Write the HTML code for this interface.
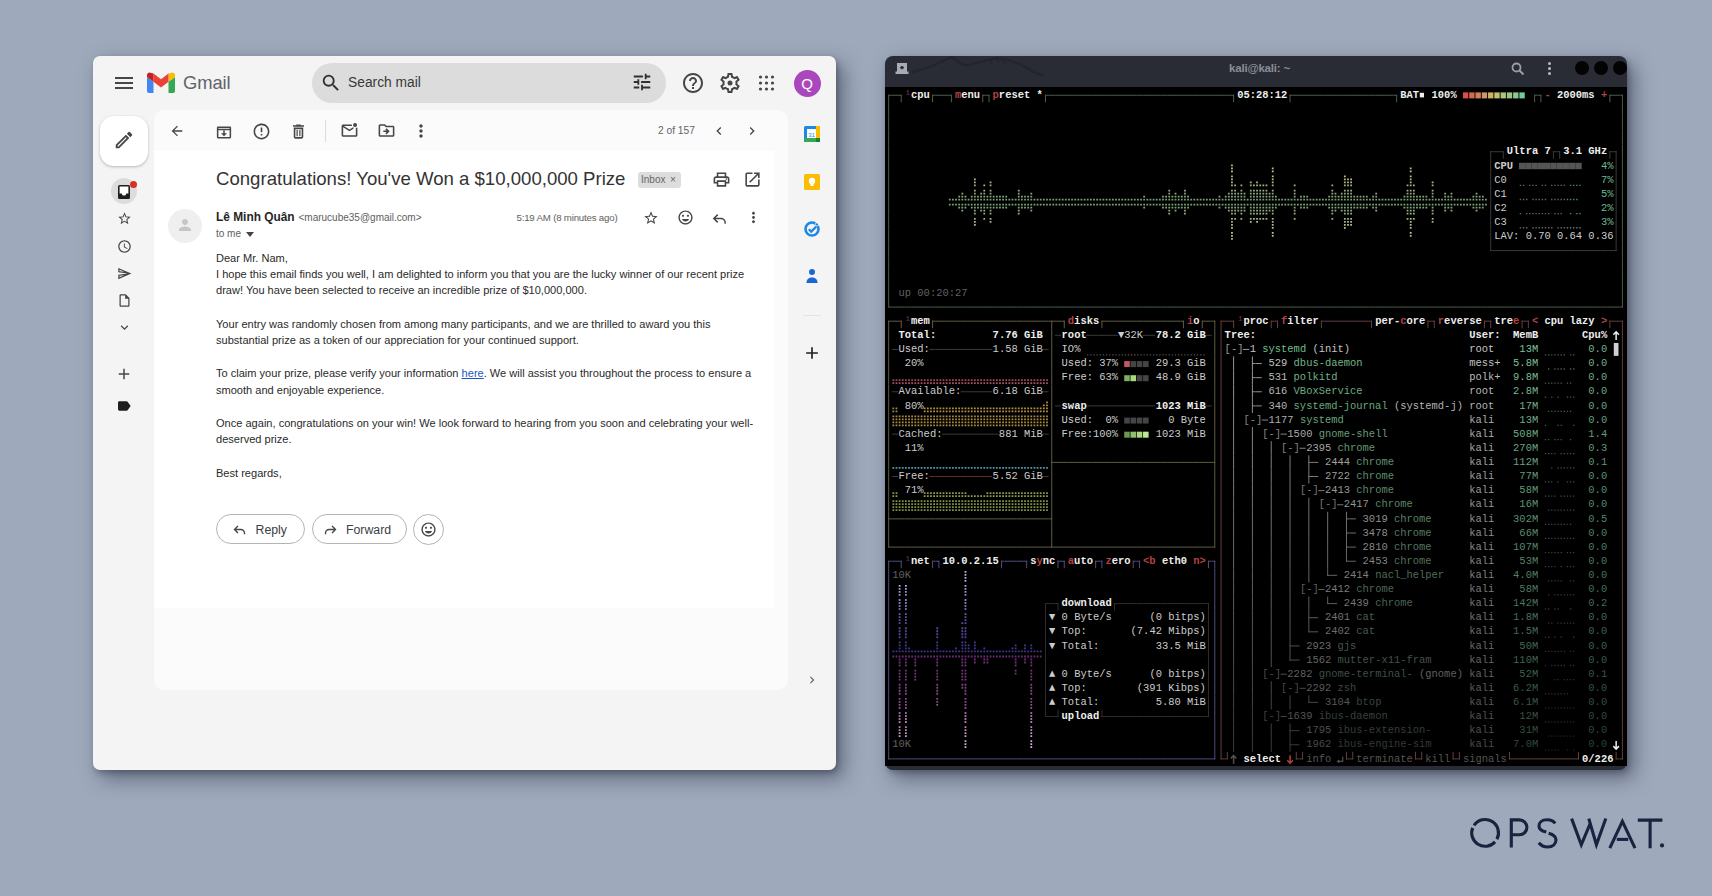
<!DOCTYPE html>
<html><head><meta charset="utf-8"><style>
html,body{margin:0;padding:0;}
body{width:1712px;height:896px;position:relative;overflow:hidden;background:#9ea9bb;font-family:"Liberation Sans",sans-serif;}
.t{position:absolute;white-space:pre;font-family:"Liberation Mono",monospace;}
</style></head><body>
<div style="position:absolute;left:93px;top:56px;width:743px;height:714px;background:#f4f4f4;border-radius:7px;box-shadow:7px 8px 20px rgba(38,45,64,0.55), 2px 3px 5px rgba(38,45,64,0.3);"></div>
<svg style="position:absolute;left:112px;top:71px" width="24" height="24" viewBox="0 0 24 24"><path fill="#444746" d="M3 18h18v-2H3v2zm0-5h18v-2H3v2zm0-7v2h18V6H3z"/></svg>
<svg style="position:absolute;left:147px;top:72px" width="28" height="21" viewBox="0 0 28 21"><path fill="#4285f4" d="M2 21h4.5V9.8L0 5v14a2 2 0 0 0 2 2z"/><path fill="#34a853" d="M21.5 21H26a2 2 0 0 0 2-2V5l-6.5 4.8z"/><path fill="#fbbc04" d="M21.5 1.5v8.3L28 5V3.2c0-2.2-2.5-3.4-4.2-2.1z"/><path fill="#ea4335" d="M6.5 9.8V1.5L14 7.2l7.5-5.7v8.3L14 15.5z"/><path fill="#c5221f" d="M0 3.2V5l6.5 4.8V1.5L4.2 1.1C2.5-.2 0 1 0 3.2z"/></svg>
<div style="position:absolute;left:183px;top:74.02px;font-size:18.4px;line-height:18.4px;color:#5f6368;font-weight:normal;white-space:pre;letter-spacing:-0.1px">Gmail</div>
<div style="position:absolute;left:312px;top:63px;width:354px;height:40px;border-radius:20px;background:#dcdcdc"></div>
<svg style="position:absolute;left:320px;top:72px" width="22" height="22" viewBox="0 0 24 24"><path fill="#303030" d="M15.5 14h-.79l-.28-.27A6.471 6.471 0 0 0 16 9.5 6.5 6.5 0 1 0 9.5 16c1.61 0 3.09-.59 4.23-1.57l.27.28v.79l5 4.99L20.49 19l-4.99-5zm-6 0C7.01 14 5 11.99 5 9.5S7.01 5 9.5 5 14 7.01 14 9.5 11.99 14 9.5 14z"/></svg>
<div style="position:absolute;left:348px;top:75.72px;font-size:13.8px;line-height:13.8px;color:#383838;font-weight:normal;white-space:pre;">Search mail</div>
<svg style="position:absolute;left:631px;top:71px" width="22" height="22" viewBox="0 0 24 24"><path fill="#303030" d="M3 17v2h6v-2H3zM3 5v2h10V5H3zm10 16v-2h8v-2h-8v-2h-2v6h2zM7 9v2H3v2h4v2h2V9H7zm14 4v-2H11v2h10zm-6-4h2V7h4V5h-4V3h-2v6z"/></svg>
<svg style="position:absolute;left:681px;top:71px" width="24" height="24" viewBox="0 0 24 24"><path fill="#444746" d="M11 18h2v-2h-2v2zm1-16C6.48 2 2 6.48 2 12s4.48 10 10 10 10-4.48 10-10S17.52 2 12 2zm0 18c-4.41 0-8-3.59-8-8s3.59-8 8-8 8 3.59 8 8-3.59 8-8 8zm0-14c-2.21 0-4 1.79-4 4h2c0-1.1.9-2 2-2s2 .9 2 2c0 2-3 1.75-3 5h2c0-2.25 3-2.5 3-5 0-2.21-1.79-4-4-4z"/></svg>
<svg style="position:absolute;left:718px;top:71px" width="24" height="24" viewBox="0 0 24 24"><path fill="#444746" d="M19.43 12.98c.04-.32.07-.64.07-.98 0-.34-.03-.66-.07-.98l2.11-1.65c.19-.15.24-.42.12-.64l-2-3.46a.5.5 0 0 0-.61-.22l-2.49 1c-.52-.4-1.08-.73-1.69-.98l-.38-2.65A.488.488 0 0 0 14 2h-4c-.25 0-.46.18-.49.42l-.38 2.65c-.61.25-1.17.59-1.69.98l-2.49-1a.566.566 0 0 0-.18-.03c-.17 0-.34.09-.43.25l-2 3.46c-.13.22-.07.49.12.64l2.11 1.65c-.04.32-.07.65-.07.98s.03.66.07.98l-2.11 1.65c-.19.15-.24.42-.12.64l2 3.46a.5.5 0 0 0 .61.22l2.49-1c.52.4 1.08.73 1.69.98l.38 2.65c.03.24.24.42.49.42h4c.25 0 .46-.18.49-.42l.38-2.65c.61-.25 1.17-.59 1.69-.98l2.49 1c.06.02.12.03.18.03.17 0 .34-.09.43-.25l2-3.46c.12-.22.07-.49-.12-.64l-2.11-1.65zm-1.98-1.71c.04.31.05.52.05.73 0 .21-.02.43-.05.73l-.14 1.13.89.7 1.08.84-.7 1.21-1.27-.51-1.04-.42-.9.68c-.43.32-.84.56-1.25.73l-1.06.43-.16 1.13-.2 1.35h-1.4l-.19-1.35-.16-1.13-1.06-.43c-.43-.18-.83-.41-1.23-.71l-.91-.7-1.06.43-1.27.51-.7-1.21 1.08-.84.89-.7-.14-1.13c-.03-.31-.05-.54-.05-.74s.02-.43.05-.73l.14-1.13-.89-.7-1.08-.84.7-1.21 1.27.51 1.04.42.9-.68c.43-.32.84-.56 1.25-.73l1.06-.43.16-1.13.2-1.35h1.39l.19 1.35.16 1.13 1.06.43c.43.18.83.41 1.23.71l.91.7 1.06-.43 1.27-.51.7 1.21-1.07.85-.89.7.14 1.13zM12 9.5a2.5 2.5 0 1 0 0 5 2.5 2.5 0 0 0 0-5z"/></svg>
<svg style="position:absolute;left:0;top:0" width="1712" height="896"><circle cx="760.5" cy="77" r="1.6" fill="#444746"/><circle cx="760.5" cy="83" r="1.6" fill="#444746"/><circle cx="760.5" cy="89" r="1.6" fill="#444746"/><circle cx="766.5" cy="77" r="1.6" fill="#444746"/><circle cx="766.5" cy="83" r="1.6" fill="#444746"/><circle cx="766.5" cy="89" r="1.6" fill="#444746"/><circle cx="772.5" cy="77" r="1.6" fill="#444746"/><circle cx="772.5" cy="83" r="1.6" fill="#444746"/><circle cx="772.5" cy="89" r="1.6" fill="#444746"/></svg>
<div style="position:absolute;left:793.5px;top:69.5px;width:27px;height:27px;border-radius:50%;background:#ab47bc;color:#fff;font-size:15px;line-height:27px;text-align:center;">Q</div>
<div style="position:absolute;left:100px;top:116px;width:48px;height:50px;border-radius:14px;background:#fff;box-shadow:0 1px 3px rgba(0,0,0,0.25)"></div>
<svg style="position:absolute;left:113px;top:129px" width="22" height="22" viewBox="0 0 24 24"><path fill="#444746" d="M3 17.25V21h3.75L17.81 9.94l-3.75-3.75L3 17.25zM5.92 19H5v-.92l9.06-9.06.92.92L5.92 19zM20.71 5.63l-2.34-2.34a.996.996 0 0 0-1.41 0l-1.83 1.83 3.75 3.75 1.83-1.83a.996.996 0 0 0 0-1.41z"/></svg>
<div style="position:absolute;left:111px;top:178px;width:26px;height:26px;border-radius:50%;background:#dcdcdc"></div>
<svg style="position:absolute;left:117px;top:185px" width="14" height="14" viewBox="0 0 14 14"><path fill="#1f1f1f" d="M1 1.5A1.5 1.5 0 0 1 2.5 0h9A1.5 1.5 0 0 1 13 1.5v11a1.5 1.5 0 0 1-1.5 1.5h-9A1.5 1.5 0 0 1 1 12.5z"/><path fill="#ffffff" d="M2.6 1.6h8.8v6.8H9.2a2.2 2.2 0 0 1-4.4 0H2.6z"/></svg>
<div style="position:absolute;left:130px;top:181px;width:7px;height:7px;border-radius:50%;background:#d93025"></div>
<svg style="position:absolute;left:117px;top:211px" width="15" height="15" viewBox="0 0 24 24"><path fill="#444746" d="M22 9.24l-7.19-.62L12 2 9.19 8.63 2 9.24l5.46 4.73L5.82 21 12 17.27 18.18 21l-1.63-7.03L22 9.24zM12 15.4l-3.76 2.27 1-4.28-3.32-2.88 4.38-.38L12 6.1l1.71 4.04 4.38.38-3.32 2.88 1 4.28L12 15.4z"/></svg>
<svg style="position:absolute;left:117px;top:238.5px" width="15" height="15" viewBox="0 0 24 24"><path fill="#444746" d="M11.99 2C6.47 2 2 6.48 2 12s4.47 10 9.99 10C17.52 22 22 17.52 22 12S17.52 2 11.99 2zM12 20c-4.42 0-8-3.58-8-8s3.58-8 8-8 8 3.58 8 8-3.58 8-8 8zm.5-13H11v6l5.25 3.15.75-1.23-4.5-2.67z"/></svg>
<svg style="position:absolute;left:117px;top:265.5px" width="15" height="15" viewBox="0 0 24 24"><path fill="#444746" d="M4.01 6.03l7.51 3.22-7.52-1 .01-2.22m7.5 8.72L4 17.97v-2.22l7.51-1M2.01 3L2 10l15 2-15 2 .01 7L23 12 2.01 3z"/></svg>
<svg style="position:absolute;left:117px;top:292.5px" width="15" height="15" viewBox="0 0 24 24"><path fill="#444746" d="M14 2H6c-1.1 0-1.99.9-1.99 2L4 20c0 1.1.89 2 1.99 2H18c1.1 0 2-.9 2-2V8l-6-6zM6 20V4h7v5h5v11H6z"/></svg>
<svg style="position:absolute;left:117px;top:319.5px" width="15" height="15" viewBox="0 0 24 24"><path fill="#444746" d="M16.59 8.59L12 13.17 7.41 8.59 6 10l6 6 6-6z"/></svg>
<svg style="position:absolute;left:115px;top:365px" width="18" height="18" viewBox="0 0 24 24"><path fill="#444746" d="M19 13h-6v6h-2v-6H5v-2h6V5h2v6h6v2z"/></svg>
<svg style="position:absolute;left:116px;top:398px" width="16" height="16" viewBox="0 0 24 24"><path fill="#1f1f1f" d="M17.63 5.84C17.27 5.33 16.67 5 16 5L5 5.01C3.9 5.01 3 5.9 3 7v10c0 1.1.9 1.99 2 1.99L16 19c.67 0 1.27-.33 1.63-.84L22 12l-4.37-6.16z"/></svg>
<div style="position:absolute;left:154px;top:110px;width:634px;height:580px;border-radius:10px;background:#fbfbfb"></div>
<div style="position:absolute;left:154px;top:151px;width:620px;height:457px;background:#ffffff"></div>
<svg style="position:absolute;left:169px;top:123px" width="16" height="16" viewBox="0 0 24 24"><path fill="#444746" d="M20 11H7.83l5.59-5.59L12 4l-8 8 8 8 1.41-1.41L7.83 13H20v-2z"/></svg>
<svg style="position:absolute;left:215px;top:123px" width="18" height="18" viewBox="0 0 24 24"><path fill="#444746" d="M20 4.5H4a1.5 1.5 0 0 0-1.5 1.5v13A1.5 1.5 0 0 0 4 20.5h16a1.5 1.5 0 0 0 1.5-1.5V6A1.5 1.5 0 0 0 20 4.5zM19.5 18.5h-15V9.5h15v9zm0-11h-15V6.5h15v1zM12 17.5l4-4h-3v-3.5h-2v3.5H8z"/></svg>
<svg style="position:absolute;left:252px;top:122px" width="19" height="19" viewBox="0 0 24 24"><path fill="#444746" d="M12 2C6.48 2 2 6.48 2 12s4.48 10 10 10 10-4.48 10-10S17.52 2 12 2zm0 18c-4.41 0-8-3.59-8-8s3.59-8 8-8 8 3.59 8 8-3.59 8-8 8zM11 7h2v6h-2zm0 8h2v2h-2z"/></svg>
<svg style="position:absolute;left:289px;top:122px" width="19" height="19" viewBox="0 0 24 24"><path fill="#444746" d="M16 9v10H8V9h8m-1.5-6h-5l-1 1H5v2h14V4h-3.5l-1-1zM18 7H6v12c0 1.1.9 2 2 2h8c1.1 0 2-.9 2-2V7zM9.5 10h1.5v8H9.5zm3.5 0h1.5v8H13z"/></svg>
<div style="position:absolute;left:325px;top:120px;width:1px;height:22px;background:#dadce0"></div>
<svg style="position:absolute;left:340px;top:121px" width="19" height="19" viewBox="0 0 24 24"><path fill="#444746" d="M20 8.5v9.5H4V8l8 5 5-3.1V7.6L12 10.7 4.8 6.2H15V4.5H4c-1.1 0-2 .9-2 2V18c0 1.1.9 2 2 2h16c1.1 0 2-.9 2-2V8.5z M19 2.5a2.5 2.5 0 1 0 0 5 2.5 2.5 0 0 0 0-5z"/></svg>
<svg style="position:absolute;left:377px;top:121px" width="19" height="19" viewBox="0 0 24 24"><path fill="#444746" d="M20 6h-8l-2-2H4c-1.1 0-2 .9-2 2v12c0 1.1.9 2 2 2h16c1.1 0 2-.9 2-2V8c0-1.1-.9-2-2-2zm0 12H4V6h5.17l2 2H20v10zM12.16 12H8v2h4.16l-1.59 1.59L11.99 17 16 13l-4.01-4-1.41 1.41z"/></svg>
<svg style="position:absolute;left:411px;top:121px" width="20" height="20" viewBox="0 0 24 24"><path fill="#444746" d="M12 8c1.1 0 2-.9 2-2s-.9-2-2-2-2 .9-2 2 .9 2 2 2zm0 2c-1.1 0-2 .9-2 2s.9 2 2 2 2-.9 2-2-.9-2-2-2zm0 6c-1.1 0-2 .9-2 2s.9 2 2 2 2-.9 2-2-.9-2-2-2z"/></svg>
<div style="position:absolute;left:658px;top:126.37px;font-size:10.2px;line-height:10.2px;color:#5f6368;font-weight:normal;white-space:pre;">2 of 157</div>
<svg style="position:absolute;left:711px;top:123px" width="16" height="16" viewBox="0 0 24 24"><path fill="#444746" d="M15.41 7.41L14 6l-6 6 6 6 1.41-1.41L10.83 12z"/></svg>
<svg style="position:absolute;left:744px;top:123px" width="16" height="16" viewBox="0 0 24 24"><path fill="#444746" d="M10 6L8.59 7.41 13.17 12l-4.58 4.59L10 18l6-6z"/></svg>
<div style="position:absolute;left:216px;top:170.46px;font-size:18.6px;line-height:18.6px;color:#333333;font-weight:normal;white-space:pre;">Congratulations! You&#39;ve Won a $10,000,000 Prize</div>
<div style="position:absolute;left:638px;top:172px;width:43px;height:16px;border-radius:3px;background:#dddddd"></div>
<div style="position:absolute;left:641px;top:175.03px;font-size:10px;line-height:10px;color:#666666;font-weight:normal;white-space:pre;">Inbox</div>
<div style="position:absolute;left:670px;top:175.03px;font-size:10px;line-height:10px;color:#666666;font-weight:normal;white-space:pre;">×</div>
<svg style="position:absolute;left:712px;top:170px" width="19" height="19" viewBox="0 0 24 24"><path fill="#444746" d="M19 8h-1V3H6v5H5c-1.66 0-3 1.34-3 3v6h4v4h12v-4h4v-6c0-1.66-1.34-3-3-3zM8 5h8v3H8V5zm8 14H8v-4h8v4zm2-4v-2H6v2H4v-4c0-.55.45-1 1-1h14c.55 0 1 .45 1 1v4h-2z M18 10.5a1 1 0 1 0 0 2 1 1 0 0 0 0-2z"/></svg>
<svg style="position:absolute;left:743px;top:170px" width="19" height="19" viewBox="0 0 24 24"><path fill="#444746" d="M19 19H5V5h7V3H5a2 2 0 0 0-2 2v14a2 2 0 0 0 2 2h14c1.1 0 2-.9 2-2v-7h-2v7zM14 3v2h3.59l-9.83 9.83 1.41 1.41L19 6.41V10h2V3h-7z"/></svg>
<div style="position:absolute;left:168px;top:209px;width:34px;height:34px;border-radius:50%;background:#efefef"></div>
<svg style="position:absolute;left:176px;top:216px" width="18" height="18" viewBox="0 0 24 24"><path fill="#c6c6c6" d="M12 12c2.21 0 4-1.79 4-4s-1.79-4-4-4-4 1.79-4 4 1.79 4 4 4zm0 2c-2.67 0-8 1.34-8 4v2h16v-2c0-2.66-5.33-4-8-4z"/></svg>
<div style="position:absolute;left:216px;top:211.53px;font-size:11.9px;line-height:11.9px;color:#262626;font-weight:bold;white-space:pre;">Lê Minh Quân</div>
<div style="position:absolute;left:298.5px;top:213.13px;font-size:10px;line-height:10px;color:#5e5e5e;font-weight:normal;white-space:pre;">&lt;marucube35@gmail.com&gt;</div>
<div style="position:absolute;left:216px;top:228.84px;font-size:10px;line-height:10px;color:#5e5e5e;font-weight:normal;white-space:pre;">to me</div>
<svg style="position:absolute;left:246px;top:232px" width="8" height="5" viewBox="0 0 8 5"><path d="M0 0h8L4 5z" fill="#444"/></svg>
<div style="position:absolute;left:516.5px;top:213.09px;font-size:9.7px;line-height:9.7px;color:#5e5e5e;font-weight:normal;white-space:pre;letter-spacing:-0.2px">5:19 AM (8 minutes ago)</div>
<svg style="position:absolute;left:643px;top:210px" width="16" height="16" viewBox="0 0 24 24"><path fill="#444746" d="M22 9.24l-7.19-.62L12 2 9.19 8.63 2 9.24l5.46 4.73L5.82 21 12 17.27 18.18 21l-1.63-7.03L22 9.24zM12 15.4l-3.76 2.27 1-4.28-3.32-2.88 4.38-.38L12 6.1l1.71 4.04 4.38.38-3.32 2.88 1 4.28L12 15.4z"/></svg>
<svg style="position:absolute;left:677px;top:209px" width="17" height="17" viewBox="0 0 24 24"><path fill="#444746" d="M11.99 2C6.47 2 2 6.48 2 12s4.47 10 9.99 10C17.52 22 22 17.52 22 12S17.52 2 11.99 2zM12 20c-4.42 0-8-3.58-8-8s3.58-8 8-8 8 3.58 8 8-3.58 8-8 8zm3.5-9c.83 0 1.5-.67 1.5-1.5S16.33 8 15.5 8 14 8.67 14 9.5s.67 1.5 1.5 1.5zm-7 0c.83 0 1.5-.67 1.5-1.5S9.33 8 8.5 8 7 8.67 7 9.5 7.67 11 8.5 11zm3.5 6.5c2.33 0 4.31-1.46 5.11-3.5H6.89c.8 2.04 2.78 3.5 5.11 3.5z"/></svg>
<svg style="position:absolute;left:711px;top:210px" width="17" height="17" viewBox="0 0 24 24"><path d="M9.5 6.5L4 12l5.5 5.5M4.5 12H14a6 6 0 0 1 6 6v1.5" fill="none" stroke="#444746" stroke-width="2.1"/></svg>
<svg style="position:absolute;left:745px;top:209px" width="17" height="17" viewBox="0 0 24 24"><path fill="#444746" d="M12 8c1.1 0 2-.9 2-2s-.9-2-2-2-2 .9-2 2 .9 2 2 2zm0 2c-1.1 0-2 .9-2 2s.9 2 2 2 2-.9 2-2-.9-2-2-2zm0 6c-1.1 0-2 .9-2 2s.9 2 2 2 2-.9 2-2-.9-2-2-2z"/></svg>
<div style="position:absolute;left:216px;top:252.65px;font-size:11.05px;line-height:11.05px;color:#2a2a2a;font-weight:normal;white-space:pre;">Dear Mr. Nam,</div>
<div style="position:absolute;left:216px;top:268.65px;font-size:11.05px;line-height:11.05px;color:#2a2a2a;font-weight:normal;white-space:pre;">I hope this email finds you well, I am delighted to inform you that you are the lucky winner of our recent prize</div>
<div style="position:absolute;left:216px;top:285.45px;font-size:11.05px;line-height:11.05px;color:#2a2a2a;font-weight:normal;white-space:pre;">draw! You have been selected to receive an incredible prize of $10,000,000.</div>
<div style="position:absolute;left:216px;top:319.05px;font-size:11.05px;line-height:11.05px;color:#2a2a2a;font-weight:normal;white-space:pre;">Your entry was randomly chosen from among many participants, and we are thrilled to award you this</div>
<div style="position:absolute;left:216px;top:335.25px;font-size:11.05px;line-height:11.05px;color:#2a2a2a;font-weight:normal;white-space:pre;">substantial prize as a token of our appreciation for your continued support.</div>
<div style="position:absolute;left:216px;top:368.25px;font-size:11.05px;line-height:11.05px;color:#2a2a2a;font-weight:normal;white-space:pre;">To claim your prize, please verify your information <span style="color:#1a55c8;text-decoration:underline">here</span>. We will assist you throughout the process to ensure a</div>
<div style="position:absolute;left:216px;top:384.65px;font-size:11.05px;line-height:11.05px;color:#2a2a2a;font-weight:normal;white-space:pre;">smooth and enjoyable experience.</div>
<div style="position:absolute;left:216px;top:417.85px;font-size:11.05px;line-height:11.05px;color:#2a2a2a;font-weight:normal;white-space:pre;">Once again, congratulations on your win! We look forward to hearing from you soon and celebrating your well-</div>
<div style="position:absolute;left:216px;top:434.25px;font-size:11.05px;line-height:11.05px;color:#2a2a2a;font-weight:normal;white-space:pre;">deserved prize.</div>
<div style="position:absolute;left:216px;top:467.65px;font-size:11.05px;line-height:11.05px;color:#2a2a2a;font-weight:normal;white-space:pre;">Best regards,</div>
<div style="position:absolute;left:215.5px;top:514px;width:89px;height:30px;box-sizing:border-box;border:1.2px solid #b4b4b4;border-radius:15px;"></div>
<div style="position:absolute;left:311.5px;top:514px;width:95px;height:30px;box-sizing:border-box;border:1.2px solid #b4b4b4;border-radius:15px;"></div>
<div style="position:absolute;left:412.5px;top:514px;width:31px;height:31px;box-sizing:border-box;border:1.2px solid #b4b4b4;border-radius:50%"></div>
<svg style="position:absolute;left:232px;top:522px" width="15" height="15" viewBox="0 0 24 24"><path d="M9.5 6.5L4 12l5.5 5.5M4.5 12H14a6 6 0 0 1 6 6v1.5" fill="none" stroke="#444746" stroke-width="2.2"/></svg>
<div style="position:absolute;left:255.5px;top:524.19px;font-size:12.3px;line-height:12.3px;color:#3c4043;font-weight:normal;white-space:pre;">Reply</div>
<svg style="position:absolute;left:322.5px;top:522px" width="15" height="15" viewBox="0 0 24 24"><path d="M14.5 6.5L20 12l-5.5 5.5M19.5 12H10a6 6 0 0 0-6 6v1.5" fill="none" stroke="#444746" stroke-width="2.2"/></svg>
<div style="position:absolute;left:346px;top:524.19px;font-size:12.3px;line-height:12.3px;color:#3c4043;font-weight:normal;white-space:pre;">Forward</div>
<svg style="position:absolute;left:419.5px;top:521px" width="17" height="17" viewBox="0 0 24 24"><path fill="#444746" d="M11.99 2C6.47 2 2 6.48 2 12s4.47 10 9.99 10C17.52 22 22 17.52 22 12S17.52 2 11.99 2zM12 20c-4.42 0-8-3.58-8-8s3.58-8 8-8 8 3.58 8 8-3.58 8-8 8zm3.5-9c.83 0 1.5-.67 1.5-1.5S16.33 8 15.5 8 14 8.67 14 9.5s.67 1.5 1.5 1.5zm-7 0c.83 0 1.5-.67 1.5-1.5S9.33 8 8.5 8 7 8.67 7 9.5 7.67 11 8.5 11zm3.5 6.5c2.33 0 4.31-1.46 5.11-3.5H6.89c.8 2.04 2.78 3.5 5.11 3.5z"/></svg>
<svg style="position:absolute;left:804px;top:126px" width="16" height="16" viewBox="0 0 16 16"><rect x="0" y="0" width="16" height="16" rx="1.5" fill="#1e88e5"/><rect x="12" y="0" width="4" height="12" fill="#fbbc04"/><rect x="0" y="12" width="12" height="4" fill="#34a853"/><rect x="12" y="12" width="4" height="4" fill="#188038"/><rect x="3" y="3" width="9" height="9" fill="#ffffff"/><text x="7.5" y="10.5" font-size="6" text-anchor="middle" fill="#1e88e5" font-family="Liberation Sans">31</text></svg>
<svg style="position:absolute;left:804px;top:174px" width="16" height="16" viewBox="0 0 16 16"><rect x="0" y="0" width="16" height="16" rx="1.5" fill="#fbbc04"/><circle cx="8" cy="7" r="3.2" fill="#fff"/><rect x="6.5" y="9.5" width="3" height="2.5" fill="#fff"/></svg>
<svg style="position:absolute;left:804px;top:221px" width="16" height="16" viewBox="0 0 16 16"><circle cx="8" cy="8" r="6.5" fill="none" stroke="#1e88e5" stroke-width="2.6"/><path d="M4.8 8.2l2.4 2.4 5-5" fill="none" stroke="#1e88e5" stroke-width="2.2"/><circle cx="13" cy="3.2" r="2" fill="#fff"/><circle cx="12.8" cy="3.5" r="1.3" fill="#1e88e5"/></svg>
<svg style="position:absolute;left:805px;top:268px" width="14" height="16" viewBox="0 0 14 16"><circle cx="7" cy="4" r="3" fill="#1a66d8"/><path d="M1.5 15c0-4 2.5-5.5 5.5-5.5s5.5 1.5 5.5 5.5z" fill="#1a66d8"/></svg>
<div style="position:absolute;left:803px;top:315px;width:18px;height:1px;background:#e3e3e3"></div>
<svg style="position:absolute;left:802px;top:343px" width="20" height="20" viewBox="0 0 24 24"><path fill="#1f1f1f" d="M19 13h-6v6h-2v-6H5v-2h6V5h2v6h6v2z"/></svg>
<svg style="position:absolute;left:805px;top:673px" width="14" height="14" viewBox="0 0 24 24"><path fill="#5f6368" d="M10 6L8.59 7.41 13.17 12l-4.58 4.59L10 18l6-6z"/></svg>
<div style="position:absolute;left:885px;top:56px;width:742px;height:714px;background:#292c35;border-radius:8px;box-shadow:7px 8px 20px rgba(38,45,64,0.55), 2px 3px 5px rgba(38,45,64,0.3)"></div>
<div style="position:absolute;left:885px;top:87.2px;width:742px;height:678.6px;background:#000"></div>
<svg style="position:absolute;left:885px;top:56px" width="200" height="31" viewBox="0 0 200 31"><path d="M28 16C45 12 55 6 67 1M67 1C73 7 78 10 84 9C93 7 99 4 112 2C124 3 135 8 142 12C148 16 152 18 158 19" fill="none" stroke="#22252d" stroke-width="2.2" stroke-linecap="round"/><path d="M104 3L107 7M111 2L114 6M117 3L120 7" stroke="#22252d" stroke-width="1.6"/></svg>
<svg style="position:absolute;left:895px;top:62px" width="14" height="13" viewBox="0 0 14 13"><path d="M2 1h10v8.5h1.5V12H.5V9.5H2z" fill="#a8abb2"/><path d="M7 4v3.2M5.2 5.6h3.6" stroke="#262932" stroke-width="1.6"/></svg>
<div style="position:absolute;left:1229px;top:61px;font-size:11.5px;line-height:14px;color:#8a8e97;font-weight:bold;letter-spacing:-0.2px;white-space:pre">kali@kali: ~</div>
<svg style="position:absolute;left:1510px;top:61px" width="16" height="16" viewBox="0 0 16 16"><circle cx="6.5" cy="6.5" r="4" fill="none" stroke="#9a9ea6" stroke-width="1.8"/><path d="M9.5 9.5l4 4" stroke="#9a9ea6" stroke-width="2"/></svg>
<div style="position:absolute;left:1547.8px;top:61.9px;width:3px;height:3px;border-radius:50%;background:#b8bbc2"></div>
<div style="position:absolute;left:1547.8px;top:66.7px;width:3px;height:3px;border-radius:50%;background:#b8bbc2"></div>
<div style="position:absolute;left:1547.8px;top:71.5px;width:3px;height:3px;border-radius:50%;background:#b8bbc2"></div>
<div style="position:absolute;left:1575.2px;top:61.3px;width:14px;height:14px;border-radius:50%;background:#030303"></div>
<div style="position:absolute;left:1593.8px;top:61.3px;width:14px;height:14px;border-radius:50%;background:#030303"></div>
<div style="position:absolute;left:1612.9px;top:61.3px;width:14px;height:14px;border-radius:50%;background:#030303"></div>
<svg style="position:absolute;left:0;top:0" width="1712" height="896"><path d="M948.87 198.64h1.8v1.8h-1.8zM948.87 203.76h1.8v1.8h-1.8zM952.02 198.64h1.8v1.8h-1.8zM952.02 203.76h1.8v1.8h-1.8zM955.14 198.64h1.8v1.8h-1.8zM955.14 203.76h1.8v1.8h-1.8zM958.29 198.64h1.8v1.8h-1.8zM958.29 203.76h1.8v1.8h-1.8zM961.41 198.64h1.8v1.8h-1.8zM961.41 203.76h1.8v1.8h-1.8zM964.56 198.64h1.8v1.8h-1.8zM964.56 203.76h1.8v1.8h-1.8zM967.68 198.64h1.8v1.8h-1.8zM967.68 203.76h1.8v1.8h-1.8zM970.83 198.64h1.8v1.8h-1.8zM970.83 203.76h1.8v1.8h-1.8zM973.95 198.64h1.8v1.8h-1.8zM973.95 203.76h1.8v1.8h-1.8zM977.10 198.64h1.8v1.8h-1.8zM977.10 203.76h1.8v1.8h-1.8zM980.23 198.64h1.8v1.8h-1.8zM980.23 203.76h1.8v1.8h-1.8zM983.38 198.64h1.8v1.8h-1.8zM983.38 203.76h1.8v1.8h-1.8zM986.50 198.64h1.8v1.8h-1.8zM986.50 203.76h1.8v1.8h-1.8zM989.65 198.64h1.8v1.8h-1.8zM989.65 203.76h1.8v1.8h-1.8zM992.77 198.64h1.8v1.8h-1.8zM992.77 203.76h1.8v1.8h-1.8zM995.92 198.64h1.8v1.8h-1.8zM995.92 203.76h1.8v1.8h-1.8zM999.04 198.64h1.8v1.8h-1.8zM999.04 203.76h1.8v1.8h-1.8zM1002.19 198.64h1.8v1.8h-1.8zM1002.19 203.76h1.8v1.8h-1.8zM1005.31 198.64h1.8v1.8h-1.8zM1005.31 203.76h1.8v1.8h-1.8zM1008.46 198.64h1.8v1.8h-1.8zM1008.46 203.76h1.8v1.8h-1.8zM1011.58 198.64h1.8v1.8h-1.8zM1011.58 203.76h1.8v1.8h-1.8zM1014.73 198.64h1.8v1.8h-1.8zM1014.73 203.76h1.8v1.8h-1.8zM1017.85 198.64h1.8v1.8h-1.8zM1017.85 203.76h1.8v1.8h-1.8zM1021.00 198.64h1.8v1.8h-1.8zM1021.00 203.76h1.8v1.8h-1.8zM1024.12 198.64h1.8v1.8h-1.8zM1024.12 203.76h1.8v1.8h-1.8zM1027.27 198.64h1.8v1.8h-1.8zM1027.27 203.76h1.8v1.8h-1.8zM1030.39 198.64h1.8v1.8h-1.8zM1030.39 203.76h1.8v1.8h-1.8zM1033.54 198.64h1.8v1.8h-1.8zM1033.54 203.76h1.8v1.8h-1.8zM1036.66 198.64h1.8v1.8h-1.8zM1036.66 203.76h1.8v1.8h-1.8zM1039.81 198.64h1.8v1.8h-1.8zM1039.81 203.76h1.8v1.8h-1.8zM1042.93 198.64h1.8v1.8h-1.8zM1042.93 203.76h1.8v1.8h-1.8zM1046.09 198.64h1.8v1.8h-1.8zM1046.09 203.76h1.8v1.8h-1.8zM1049.21 198.64h1.8v1.8h-1.8zM1049.21 203.76h1.8v1.8h-1.8zM1052.36 198.64h1.8v1.8h-1.8zM1052.36 203.76h1.8v1.8h-1.8zM1055.48 198.64h1.8v1.8h-1.8zM1055.48 203.76h1.8v1.8h-1.8zM1058.63 198.64h1.8v1.8h-1.8zM1058.63 203.76h1.8v1.8h-1.8zM1061.75 198.64h1.8v1.8h-1.8zM1061.75 203.76h1.8v1.8h-1.8zM1064.90 198.64h1.8v1.8h-1.8zM1064.90 203.76h1.8v1.8h-1.8zM1068.02 198.64h1.8v1.8h-1.8zM1068.02 203.76h1.8v1.8h-1.8zM1071.17 198.64h1.8v1.8h-1.8zM1071.17 203.76h1.8v1.8h-1.8zM1074.29 198.64h1.8v1.8h-1.8zM1074.29 203.76h1.8v1.8h-1.8zM1077.44 198.64h1.8v1.8h-1.8zM1077.44 203.76h1.8v1.8h-1.8zM1080.56 198.64h1.8v1.8h-1.8zM1080.56 203.76h1.8v1.8h-1.8zM1083.71 198.64h1.8v1.8h-1.8zM1083.71 203.76h1.8v1.8h-1.8zM1086.83 198.64h1.8v1.8h-1.8zM1086.83 203.76h1.8v1.8h-1.8zM1089.98 198.64h1.8v1.8h-1.8zM1089.98 203.76h1.8v1.8h-1.8zM1093.10 198.64h1.8v1.8h-1.8zM1093.10 203.76h1.8v1.8h-1.8zM1096.25 198.64h1.8v1.8h-1.8zM1096.25 203.76h1.8v1.8h-1.8zM1099.37 198.64h1.8v1.8h-1.8zM1099.37 203.76h1.8v1.8h-1.8zM1102.52 198.64h1.8v1.8h-1.8zM1102.52 203.76h1.8v1.8h-1.8zM1105.64 198.64h1.8v1.8h-1.8zM1105.64 203.76h1.8v1.8h-1.8zM1108.79 198.64h1.8v1.8h-1.8zM1108.79 203.76h1.8v1.8h-1.8zM1111.92 198.64h1.8v1.8h-1.8zM1111.92 203.76h1.8v1.8h-1.8zM1115.07 198.64h1.8v1.8h-1.8zM1115.07 203.76h1.8v1.8h-1.8zM1118.19 198.64h1.8v1.8h-1.8zM1118.19 203.76h1.8v1.8h-1.8zM1121.34 198.64h1.8v1.8h-1.8zM1121.34 203.76h1.8v1.8h-1.8zM1124.46 198.64h1.8v1.8h-1.8zM1124.46 203.76h1.8v1.8h-1.8zM1127.61 198.64h1.8v1.8h-1.8zM1127.61 203.76h1.8v1.8h-1.8zM1130.73 198.64h1.8v1.8h-1.8zM1130.73 203.76h1.8v1.8h-1.8zM1133.88 198.64h1.8v1.8h-1.8zM1133.88 203.76h1.8v1.8h-1.8zM1137.00 198.64h1.8v1.8h-1.8zM1137.00 203.76h1.8v1.8h-1.8zM1140.15 198.64h1.8v1.8h-1.8zM1140.15 203.76h1.8v1.8h-1.8zM1143.27 198.64h1.8v1.8h-1.8zM1143.27 203.76h1.8v1.8h-1.8zM1146.42 198.64h1.8v1.8h-1.8zM1146.42 203.76h1.8v1.8h-1.8zM1149.54 198.64h1.8v1.8h-1.8zM1149.54 203.76h1.8v1.8h-1.8zM1152.69 198.64h1.8v1.8h-1.8zM1152.69 203.76h1.8v1.8h-1.8zM1155.81 198.64h1.8v1.8h-1.8zM1155.81 203.76h1.8v1.8h-1.8zM1158.96 198.64h1.8v1.8h-1.8zM1158.96 203.76h1.8v1.8h-1.8zM1162.08 198.64h1.8v1.8h-1.8zM1162.08 203.76h1.8v1.8h-1.8zM1165.23 198.64h1.8v1.8h-1.8zM1165.23 203.76h1.8v1.8h-1.8zM1168.35 198.64h1.8v1.8h-1.8zM1168.35 203.76h1.8v1.8h-1.8zM1171.50 198.64h1.8v1.8h-1.8zM1171.50 203.76h1.8v1.8h-1.8zM1174.63 198.64h1.8v1.8h-1.8zM1174.63 203.76h1.8v1.8h-1.8zM1177.78 198.64h1.8v1.8h-1.8zM1177.78 203.76h1.8v1.8h-1.8zM1180.90 198.64h1.8v1.8h-1.8zM1180.90 203.76h1.8v1.8h-1.8zM1184.05 198.64h1.8v1.8h-1.8zM1184.05 203.76h1.8v1.8h-1.8zM1187.17 198.64h1.8v1.8h-1.8zM1187.17 203.76h1.8v1.8h-1.8zM1190.32 198.64h1.8v1.8h-1.8zM1190.32 203.76h1.8v1.8h-1.8zM1193.44 198.64h1.8v1.8h-1.8zM1193.44 203.76h1.8v1.8h-1.8zM1196.59 198.64h1.8v1.8h-1.8zM1196.59 203.76h1.8v1.8h-1.8zM1199.71 198.64h1.8v1.8h-1.8zM1199.71 203.76h1.8v1.8h-1.8zM1202.86 198.64h1.8v1.8h-1.8zM1202.86 203.76h1.8v1.8h-1.8zM1205.98 198.64h1.8v1.8h-1.8zM1205.98 203.76h1.8v1.8h-1.8zM1209.13 198.64h1.8v1.8h-1.8zM1209.13 203.76h1.8v1.8h-1.8zM1212.25 198.64h1.8v1.8h-1.8zM1212.25 203.76h1.8v1.8h-1.8zM1215.40 198.64h1.8v1.8h-1.8zM1215.40 203.76h1.8v1.8h-1.8zM1218.52 198.64h1.8v1.8h-1.8zM1218.52 203.76h1.8v1.8h-1.8zM1221.67 198.64h1.8v1.8h-1.8zM1221.67 203.76h1.8v1.8h-1.8zM1224.79 198.64h1.8v1.8h-1.8zM1224.79 203.76h1.8v1.8h-1.8zM1227.94 198.64h1.8v1.8h-1.8zM1227.94 203.76h1.8v1.8h-1.8zM1231.06 198.64h1.8v1.8h-1.8zM1231.06 203.76h1.8v1.8h-1.8zM1234.21 198.64h1.8v1.8h-1.8zM1234.21 203.76h1.8v1.8h-1.8zM1237.34 198.64h1.8v1.8h-1.8zM1237.34 203.76h1.8v1.8h-1.8zM1240.49 198.64h1.8v1.8h-1.8zM1240.49 203.76h1.8v1.8h-1.8zM1243.61 198.64h1.8v1.8h-1.8zM1243.61 203.76h1.8v1.8h-1.8zM1246.76 198.64h1.8v1.8h-1.8zM1246.76 203.76h1.8v1.8h-1.8zM1249.88 198.64h1.8v1.8h-1.8zM1249.88 203.76h1.8v1.8h-1.8zM1253.03 198.64h1.8v1.8h-1.8zM1253.03 203.76h1.8v1.8h-1.8zM1256.15 198.64h1.8v1.8h-1.8zM1256.15 203.76h1.8v1.8h-1.8zM1259.30 198.64h1.8v1.8h-1.8zM1259.30 203.76h1.8v1.8h-1.8zM1262.42 198.64h1.8v1.8h-1.8zM1262.42 203.76h1.8v1.8h-1.8zM1265.57 198.64h1.8v1.8h-1.8zM1265.57 203.76h1.8v1.8h-1.8zM1268.69 198.64h1.8v1.8h-1.8zM1268.69 203.76h1.8v1.8h-1.8zM1271.84 198.64h1.8v1.8h-1.8zM1271.84 203.76h1.8v1.8h-1.8zM1274.96 198.64h1.8v1.8h-1.8zM1274.96 203.76h1.8v1.8h-1.8zM1278.11 198.64h1.8v1.8h-1.8zM1278.11 203.76h1.8v1.8h-1.8zM1281.23 198.64h1.8v1.8h-1.8zM1281.23 203.76h1.8v1.8h-1.8zM1284.38 198.64h1.8v1.8h-1.8zM1284.38 203.76h1.8v1.8h-1.8zM1287.50 198.64h1.8v1.8h-1.8zM1287.50 203.76h1.8v1.8h-1.8zM1290.65 198.64h1.8v1.8h-1.8zM1290.65 203.76h1.8v1.8h-1.8zM1293.77 198.64h1.8v1.8h-1.8zM1293.77 203.76h1.8v1.8h-1.8zM1296.92 198.64h1.8v1.8h-1.8zM1296.92 203.76h1.8v1.8h-1.8zM1300.05 198.64h1.8v1.8h-1.8zM1300.05 203.76h1.8v1.8h-1.8zM1303.20 198.64h1.8v1.8h-1.8zM1303.20 203.76h1.8v1.8h-1.8zM1306.32 198.64h1.8v1.8h-1.8zM1306.32 203.76h1.8v1.8h-1.8zM1309.47 198.64h1.8v1.8h-1.8zM1309.47 203.76h1.8v1.8h-1.8zM1312.59 198.64h1.8v1.8h-1.8zM1312.59 203.76h1.8v1.8h-1.8zM1315.74 198.64h1.8v1.8h-1.8zM1315.74 203.76h1.8v1.8h-1.8zM1318.86 198.64h1.8v1.8h-1.8zM1318.86 203.76h1.8v1.8h-1.8zM1322.01 198.64h1.8v1.8h-1.8zM1322.01 203.76h1.8v1.8h-1.8zM1325.13 198.64h1.8v1.8h-1.8zM1325.13 203.76h1.8v1.8h-1.8zM1328.28 198.64h1.8v1.8h-1.8zM1328.28 203.76h1.8v1.8h-1.8zM1331.40 198.64h1.8v1.8h-1.8zM1331.40 203.76h1.8v1.8h-1.8zM1334.55 198.64h1.8v1.8h-1.8zM1334.55 203.76h1.8v1.8h-1.8zM1337.67 198.64h1.8v1.8h-1.8zM1337.67 203.76h1.8v1.8h-1.8zM1340.82 198.64h1.8v1.8h-1.8zM1340.82 203.76h1.8v1.8h-1.8zM1343.94 198.64h1.8v1.8h-1.8zM1343.94 203.76h1.8v1.8h-1.8zM1347.09 198.64h1.8v1.8h-1.8zM1347.09 203.76h1.8v1.8h-1.8zM1350.21 198.64h1.8v1.8h-1.8zM1350.21 203.76h1.8v1.8h-1.8zM1353.36 198.64h1.8v1.8h-1.8zM1353.36 203.76h1.8v1.8h-1.8zM1356.48 198.64h1.8v1.8h-1.8zM1356.48 203.76h1.8v1.8h-1.8zM1359.63 198.64h1.8v1.8h-1.8zM1359.63 203.76h1.8v1.8h-1.8zM1362.76 198.64h1.8v1.8h-1.8zM1362.76 203.76h1.8v1.8h-1.8zM1365.91 198.64h1.8v1.8h-1.8zM1365.91 203.76h1.8v1.8h-1.8zM1369.03 198.64h1.8v1.8h-1.8zM1369.03 203.76h1.8v1.8h-1.8zM1372.18 198.64h1.8v1.8h-1.8zM1372.18 203.76h1.8v1.8h-1.8zM1375.30 198.64h1.8v1.8h-1.8zM1375.30 203.76h1.8v1.8h-1.8zM1378.45 198.64h1.8v1.8h-1.8zM1378.45 203.76h1.8v1.8h-1.8zM1381.57 198.64h1.8v1.8h-1.8zM1381.57 203.76h1.8v1.8h-1.8zM1384.72 198.64h1.8v1.8h-1.8zM1384.72 203.76h1.8v1.8h-1.8zM1387.84 198.64h1.8v1.8h-1.8zM1387.84 203.76h1.8v1.8h-1.8zM1390.99 198.64h1.8v1.8h-1.8zM1390.99 203.76h1.8v1.8h-1.8zM1394.11 198.64h1.8v1.8h-1.8zM1394.11 203.76h1.8v1.8h-1.8zM1397.26 198.64h1.8v1.8h-1.8zM1397.26 203.76h1.8v1.8h-1.8zM1400.38 198.64h1.8v1.8h-1.8zM1400.38 203.76h1.8v1.8h-1.8zM1403.53 198.64h1.8v1.8h-1.8zM1403.53 203.76h1.8v1.8h-1.8zM1406.65 198.64h1.8v1.8h-1.8zM1406.65 203.76h1.8v1.8h-1.8zM1409.80 198.64h1.8v1.8h-1.8zM1409.80 203.76h1.8v1.8h-1.8zM1412.92 198.64h1.8v1.8h-1.8zM1412.92 203.76h1.8v1.8h-1.8zM1416.07 198.64h1.8v1.8h-1.8zM1416.07 203.76h1.8v1.8h-1.8zM1419.19 198.64h1.8v1.8h-1.8zM1419.19 203.76h1.8v1.8h-1.8zM1422.34 198.64h1.8v1.8h-1.8zM1422.34 203.76h1.8v1.8h-1.8zM1425.47 198.64h1.8v1.8h-1.8zM1425.47 203.76h1.8v1.8h-1.8zM1428.62 198.64h1.8v1.8h-1.8zM1428.62 203.76h1.8v1.8h-1.8zM1431.74 198.64h1.8v1.8h-1.8zM1431.74 203.76h1.8v1.8h-1.8zM1434.89 198.64h1.8v1.8h-1.8zM1434.89 203.76h1.8v1.8h-1.8zM1438.01 198.64h1.8v1.8h-1.8zM1438.01 203.76h1.8v1.8h-1.8zM1441.16 198.64h1.8v1.8h-1.8zM1441.16 203.76h1.8v1.8h-1.8zM1444.28 198.64h1.8v1.8h-1.8zM1444.28 203.76h1.8v1.8h-1.8zM1447.43 198.64h1.8v1.8h-1.8zM1447.43 203.76h1.8v1.8h-1.8zM1450.55 198.64h1.8v1.8h-1.8zM1450.55 203.76h1.8v1.8h-1.8zM1453.70 198.64h1.8v1.8h-1.8zM1453.70 203.76h1.8v1.8h-1.8zM1456.82 198.64h1.8v1.8h-1.8zM1456.82 203.76h1.8v1.8h-1.8zM1459.97 198.64h1.8v1.8h-1.8zM1459.97 203.76h1.8v1.8h-1.8zM1463.09 198.64h1.8v1.8h-1.8zM1463.09 203.76h1.8v1.8h-1.8zM1466.24 198.64h1.8v1.8h-1.8zM1466.24 203.76h1.8v1.8h-1.8zM1469.36 198.64h1.8v1.8h-1.8zM1469.36 203.76h1.8v1.8h-1.8zM1472.51 198.64h1.8v1.8h-1.8zM1472.51 203.76h1.8v1.8h-1.8zM1475.63 198.64h1.8v1.8h-1.8zM1475.63 203.76h1.8v1.8h-1.8zM1478.78 198.64h1.8v1.8h-1.8zM1478.78 203.76h1.8v1.8h-1.8zM1481.90 198.64h1.8v1.8h-1.8zM1481.90 203.76h1.8v1.8h-1.8zM1485.05 198.64h1.8v1.8h-1.8zM1485.05 203.76h1.8v1.8h-1.8z" fill="#78a076"/><path d="M958.29 195.64h1.8v1.8h-1.8zM958.29 206.76h1.8v1.8h-1.8zM961.41 195.64h1.8v1.8h-1.8zM961.41 206.76h1.8v1.8h-1.8zM964.56 195.64h1.8v1.8h-1.8zM964.56 206.76h1.8v1.8h-1.8zM970.83 195.64h1.8v1.8h-1.8zM970.83 206.76h1.8v1.8h-1.8zM973.95 195.64h1.8v1.8h-1.8zM973.95 206.76h1.8v1.8h-1.8zM977.10 195.64h1.8v1.8h-1.8zM977.10 206.76h1.8v1.8h-1.8zM980.23 195.64h1.8v1.8h-1.8zM980.23 206.76h1.8v1.8h-1.8zM983.38 195.64h1.8v1.8h-1.8zM983.38 206.76h1.8v1.8h-1.8zM986.50 195.64h1.8v1.8h-1.8zM986.50 206.76h1.8v1.8h-1.8zM989.65 195.64h1.8v1.8h-1.8zM989.65 206.76h1.8v1.8h-1.8zM992.77 195.64h1.8v1.8h-1.8zM992.77 206.76h1.8v1.8h-1.8zM995.92 195.64h1.8v1.8h-1.8zM995.92 206.76h1.8v1.8h-1.8zM999.04 195.64h1.8v1.8h-1.8zM999.04 206.76h1.8v1.8h-1.8zM1002.19 195.64h1.8v1.8h-1.8zM1002.19 206.76h1.8v1.8h-1.8zM1005.31 195.64h1.8v1.8h-1.8zM1005.31 206.76h1.8v1.8h-1.8zM1017.85 195.64h1.8v1.8h-1.8zM1017.85 206.76h1.8v1.8h-1.8zM1021.00 195.64h1.8v1.8h-1.8zM1021.00 206.76h1.8v1.8h-1.8zM1024.12 195.64h1.8v1.8h-1.8zM1024.12 206.76h1.8v1.8h-1.8zM1027.27 195.64h1.8v1.8h-1.8zM1027.27 206.76h1.8v1.8h-1.8zM1030.39 195.64h1.8v1.8h-1.8zM1030.39 206.76h1.8v1.8h-1.8zM1143.27 195.64h1.8v1.8h-1.8zM1143.27 206.76h1.8v1.8h-1.8zM1162.08 195.64h1.8v1.8h-1.8zM1162.08 206.76h1.8v1.8h-1.8zM1165.23 195.64h1.8v1.8h-1.8zM1165.23 206.76h1.8v1.8h-1.8zM1168.35 195.64h1.8v1.8h-1.8zM1168.35 206.76h1.8v1.8h-1.8zM1171.50 195.64h1.8v1.8h-1.8zM1171.50 206.76h1.8v1.8h-1.8zM1174.63 195.64h1.8v1.8h-1.8zM1174.63 206.76h1.8v1.8h-1.8zM1177.78 195.64h1.8v1.8h-1.8zM1177.78 206.76h1.8v1.8h-1.8zM1180.90 195.64h1.8v1.8h-1.8zM1180.90 206.76h1.8v1.8h-1.8zM1184.05 195.64h1.8v1.8h-1.8zM1184.05 206.76h1.8v1.8h-1.8zM1187.17 195.64h1.8v1.8h-1.8zM1187.17 206.76h1.8v1.8h-1.8zM1218.52 195.64h1.8v1.8h-1.8zM1218.52 206.76h1.8v1.8h-1.8zM1224.79 195.64h1.8v1.8h-1.8zM1224.79 206.76h1.8v1.8h-1.8zM1227.94 195.64h1.8v1.8h-1.8zM1227.94 206.76h1.8v1.8h-1.8zM1231.06 195.64h1.8v1.8h-1.8zM1231.06 206.76h1.8v1.8h-1.8zM1234.21 195.64h1.8v1.8h-1.8zM1234.21 206.76h1.8v1.8h-1.8zM1237.34 195.64h1.8v1.8h-1.8zM1237.34 206.76h1.8v1.8h-1.8zM1240.49 195.64h1.8v1.8h-1.8zM1240.49 206.76h1.8v1.8h-1.8zM1243.61 195.64h1.8v1.8h-1.8zM1243.61 206.76h1.8v1.8h-1.8zM1249.88 195.64h1.8v1.8h-1.8zM1249.88 206.76h1.8v1.8h-1.8zM1253.03 195.64h1.8v1.8h-1.8zM1253.03 206.76h1.8v1.8h-1.8zM1256.15 195.64h1.8v1.8h-1.8zM1256.15 206.76h1.8v1.8h-1.8zM1259.30 195.64h1.8v1.8h-1.8zM1259.30 206.76h1.8v1.8h-1.8zM1262.42 195.64h1.8v1.8h-1.8zM1262.42 206.76h1.8v1.8h-1.8zM1265.57 195.64h1.8v1.8h-1.8zM1265.57 206.76h1.8v1.8h-1.8zM1268.69 195.64h1.8v1.8h-1.8zM1268.69 206.76h1.8v1.8h-1.8zM1271.84 195.64h1.8v1.8h-1.8zM1271.84 206.76h1.8v1.8h-1.8zM1274.96 195.64h1.8v1.8h-1.8zM1274.96 206.76h1.8v1.8h-1.8zM1293.77 195.64h1.8v1.8h-1.8zM1293.77 206.76h1.8v1.8h-1.8zM1300.05 195.64h1.8v1.8h-1.8zM1300.05 206.76h1.8v1.8h-1.8zM1303.20 195.64h1.8v1.8h-1.8zM1303.20 206.76h1.8v1.8h-1.8zM1306.32 195.64h1.8v1.8h-1.8zM1306.32 206.76h1.8v1.8h-1.8zM1328.28 195.64h1.8v1.8h-1.8zM1328.28 206.76h1.8v1.8h-1.8zM1331.40 195.64h1.8v1.8h-1.8zM1331.40 206.76h1.8v1.8h-1.8zM1334.55 195.64h1.8v1.8h-1.8zM1334.55 206.76h1.8v1.8h-1.8zM1337.67 195.64h1.8v1.8h-1.8zM1337.67 206.76h1.8v1.8h-1.8zM1340.82 195.64h1.8v1.8h-1.8zM1340.82 206.76h1.8v1.8h-1.8zM1343.94 195.64h1.8v1.8h-1.8zM1343.94 206.76h1.8v1.8h-1.8zM1347.09 195.64h1.8v1.8h-1.8zM1347.09 206.76h1.8v1.8h-1.8zM1350.21 195.64h1.8v1.8h-1.8zM1350.21 206.76h1.8v1.8h-1.8zM1353.36 195.64h1.8v1.8h-1.8zM1353.36 206.76h1.8v1.8h-1.8zM1356.48 195.64h1.8v1.8h-1.8zM1356.48 206.76h1.8v1.8h-1.8zM1359.63 195.64h1.8v1.8h-1.8zM1359.63 206.76h1.8v1.8h-1.8zM1362.76 195.64h1.8v1.8h-1.8zM1362.76 206.76h1.8v1.8h-1.8zM1365.91 195.64h1.8v1.8h-1.8zM1365.91 206.76h1.8v1.8h-1.8zM1372.18 195.64h1.8v1.8h-1.8zM1372.18 206.76h1.8v1.8h-1.8zM1375.30 195.64h1.8v1.8h-1.8zM1375.30 206.76h1.8v1.8h-1.8zM1403.53 195.64h1.8v1.8h-1.8zM1403.53 206.76h1.8v1.8h-1.8zM1406.65 195.64h1.8v1.8h-1.8zM1406.65 206.76h1.8v1.8h-1.8zM1409.80 195.64h1.8v1.8h-1.8zM1409.80 206.76h1.8v1.8h-1.8zM1412.92 195.64h1.8v1.8h-1.8zM1412.92 206.76h1.8v1.8h-1.8zM1416.07 195.64h1.8v1.8h-1.8zM1416.07 206.76h1.8v1.8h-1.8zM1419.19 195.64h1.8v1.8h-1.8zM1419.19 206.76h1.8v1.8h-1.8zM1422.34 195.64h1.8v1.8h-1.8zM1422.34 206.76h1.8v1.8h-1.8zM1425.47 195.64h1.8v1.8h-1.8zM1425.47 206.76h1.8v1.8h-1.8zM1431.74 195.64h1.8v1.8h-1.8zM1431.74 206.76h1.8v1.8h-1.8zM1444.28 195.64h1.8v1.8h-1.8zM1444.28 206.76h1.8v1.8h-1.8zM1447.43 195.64h1.8v1.8h-1.8zM1447.43 206.76h1.8v1.8h-1.8zM1450.55 195.64h1.8v1.8h-1.8zM1450.55 206.76h1.8v1.8h-1.8zM1472.51 195.64h1.8v1.8h-1.8zM1472.51 206.76h1.8v1.8h-1.8zM1475.63 195.64h1.8v1.8h-1.8zM1475.63 206.76h1.8v1.8h-1.8zM1478.78 195.64h1.8v1.8h-1.8zM1478.78 206.76h1.8v1.8h-1.8zM1481.90 195.64h1.8v1.8h-1.8zM1481.90 206.76h1.8v1.8h-1.8z" fill="#82a478"/><path d="M961.41 192.64h1.8v1.8h-1.8zM961.41 209.76h1.8v1.8h-1.8zM973.95 192.64h1.8v1.8h-1.8zM973.95 209.76h1.8v1.8h-1.8zM980.23 192.64h1.8v1.8h-1.8zM980.23 209.76h1.8v1.8h-1.8zM983.38 192.64h1.8v1.8h-1.8zM983.38 209.76h1.8v1.8h-1.8zM989.65 192.64h1.8v1.8h-1.8zM989.65 209.76h1.8v1.8h-1.8zM1017.85 192.64h1.8v1.8h-1.8zM1017.85 209.76h1.8v1.8h-1.8zM1030.39 192.64h1.8v1.8h-1.8zM1030.39 209.76h1.8v1.8h-1.8zM1168.35 192.64h1.8v1.8h-1.8zM1168.35 209.76h1.8v1.8h-1.8zM1174.63 192.64h1.8v1.8h-1.8zM1174.63 209.76h1.8v1.8h-1.8zM1184.05 192.64h1.8v1.8h-1.8zM1184.05 209.76h1.8v1.8h-1.8zM1227.94 192.64h1.8v1.8h-1.8zM1227.94 209.76h1.8v1.8h-1.8zM1231.06 192.64h1.8v1.8h-1.8zM1231.06 209.76h1.8v1.8h-1.8zM1234.21 192.64h1.8v1.8h-1.8zM1234.21 209.76h1.8v1.8h-1.8zM1237.34 192.64h1.8v1.8h-1.8zM1237.34 209.76h1.8v1.8h-1.8zM1240.49 192.64h1.8v1.8h-1.8zM1240.49 209.76h1.8v1.8h-1.8zM1243.61 192.64h1.8v1.8h-1.8zM1243.61 209.76h1.8v1.8h-1.8zM1249.88 192.64h1.8v1.8h-1.8zM1249.88 209.76h1.8v1.8h-1.8zM1253.03 192.64h1.8v1.8h-1.8zM1253.03 209.76h1.8v1.8h-1.8zM1256.15 192.64h1.8v1.8h-1.8zM1256.15 209.76h1.8v1.8h-1.8zM1259.30 192.64h1.8v1.8h-1.8zM1259.30 209.76h1.8v1.8h-1.8zM1262.42 192.64h1.8v1.8h-1.8zM1262.42 209.76h1.8v1.8h-1.8zM1265.57 192.64h1.8v1.8h-1.8zM1265.57 209.76h1.8v1.8h-1.8zM1268.69 192.64h1.8v1.8h-1.8zM1268.69 209.76h1.8v1.8h-1.8zM1271.84 192.64h1.8v1.8h-1.8zM1271.84 209.76h1.8v1.8h-1.8zM1293.77 192.64h1.8v1.8h-1.8zM1293.77 209.76h1.8v1.8h-1.8zM1331.40 192.64h1.8v1.8h-1.8zM1331.40 209.76h1.8v1.8h-1.8zM1334.55 192.64h1.8v1.8h-1.8zM1334.55 209.76h1.8v1.8h-1.8zM1340.82 192.64h1.8v1.8h-1.8zM1340.82 209.76h1.8v1.8h-1.8zM1343.94 192.64h1.8v1.8h-1.8zM1343.94 209.76h1.8v1.8h-1.8zM1347.09 192.64h1.8v1.8h-1.8zM1347.09 209.76h1.8v1.8h-1.8zM1350.21 192.64h1.8v1.8h-1.8zM1350.21 209.76h1.8v1.8h-1.8zM1375.30 192.64h1.8v1.8h-1.8zM1375.30 209.76h1.8v1.8h-1.8zM1406.65 192.64h1.8v1.8h-1.8zM1406.65 209.76h1.8v1.8h-1.8zM1409.80 192.64h1.8v1.8h-1.8zM1409.80 209.76h1.8v1.8h-1.8zM1412.92 192.64h1.8v1.8h-1.8zM1412.92 209.76h1.8v1.8h-1.8zM1431.74 192.64h1.8v1.8h-1.8zM1431.74 209.76h1.8v1.8h-1.8zM1444.28 192.64h1.8v1.8h-1.8zM1444.28 209.76h1.8v1.8h-1.8zM1450.55 192.64h1.8v1.8h-1.8zM1450.55 209.76h1.8v1.8h-1.8zM1475.63 192.64h1.8v1.8h-1.8zM1475.63 209.76h1.8v1.8h-1.8z" fill="#8ca87b"/><path d="M973.95 189.64h1.8v1.8h-1.8zM973.95 212.76h1.8v1.8h-1.8zM983.38 189.64h1.8v1.8h-1.8zM983.38 212.76h1.8v1.8h-1.8zM989.65 189.64h1.8v1.8h-1.8zM989.65 212.76h1.8v1.8h-1.8zM1017.85 189.64h1.8v1.8h-1.8zM1017.85 212.76h1.8v1.8h-1.8zM1168.35 189.64h1.8v1.8h-1.8zM1168.35 212.76h1.8v1.8h-1.8zM1184.05 189.64h1.8v1.8h-1.8zM1184.05 212.76h1.8v1.8h-1.8zM1231.06 189.64h1.8v1.8h-1.8zM1231.06 212.76h1.8v1.8h-1.8zM1234.21 189.64h1.8v1.8h-1.8zM1234.21 212.76h1.8v1.8h-1.8zM1240.49 189.64h1.8v1.8h-1.8zM1240.49 212.76h1.8v1.8h-1.8zM1249.88 189.64h1.8v1.8h-1.8zM1249.88 212.76h1.8v1.8h-1.8zM1253.03 189.64h1.8v1.8h-1.8zM1253.03 212.76h1.8v1.8h-1.8zM1256.15 189.64h1.8v1.8h-1.8zM1256.15 212.76h1.8v1.8h-1.8zM1259.30 189.64h1.8v1.8h-1.8zM1259.30 212.76h1.8v1.8h-1.8zM1262.42 189.64h1.8v1.8h-1.8zM1262.42 212.76h1.8v1.8h-1.8zM1265.57 189.64h1.8v1.8h-1.8zM1265.57 212.76h1.8v1.8h-1.8zM1271.84 189.64h1.8v1.8h-1.8zM1271.84 212.76h1.8v1.8h-1.8zM1293.77 189.64h1.8v1.8h-1.8zM1293.77 212.76h1.8v1.8h-1.8zM1331.40 189.64h1.8v1.8h-1.8zM1331.40 212.76h1.8v1.8h-1.8zM1343.94 189.64h1.8v1.8h-1.8zM1343.94 212.76h1.8v1.8h-1.8zM1347.09 189.64h1.8v1.8h-1.8zM1347.09 212.76h1.8v1.8h-1.8zM1350.21 189.64h1.8v1.8h-1.8zM1350.21 212.76h1.8v1.8h-1.8zM1406.65 189.64h1.8v1.8h-1.8zM1406.65 212.76h1.8v1.8h-1.8zM1409.80 189.64h1.8v1.8h-1.8zM1409.80 212.76h1.8v1.8h-1.8zM1412.92 189.64h1.8v1.8h-1.8zM1412.92 212.76h1.8v1.8h-1.8zM1431.74 189.64h1.8v1.8h-1.8zM1431.74 212.76h1.8v1.8h-1.8z" fill="#96ad7e"/><path d="M973.95 184.52h1.8v1.8h-1.8zM973.95 217.88h1.8v1.8h-1.8zM983.38 184.52h1.8v1.8h-1.8zM983.38 217.88h1.8v1.8h-1.8zM989.65 184.52h1.8v1.8h-1.8zM989.65 217.88h1.8v1.8h-1.8zM1231.06 184.52h1.8v1.8h-1.8zM1231.06 217.88h1.8v1.8h-1.8zM1234.21 184.52h1.8v1.8h-1.8zM1234.21 217.88h1.8v1.8h-1.8zM1240.49 184.52h1.8v1.8h-1.8zM1240.49 217.88h1.8v1.8h-1.8zM1249.88 184.52h1.8v1.8h-1.8zM1249.88 217.88h1.8v1.8h-1.8zM1253.03 184.52h1.8v1.8h-1.8zM1253.03 217.88h1.8v1.8h-1.8zM1256.15 184.52h1.8v1.8h-1.8zM1256.15 217.88h1.8v1.8h-1.8zM1259.30 184.52h1.8v1.8h-1.8zM1259.30 217.88h1.8v1.8h-1.8zM1262.42 184.52h1.8v1.8h-1.8zM1262.42 217.88h1.8v1.8h-1.8zM1265.57 184.52h1.8v1.8h-1.8zM1265.57 217.88h1.8v1.8h-1.8zM1271.84 184.52h1.8v1.8h-1.8zM1271.84 217.88h1.8v1.8h-1.8zM1293.77 184.52h1.8v1.8h-1.8zM1293.77 217.88h1.8v1.8h-1.8zM1331.40 184.52h1.8v1.8h-1.8zM1331.40 217.88h1.8v1.8h-1.8zM1343.94 184.52h1.8v1.8h-1.8zM1343.94 217.88h1.8v1.8h-1.8zM1347.09 184.52h1.8v1.8h-1.8zM1347.09 217.88h1.8v1.8h-1.8zM1350.21 184.52h1.8v1.8h-1.8zM1350.21 217.88h1.8v1.8h-1.8zM1406.65 184.52h1.8v1.8h-1.8zM1406.65 217.88h1.8v1.8h-1.8zM1409.80 184.52h1.8v1.8h-1.8zM1409.80 217.88h1.8v1.8h-1.8zM1412.92 184.52h1.8v1.8h-1.8zM1412.92 217.88h1.8v1.8h-1.8zM1431.74 184.52h1.8v1.8h-1.8zM1431.74 217.88h1.8v1.8h-1.8z" fill="#a0b180"/><path d="M973.95 181.52h1.8v1.8h-1.8zM973.95 220.88h1.8v1.8h-1.8zM989.65 181.52h1.8v1.8h-1.8zM989.65 220.88h1.8v1.8h-1.8zM1231.06 181.52h1.8v1.8h-1.8zM1231.06 220.88h1.8v1.8h-1.8zM1249.88 181.52h1.8v1.8h-1.8zM1249.88 220.88h1.8v1.8h-1.8zM1256.15 181.52h1.8v1.8h-1.8zM1256.15 220.88h1.8v1.8h-1.8zM1271.84 181.52h1.8v1.8h-1.8zM1271.84 220.88h1.8v1.8h-1.8zM1343.94 181.52h1.8v1.8h-1.8zM1343.94 220.88h1.8v1.8h-1.8zM1347.09 181.52h1.8v1.8h-1.8zM1347.09 220.88h1.8v1.8h-1.8zM1350.21 181.52h1.8v1.8h-1.8zM1350.21 220.88h1.8v1.8h-1.8zM1409.80 181.52h1.8v1.8h-1.8zM1409.80 220.88h1.8v1.8h-1.8zM1431.74 181.52h1.8v1.8h-1.8zM1431.74 220.88h1.8v1.8h-1.8z" fill="#abb582"/><path d="M973.95 178.52h1.8v1.8h-1.8zM973.95 223.88h1.8v1.8h-1.8zM1231.06 178.52h1.8v1.8h-1.8zM1231.06 223.88h1.8v1.8h-1.8zM1271.84 178.52h1.8v1.8h-1.8zM1271.84 223.88h1.8v1.8h-1.8zM1343.94 178.52h1.8v1.8h-1.8zM1343.94 223.88h1.8v1.8h-1.8zM1347.09 178.52h1.8v1.8h-1.8zM1347.09 223.88h1.8v1.8h-1.8zM1350.21 178.52h1.8v1.8h-1.8zM1350.21 223.88h1.8v1.8h-1.8zM1409.80 178.52h1.8v1.8h-1.8zM1409.80 223.88h1.8v1.8h-1.8z" fill="#b5ba85"/><path d="M1231.06 175.52h1.8v1.8h-1.8zM1231.06 226.88h1.8v1.8h-1.8zM1271.84 175.52h1.8v1.8h-1.8zM1271.84 226.88h1.8v1.8h-1.8zM1343.94 175.52h1.8v1.8h-1.8zM1343.94 226.88h1.8v1.8h-1.8zM1409.80 175.52h1.8v1.8h-1.8zM1409.80 226.88h1.8v1.8h-1.8z" fill="#bfbe88"/><path d="M1231.06 170.40h1.8v1.8h-1.8zM1231.06 232.00h1.8v1.8h-1.8zM1271.84 170.40h1.8v1.8h-1.8zM1271.84 232.00h1.8v1.8h-1.8zM1409.80 170.40h1.8v1.8h-1.8zM1409.80 232.00h1.8v1.8h-1.8z" fill="#c9c28a"/><path d="M1231.06 167.40h1.8v1.8h-1.8zM1231.06 235.00h1.8v1.8h-1.8zM1271.84 167.40h1.8v1.8h-1.8zM1271.84 235.00h1.8v1.8h-1.8zM1409.80 167.40h1.8v1.8h-1.8zM1409.80 235.00h1.8v1.8h-1.8z" fill="#cbb784"/><path d="M1231.06 164.40h1.8v1.8h-1.8zM1231.06 238.00h1.8v1.8h-1.8z" fill="#ceac7e"/><path d="M1519.73 184.72h1.4v1.4h-1.4zM1522.88 184.72h1.4v1.4h-1.4zM1529.15 184.72h1.4v1.4h-1.4zM1532.27 184.72h1.4v1.4h-1.4zM1535.42 184.72h1.4v1.4h-1.4zM1541.69 184.72h1.4v1.4h-1.4zM1544.81 184.72h1.4v1.4h-1.4zM1551.09 184.72h1.4v1.4h-1.4zM1554.24 184.72h1.4v1.4h-1.4zM1557.36 184.72h1.4v1.4h-1.4zM1560.51 184.72h1.4v1.4h-1.4zM1563.63 184.72h1.4v1.4h-1.4zM1519.73 198.84h1.4v1.4h-1.4zM1522.88 198.84h1.4v1.4h-1.4zM1526.00 198.84h1.4v1.4h-1.4zM1532.27 198.84h1.4v1.4h-1.4zM1535.42 198.84h1.4v1.4h-1.4zM1538.54 198.84h1.4v1.4h-1.4zM1541.69 198.84h1.4v1.4h-1.4zM1544.81 198.84h1.4v1.4h-1.4zM1551.09 198.84h1.4v1.4h-1.4zM1554.24 198.84h1.4v1.4h-1.4zM1557.36 198.84h1.4v1.4h-1.4zM1560.51 198.84h1.4v1.4h-1.4zM1563.63 198.84h1.4v1.4h-1.4zM1519.73 212.96h1.4v1.4h-1.4zM1526.00 212.96h1.4v1.4h-1.4zM1529.15 212.96h1.4v1.4h-1.4zM1532.27 212.96h1.4v1.4h-1.4zM1535.42 212.96h1.4v1.4h-1.4zM1538.54 212.96h1.4v1.4h-1.4zM1541.69 212.96h1.4v1.4h-1.4zM1544.81 212.96h1.4v1.4h-1.4zM1547.96 212.96h1.4v1.4h-1.4zM1554.24 212.96h1.4v1.4h-1.4zM1557.36 212.96h1.4v1.4h-1.4zM1560.51 212.96h1.4v1.4h-1.4zM1519.73 227.08h1.4v1.4h-1.4zM1522.88 227.08h1.4v1.4h-1.4zM1526.00 227.08h1.4v1.4h-1.4zM1532.27 227.08h1.4v1.4h-1.4zM1535.42 227.08h1.4v1.4h-1.4zM1538.54 227.08h1.4v1.4h-1.4zM1541.69 227.08h1.4v1.4h-1.4zM1544.81 227.08h1.4v1.4h-1.4zM1547.96 227.08h1.4v1.4h-1.4zM1551.09 227.08h1.4v1.4h-1.4zM1557.36 227.08h1.4v1.4h-1.4zM1560.51 227.08h1.4v1.4h-1.4zM1563.63 227.08h1.4v1.4h-1.4z" fill="#5a6a60"/><path d="M1569.90 184.72h1.4v1.4h-1.4zM1573.05 184.72h1.4v1.4h-1.4zM1576.17 184.72h1.4v1.4h-1.4zM1579.32 184.72h1.4v1.4h-1.4zM1566.78 198.84h1.4v1.4h-1.4zM1569.90 198.84h1.4v1.4h-1.4zM1573.05 198.84h1.4v1.4h-1.4zM1576.17 198.84h1.4v1.4h-1.4zM1569.90 212.96h1.4v1.4h-1.4zM1576.17 212.96h1.4v1.4h-1.4zM1579.32 212.96h1.4v1.4h-1.4zM1566.78 227.08h1.4v1.4h-1.4zM1569.90 227.08h1.4v1.4h-1.4zM1573.05 227.08h1.4v1.4h-1.4zM1576.17 227.08h1.4v1.4h-1.4zM1579.32 227.08h1.4v1.4h-1.4z" fill="#4e8a66"/><path d="M892.43 379.20h1.8v1.8h-1.8zM895.58 379.20h1.8v1.8h-1.8zM898.70 379.20h1.8v1.8h-1.8zM901.85 379.20h1.8v1.8h-1.8zM904.97 379.20h1.8v1.8h-1.8zM908.12 379.20h1.8v1.8h-1.8zM911.24 379.20h1.8v1.8h-1.8zM914.39 379.20h1.8v1.8h-1.8zM917.51 379.20h1.8v1.8h-1.8zM920.66 379.20h1.8v1.8h-1.8zM923.79 379.20h1.8v1.8h-1.8zM926.94 379.20h1.8v1.8h-1.8zM930.06 379.20h1.8v1.8h-1.8zM933.21 379.20h1.8v1.8h-1.8zM936.33 379.20h1.8v1.8h-1.8zM939.48 379.20h1.8v1.8h-1.8zM942.60 379.20h1.8v1.8h-1.8zM945.75 379.20h1.8v1.8h-1.8zM948.87 379.20h1.8v1.8h-1.8zM952.02 379.20h1.8v1.8h-1.8zM955.14 379.20h1.8v1.8h-1.8zM958.29 379.20h1.8v1.8h-1.8zM961.41 379.20h1.8v1.8h-1.8zM964.56 379.20h1.8v1.8h-1.8zM967.68 379.20h1.8v1.8h-1.8zM970.83 379.20h1.8v1.8h-1.8zM973.95 379.20h1.8v1.8h-1.8zM977.10 379.20h1.8v1.8h-1.8zM980.23 379.20h1.8v1.8h-1.8zM983.38 379.20h1.8v1.8h-1.8zM986.50 379.20h1.8v1.8h-1.8zM989.65 379.20h1.8v1.8h-1.8zM992.77 379.20h1.8v1.8h-1.8zM995.92 379.20h1.8v1.8h-1.8zM999.04 379.20h1.8v1.8h-1.8zM1002.19 379.20h1.8v1.8h-1.8zM1005.31 379.20h1.8v1.8h-1.8zM1008.46 379.20h1.8v1.8h-1.8zM1011.58 379.20h1.8v1.8h-1.8zM1014.73 379.20h1.8v1.8h-1.8zM1017.85 379.20h1.8v1.8h-1.8zM1021.00 379.20h1.8v1.8h-1.8zM1024.12 379.20h1.8v1.8h-1.8zM1027.27 379.20h1.8v1.8h-1.8zM1030.39 379.20h1.8v1.8h-1.8zM1033.54 379.20h1.8v1.8h-1.8zM1036.66 379.20h1.8v1.8h-1.8zM1039.81 379.20h1.8v1.8h-1.8zM1042.93 379.20h1.8v1.8h-1.8zM1046.09 379.20h1.8v1.8h-1.8z" fill="#9a4a5a"/><path d="M892.43 382.20h1.8v1.8h-1.8zM895.58 382.20h1.8v1.8h-1.8zM898.70 382.20h1.8v1.8h-1.8zM901.85 382.20h1.8v1.8h-1.8zM904.97 382.20h1.8v1.8h-1.8zM908.12 382.20h1.8v1.8h-1.8zM911.24 382.20h1.8v1.8h-1.8zM914.39 382.20h1.8v1.8h-1.8zM917.51 382.20h1.8v1.8h-1.8zM920.66 382.20h1.8v1.8h-1.8zM923.79 382.20h1.8v1.8h-1.8zM926.94 382.20h1.8v1.8h-1.8zM930.06 382.20h1.8v1.8h-1.8zM933.21 382.20h1.8v1.8h-1.8zM936.33 382.20h1.8v1.8h-1.8zM939.48 382.20h1.8v1.8h-1.8zM942.60 382.20h1.8v1.8h-1.8zM945.75 382.20h1.8v1.8h-1.8zM948.87 382.20h1.8v1.8h-1.8zM952.02 382.20h1.8v1.8h-1.8zM955.14 382.20h1.8v1.8h-1.8zM958.29 382.20h1.8v1.8h-1.8zM961.41 382.20h1.8v1.8h-1.8zM964.56 382.20h1.8v1.8h-1.8zM967.68 382.20h1.8v1.8h-1.8zM970.83 382.20h1.8v1.8h-1.8zM973.95 382.20h1.8v1.8h-1.8zM977.10 382.20h1.8v1.8h-1.8zM980.23 382.20h1.8v1.8h-1.8zM983.38 382.20h1.8v1.8h-1.8zM986.50 382.20h1.8v1.8h-1.8zM989.65 382.20h1.8v1.8h-1.8zM992.77 382.20h1.8v1.8h-1.8zM995.92 382.20h1.8v1.8h-1.8zM999.04 382.20h1.8v1.8h-1.8zM1002.19 382.20h1.8v1.8h-1.8zM1005.31 382.20h1.8v1.8h-1.8zM1008.46 382.20h1.8v1.8h-1.8zM1011.58 382.20h1.8v1.8h-1.8zM1014.73 382.20h1.8v1.8h-1.8zM1017.85 382.20h1.8v1.8h-1.8zM1021.00 382.20h1.8v1.8h-1.8zM1024.12 382.20h1.8v1.8h-1.8zM1027.27 382.20h1.8v1.8h-1.8zM1030.39 382.20h1.8v1.8h-1.8zM1033.54 382.20h1.8v1.8h-1.8zM1036.66 382.20h1.8v1.8h-1.8zM1039.81 382.20h1.8v1.8h-1.8zM1042.93 382.20h1.8v1.8h-1.8zM1046.09 382.20h1.8v1.8h-1.8z" fill="#a85060"/><path d="M892.43 407.44h1.8v1.8h-1.8zM892.43 410.44h1.8v1.8h-1.8zM895.58 407.44h1.8v1.8h-1.8zM895.58 410.44h1.8v1.8h-1.8z" fill="#a08838"/><path d="M923.79 407.44h1.8v1.8h-1.8zM923.79 410.44h1.8v1.8h-1.8zM926.94 407.44h1.8v1.8h-1.8zM926.94 410.44h1.8v1.8h-1.8zM930.06 407.44h1.8v1.8h-1.8zM930.06 410.44h1.8v1.8h-1.8zM933.21 407.44h1.8v1.8h-1.8zM933.21 410.44h1.8v1.8h-1.8zM936.33 407.44h1.8v1.8h-1.8zM936.33 410.44h1.8v1.8h-1.8zM939.48 407.44h1.8v1.8h-1.8zM939.48 410.44h1.8v1.8h-1.8zM942.60 407.44h1.8v1.8h-1.8zM942.60 410.44h1.8v1.8h-1.8zM945.75 407.44h1.8v1.8h-1.8zM945.75 410.44h1.8v1.8h-1.8zM948.87 407.44h1.8v1.8h-1.8zM948.87 410.44h1.8v1.8h-1.8zM952.02 407.44h1.8v1.8h-1.8zM952.02 410.44h1.8v1.8h-1.8zM955.14 407.44h1.8v1.8h-1.8zM955.14 410.44h1.8v1.8h-1.8zM958.29 407.44h1.8v1.8h-1.8zM958.29 410.44h1.8v1.8h-1.8zM961.41 407.44h1.8v1.8h-1.8zM961.41 410.44h1.8v1.8h-1.8zM964.56 407.44h1.8v1.8h-1.8zM964.56 410.44h1.8v1.8h-1.8zM967.68 407.44h1.8v1.8h-1.8zM967.68 410.44h1.8v1.8h-1.8zM970.83 407.44h1.8v1.8h-1.8zM970.83 410.44h1.8v1.8h-1.8zM973.95 407.44h1.8v1.8h-1.8zM973.95 410.44h1.8v1.8h-1.8zM977.10 407.44h1.8v1.8h-1.8zM977.10 410.44h1.8v1.8h-1.8zM980.23 407.44h1.8v1.8h-1.8zM980.23 410.44h1.8v1.8h-1.8zM983.38 407.44h1.8v1.8h-1.8zM983.38 410.44h1.8v1.8h-1.8zM986.50 407.44h1.8v1.8h-1.8zM986.50 410.44h1.8v1.8h-1.8zM989.65 407.44h1.8v1.8h-1.8zM989.65 410.44h1.8v1.8h-1.8zM992.77 407.44h1.8v1.8h-1.8zM992.77 410.44h1.8v1.8h-1.8zM995.92 407.44h1.8v1.8h-1.8zM995.92 410.44h1.8v1.8h-1.8zM999.04 407.44h1.8v1.8h-1.8zM999.04 410.44h1.8v1.8h-1.8zM1002.19 407.44h1.8v1.8h-1.8zM1002.19 410.44h1.8v1.8h-1.8zM1005.31 407.44h1.8v1.8h-1.8zM1005.31 410.44h1.8v1.8h-1.8zM1008.46 407.44h1.8v1.8h-1.8zM1008.46 410.44h1.8v1.8h-1.8zM1011.58 407.44h1.8v1.8h-1.8zM1011.58 410.44h1.8v1.8h-1.8zM1014.73 407.44h1.8v1.8h-1.8zM1014.73 410.44h1.8v1.8h-1.8zM1017.85 407.44h1.8v1.8h-1.8zM1017.85 410.44h1.8v1.8h-1.8zM1021.00 407.44h1.8v1.8h-1.8zM1021.00 410.44h1.8v1.8h-1.8zM1024.12 407.44h1.8v1.8h-1.8zM1024.12 410.44h1.8v1.8h-1.8zM1027.27 407.44h1.8v1.8h-1.8zM1027.27 410.44h1.8v1.8h-1.8zM1030.39 407.44h1.8v1.8h-1.8zM1030.39 410.44h1.8v1.8h-1.8zM1033.54 407.44h1.8v1.8h-1.8zM1033.54 410.44h1.8v1.8h-1.8zM1036.66 407.44h1.8v1.8h-1.8zM1036.66 410.44h1.8v1.8h-1.8zM1039.81 407.44h1.8v1.8h-1.8zM1039.81 410.44h1.8v1.8h-1.8zM1042.93 407.44h1.8v1.8h-1.8zM1042.93 410.44h1.8v1.8h-1.8zM1046.09 407.44h1.8v1.8h-1.8zM1046.09 410.44h1.8v1.8h-1.8zM1046.09 401.44h1.8v1.8h-1.8zM1042.93 404.44h1.8v1.8h-1.8zM1046.09 404.44h1.8v1.8h-1.8zM1042.93 404.44h1.8v1.8h-1.8z" fill="#b09040"/><path d="M892.43 415.56h1.8v1.8h-1.8zM892.43 418.56h1.8v1.8h-1.8zM892.43 421.56h1.8v1.8h-1.8zM892.43 424.56h1.8v1.8h-1.8zM895.58 415.56h1.8v1.8h-1.8zM895.58 418.56h1.8v1.8h-1.8zM895.58 421.56h1.8v1.8h-1.8zM895.58 424.56h1.8v1.8h-1.8zM898.70 415.56h1.8v1.8h-1.8zM898.70 418.56h1.8v1.8h-1.8zM898.70 421.56h1.8v1.8h-1.8zM898.70 424.56h1.8v1.8h-1.8zM901.85 415.56h1.8v1.8h-1.8zM901.85 418.56h1.8v1.8h-1.8zM901.85 421.56h1.8v1.8h-1.8zM901.85 424.56h1.8v1.8h-1.8zM904.97 415.56h1.8v1.8h-1.8zM904.97 418.56h1.8v1.8h-1.8zM904.97 421.56h1.8v1.8h-1.8zM904.97 424.56h1.8v1.8h-1.8zM908.12 415.56h1.8v1.8h-1.8zM908.12 418.56h1.8v1.8h-1.8zM908.12 421.56h1.8v1.8h-1.8zM908.12 424.56h1.8v1.8h-1.8zM911.24 415.56h1.8v1.8h-1.8zM911.24 418.56h1.8v1.8h-1.8zM911.24 421.56h1.8v1.8h-1.8zM911.24 424.56h1.8v1.8h-1.8zM914.39 415.56h1.8v1.8h-1.8zM914.39 418.56h1.8v1.8h-1.8zM914.39 421.56h1.8v1.8h-1.8zM914.39 424.56h1.8v1.8h-1.8zM917.51 415.56h1.8v1.8h-1.8zM917.51 418.56h1.8v1.8h-1.8zM917.51 421.56h1.8v1.8h-1.8zM917.51 424.56h1.8v1.8h-1.8zM920.66 415.56h1.8v1.8h-1.8zM920.66 418.56h1.8v1.8h-1.8zM920.66 421.56h1.8v1.8h-1.8zM920.66 424.56h1.8v1.8h-1.8zM923.79 415.56h1.8v1.8h-1.8zM923.79 418.56h1.8v1.8h-1.8zM923.79 421.56h1.8v1.8h-1.8zM923.79 424.56h1.8v1.8h-1.8zM926.94 415.56h1.8v1.8h-1.8zM926.94 418.56h1.8v1.8h-1.8zM926.94 421.56h1.8v1.8h-1.8zM926.94 424.56h1.8v1.8h-1.8zM930.06 415.56h1.8v1.8h-1.8zM930.06 418.56h1.8v1.8h-1.8zM930.06 421.56h1.8v1.8h-1.8zM930.06 424.56h1.8v1.8h-1.8zM933.21 415.56h1.8v1.8h-1.8zM933.21 418.56h1.8v1.8h-1.8zM933.21 421.56h1.8v1.8h-1.8zM933.21 424.56h1.8v1.8h-1.8zM936.33 415.56h1.8v1.8h-1.8zM936.33 418.56h1.8v1.8h-1.8zM936.33 421.56h1.8v1.8h-1.8zM936.33 424.56h1.8v1.8h-1.8zM939.48 415.56h1.8v1.8h-1.8zM939.48 418.56h1.8v1.8h-1.8zM939.48 421.56h1.8v1.8h-1.8zM939.48 424.56h1.8v1.8h-1.8zM942.60 415.56h1.8v1.8h-1.8zM942.60 418.56h1.8v1.8h-1.8zM942.60 421.56h1.8v1.8h-1.8zM942.60 424.56h1.8v1.8h-1.8zM945.75 415.56h1.8v1.8h-1.8zM945.75 418.56h1.8v1.8h-1.8zM945.75 421.56h1.8v1.8h-1.8zM945.75 424.56h1.8v1.8h-1.8zM948.87 415.56h1.8v1.8h-1.8zM948.87 418.56h1.8v1.8h-1.8zM948.87 421.56h1.8v1.8h-1.8zM948.87 424.56h1.8v1.8h-1.8zM952.02 415.56h1.8v1.8h-1.8zM952.02 418.56h1.8v1.8h-1.8zM952.02 421.56h1.8v1.8h-1.8zM952.02 424.56h1.8v1.8h-1.8zM955.14 415.56h1.8v1.8h-1.8zM955.14 418.56h1.8v1.8h-1.8zM955.14 421.56h1.8v1.8h-1.8zM955.14 424.56h1.8v1.8h-1.8zM958.29 415.56h1.8v1.8h-1.8zM958.29 418.56h1.8v1.8h-1.8zM958.29 421.56h1.8v1.8h-1.8zM958.29 424.56h1.8v1.8h-1.8zM961.41 415.56h1.8v1.8h-1.8zM961.41 418.56h1.8v1.8h-1.8zM961.41 421.56h1.8v1.8h-1.8zM961.41 424.56h1.8v1.8h-1.8zM964.56 415.56h1.8v1.8h-1.8zM964.56 418.56h1.8v1.8h-1.8zM964.56 421.56h1.8v1.8h-1.8zM964.56 424.56h1.8v1.8h-1.8zM967.68 415.56h1.8v1.8h-1.8zM967.68 418.56h1.8v1.8h-1.8zM967.68 421.56h1.8v1.8h-1.8zM967.68 424.56h1.8v1.8h-1.8zM970.83 415.56h1.8v1.8h-1.8zM970.83 418.56h1.8v1.8h-1.8zM970.83 421.56h1.8v1.8h-1.8zM970.83 424.56h1.8v1.8h-1.8zM973.95 415.56h1.8v1.8h-1.8zM973.95 418.56h1.8v1.8h-1.8zM973.95 421.56h1.8v1.8h-1.8zM973.95 424.56h1.8v1.8h-1.8zM977.10 415.56h1.8v1.8h-1.8zM977.10 418.56h1.8v1.8h-1.8zM977.10 421.56h1.8v1.8h-1.8zM977.10 424.56h1.8v1.8h-1.8zM980.23 415.56h1.8v1.8h-1.8zM980.23 418.56h1.8v1.8h-1.8zM980.23 421.56h1.8v1.8h-1.8zM980.23 424.56h1.8v1.8h-1.8zM983.38 415.56h1.8v1.8h-1.8zM983.38 418.56h1.8v1.8h-1.8zM983.38 421.56h1.8v1.8h-1.8zM983.38 424.56h1.8v1.8h-1.8zM986.50 415.56h1.8v1.8h-1.8zM986.50 418.56h1.8v1.8h-1.8zM986.50 421.56h1.8v1.8h-1.8zM986.50 424.56h1.8v1.8h-1.8zM989.65 415.56h1.8v1.8h-1.8zM989.65 418.56h1.8v1.8h-1.8zM989.65 421.56h1.8v1.8h-1.8zM989.65 424.56h1.8v1.8h-1.8zM992.77 415.56h1.8v1.8h-1.8zM992.77 418.56h1.8v1.8h-1.8zM992.77 421.56h1.8v1.8h-1.8zM992.77 424.56h1.8v1.8h-1.8zM995.92 415.56h1.8v1.8h-1.8zM995.92 418.56h1.8v1.8h-1.8zM995.92 421.56h1.8v1.8h-1.8zM995.92 424.56h1.8v1.8h-1.8zM999.04 415.56h1.8v1.8h-1.8zM999.04 418.56h1.8v1.8h-1.8zM999.04 421.56h1.8v1.8h-1.8zM999.04 424.56h1.8v1.8h-1.8zM1002.19 415.56h1.8v1.8h-1.8zM1002.19 418.56h1.8v1.8h-1.8zM1002.19 421.56h1.8v1.8h-1.8zM1002.19 424.56h1.8v1.8h-1.8zM1005.31 415.56h1.8v1.8h-1.8zM1005.31 418.56h1.8v1.8h-1.8zM1005.31 421.56h1.8v1.8h-1.8zM1005.31 424.56h1.8v1.8h-1.8zM1008.46 415.56h1.8v1.8h-1.8zM1008.46 418.56h1.8v1.8h-1.8zM1008.46 421.56h1.8v1.8h-1.8zM1008.46 424.56h1.8v1.8h-1.8zM1011.58 415.56h1.8v1.8h-1.8zM1011.58 418.56h1.8v1.8h-1.8zM1011.58 421.56h1.8v1.8h-1.8zM1011.58 424.56h1.8v1.8h-1.8zM1014.73 415.56h1.8v1.8h-1.8zM1014.73 418.56h1.8v1.8h-1.8zM1014.73 421.56h1.8v1.8h-1.8zM1014.73 424.56h1.8v1.8h-1.8zM1017.85 415.56h1.8v1.8h-1.8zM1017.85 418.56h1.8v1.8h-1.8zM1017.85 421.56h1.8v1.8h-1.8zM1017.85 424.56h1.8v1.8h-1.8zM1021.00 415.56h1.8v1.8h-1.8zM1021.00 418.56h1.8v1.8h-1.8zM1021.00 421.56h1.8v1.8h-1.8zM1021.00 424.56h1.8v1.8h-1.8zM1024.12 415.56h1.8v1.8h-1.8zM1024.12 418.56h1.8v1.8h-1.8zM1024.12 421.56h1.8v1.8h-1.8zM1024.12 424.56h1.8v1.8h-1.8zM1027.27 415.56h1.8v1.8h-1.8zM1027.27 418.56h1.8v1.8h-1.8zM1027.27 421.56h1.8v1.8h-1.8zM1027.27 424.56h1.8v1.8h-1.8zM1030.39 415.56h1.8v1.8h-1.8zM1030.39 418.56h1.8v1.8h-1.8zM1030.39 421.56h1.8v1.8h-1.8zM1030.39 424.56h1.8v1.8h-1.8zM1033.54 415.56h1.8v1.8h-1.8zM1033.54 418.56h1.8v1.8h-1.8zM1033.54 421.56h1.8v1.8h-1.8zM1033.54 424.56h1.8v1.8h-1.8zM1036.66 415.56h1.8v1.8h-1.8zM1036.66 418.56h1.8v1.8h-1.8zM1036.66 421.56h1.8v1.8h-1.8zM1036.66 424.56h1.8v1.8h-1.8zM1039.81 415.56h1.8v1.8h-1.8zM1039.81 418.56h1.8v1.8h-1.8zM1039.81 421.56h1.8v1.8h-1.8zM1039.81 424.56h1.8v1.8h-1.8zM1042.93 415.56h1.8v1.8h-1.8zM1042.93 418.56h1.8v1.8h-1.8zM1042.93 421.56h1.8v1.8h-1.8zM1042.93 424.56h1.8v1.8h-1.8zM1046.09 415.56h1.8v1.8h-1.8zM1046.09 418.56h1.8v1.8h-1.8zM1046.09 421.56h1.8v1.8h-1.8zM1046.09 424.56h1.8v1.8h-1.8z" fill="#a88a40"/><path d="M892.43 466.92h1.8v1.8h-1.8zM895.58 466.92h1.8v1.8h-1.8zM898.70 466.92h1.8v1.8h-1.8zM901.85 466.92h1.8v1.8h-1.8zM904.97 466.92h1.8v1.8h-1.8zM908.12 466.92h1.8v1.8h-1.8zM911.24 466.92h1.8v1.8h-1.8zM914.39 466.92h1.8v1.8h-1.8zM917.51 466.92h1.8v1.8h-1.8zM920.66 466.92h1.8v1.8h-1.8zM923.79 466.92h1.8v1.8h-1.8zM926.94 466.92h1.8v1.8h-1.8zM930.06 466.92h1.8v1.8h-1.8zM933.21 466.92h1.8v1.8h-1.8zM936.33 466.92h1.8v1.8h-1.8zM939.48 466.92h1.8v1.8h-1.8zM942.60 466.92h1.8v1.8h-1.8zM945.75 466.92h1.8v1.8h-1.8zM948.87 466.92h1.8v1.8h-1.8zM952.02 466.92h1.8v1.8h-1.8zM955.14 466.92h1.8v1.8h-1.8zM958.29 466.92h1.8v1.8h-1.8zM961.41 466.92h1.8v1.8h-1.8zM964.56 466.92h1.8v1.8h-1.8zM967.68 466.92h1.8v1.8h-1.8zM970.83 466.92h1.8v1.8h-1.8zM973.95 466.92h1.8v1.8h-1.8zM977.10 466.92h1.8v1.8h-1.8zM980.23 466.92h1.8v1.8h-1.8zM983.38 466.92h1.8v1.8h-1.8zM986.50 466.92h1.8v1.8h-1.8zM989.65 466.92h1.8v1.8h-1.8zM992.77 466.92h1.8v1.8h-1.8zM995.92 466.92h1.8v1.8h-1.8zM999.04 466.92h1.8v1.8h-1.8zM1002.19 466.92h1.8v1.8h-1.8zM1005.31 466.92h1.8v1.8h-1.8zM1008.46 466.92h1.8v1.8h-1.8zM1011.58 466.92h1.8v1.8h-1.8zM1014.73 466.92h1.8v1.8h-1.8zM1017.85 466.92h1.8v1.8h-1.8zM1021.00 466.92h1.8v1.8h-1.8zM1024.12 466.92h1.8v1.8h-1.8zM1027.27 466.92h1.8v1.8h-1.8zM1030.39 466.92h1.8v1.8h-1.8zM1033.54 466.92h1.8v1.8h-1.8zM1036.66 466.92h1.8v1.8h-1.8zM1039.81 466.92h1.8v1.8h-1.8zM1042.93 466.92h1.8v1.8h-1.8zM1046.09 466.92h1.8v1.8h-1.8z" fill="#4a98b0"/><path d="M892.43 492.16h1.8v1.8h-1.8zM892.43 495.16h1.8v1.8h-1.8zM895.58 492.16h1.8v1.8h-1.8zM895.58 495.16h1.8v1.8h-1.8zM923.79 492.16h1.8v1.8h-1.8zM923.79 495.16h1.8v1.8h-1.8zM926.94 492.16h1.8v1.8h-1.8zM926.94 495.16h1.8v1.8h-1.8zM930.06 492.16h1.8v1.8h-1.8zM930.06 495.16h1.8v1.8h-1.8zM933.21 492.16h1.8v1.8h-1.8zM933.21 495.16h1.8v1.8h-1.8zM936.33 492.16h1.8v1.8h-1.8zM936.33 495.16h1.8v1.8h-1.8zM939.48 492.16h1.8v1.8h-1.8zM939.48 495.16h1.8v1.8h-1.8zM942.60 492.16h1.8v1.8h-1.8zM942.60 495.16h1.8v1.8h-1.8zM945.75 492.16h1.8v1.8h-1.8zM945.75 495.16h1.8v1.8h-1.8zM948.87 492.16h1.8v1.8h-1.8zM948.87 495.16h1.8v1.8h-1.8zM952.02 492.16h1.8v1.8h-1.8zM952.02 495.16h1.8v1.8h-1.8zM955.14 492.16h1.8v1.8h-1.8zM955.14 495.16h1.8v1.8h-1.8zM958.29 492.16h1.8v1.8h-1.8zM958.29 495.16h1.8v1.8h-1.8zM961.41 492.16h1.8v1.8h-1.8zM961.41 495.16h1.8v1.8h-1.8zM964.56 492.16h1.8v1.8h-1.8zM964.56 495.16h1.8v1.8h-1.8zM967.68 495.16h1.8v1.8h-1.8zM970.83 495.16h1.8v1.8h-1.8zM973.95 495.16h1.8v1.8h-1.8zM977.10 495.16h1.8v1.8h-1.8zM980.23 495.16h1.8v1.8h-1.8zM983.38 495.16h1.8v1.8h-1.8zM986.50 492.16h1.8v1.8h-1.8zM986.50 495.16h1.8v1.8h-1.8zM989.65 492.16h1.8v1.8h-1.8zM989.65 495.16h1.8v1.8h-1.8zM992.77 492.16h1.8v1.8h-1.8zM992.77 495.16h1.8v1.8h-1.8zM995.92 492.16h1.8v1.8h-1.8zM995.92 495.16h1.8v1.8h-1.8zM999.04 492.16h1.8v1.8h-1.8zM999.04 495.16h1.8v1.8h-1.8zM1002.19 492.16h1.8v1.8h-1.8zM1002.19 495.16h1.8v1.8h-1.8zM1005.31 492.16h1.8v1.8h-1.8zM1005.31 495.16h1.8v1.8h-1.8zM1008.46 492.16h1.8v1.8h-1.8zM1008.46 495.16h1.8v1.8h-1.8zM1011.58 492.16h1.8v1.8h-1.8zM1011.58 495.16h1.8v1.8h-1.8zM1014.73 492.16h1.8v1.8h-1.8zM1014.73 495.16h1.8v1.8h-1.8zM1017.85 492.16h1.8v1.8h-1.8zM1017.85 495.16h1.8v1.8h-1.8zM1021.00 492.16h1.8v1.8h-1.8zM1021.00 495.16h1.8v1.8h-1.8zM1024.12 492.16h1.8v1.8h-1.8zM1024.12 495.16h1.8v1.8h-1.8zM1027.27 492.16h1.8v1.8h-1.8zM1027.27 495.16h1.8v1.8h-1.8zM1030.39 492.16h1.8v1.8h-1.8zM1030.39 495.16h1.8v1.8h-1.8zM1033.54 492.16h1.8v1.8h-1.8zM1033.54 495.16h1.8v1.8h-1.8zM1036.66 492.16h1.8v1.8h-1.8zM1036.66 495.16h1.8v1.8h-1.8zM1039.81 492.16h1.8v1.8h-1.8zM1039.81 495.16h1.8v1.8h-1.8zM1042.93 492.16h1.8v1.8h-1.8zM1042.93 495.16h1.8v1.8h-1.8zM1046.09 492.16h1.8v1.8h-1.8zM1046.09 495.16h1.8v1.8h-1.8z" fill="#8a9a48"/><path d="M892.43 500.28h1.8v1.8h-1.8zM892.43 503.28h1.8v1.8h-1.8zM892.43 506.28h1.8v1.8h-1.8zM892.43 509.28h1.8v1.8h-1.8zM895.58 500.28h1.8v1.8h-1.8zM895.58 503.28h1.8v1.8h-1.8zM895.58 506.28h1.8v1.8h-1.8zM895.58 509.28h1.8v1.8h-1.8zM898.70 500.28h1.8v1.8h-1.8zM898.70 503.28h1.8v1.8h-1.8zM898.70 506.28h1.8v1.8h-1.8zM898.70 509.28h1.8v1.8h-1.8zM901.85 500.28h1.8v1.8h-1.8zM901.85 503.28h1.8v1.8h-1.8zM901.85 506.28h1.8v1.8h-1.8zM901.85 509.28h1.8v1.8h-1.8zM904.97 500.28h1.8v1.8h-1.8zM904.97 503.28h1.8v1.8h-1.8zM904.97 506.28h1.8v1.8h-1.8zM904.97 509.28h1.8v1.8h-1.8zM908.12 500.28h1.8v1.8h-1.8zM908.12 503.28h1.8v1.8h-1.8zM908.12 506.28h1.8v1.8h-1.8zM908.12 509.28h1.8v1.8h-1.8zM911.24 500.28h1.8v1.8h-1.8zM911.24 503.28h1.8v1.8h-1.8zM911.24 506.28h1.8v1.8h-1.8zM911.24 509.28h1.8v1.8h-1.8zM914.39 500.28h1.8v1.8h-1.8zM914.39 503.28h1.8v1.8h-1.8zM914.39 506.28h1.8v1.8h-1.8zM914.39 509.28h1.8v1.8h-1.8zM917.51 500.28h1.8v1.8h-1.8zM917.51 503.28h1.8v1.8h-1.8zM917.51 506.28h1.8v1.8h-1.8zM917.51 509.28h1.8v1.8h-1.8zM920.66 500.28h1.8v1.8h-1.8zM920.66 503.28h1.8v1.8h-1.8zM920.66 506.28h1.8v1.8h-1.8zM920.66 509.28h1.8v1.8h-1.8zM923.79 500.28h1.8v1.8h-1.8zM923.79 503.28h1.8v1.8h-1.8zM923.79 506.28h1.8v1.8h-1.8zM923.79 509.28h1.8v1.8h-1.8zM926.94 500.28h1.8v1.8h-1.8zM926.94 503.28h1.8v1.8h-1.8zM926.94 506.28h1.8v1.8h-1.8zM926.94 509.28h1.8v1.8h-1.8zM930.06 500.28h1.8v1.8h-1.8zM930.06 503.28h1.8v1.8h-1.8zM930.06 506.28h1.8v1.8h-1.8zM930.06 509.28h1.8v1.8h-1.8zM933.21 500.28h1.8v1.8h-1.8zM933.21 503.28h1.8v1.8h-1.8zM933.21 506.28h1.8v1.8h-1.8zM933.21 509.28h1.8v1.8h-1.8zM936.33 500.28h1.8v1.8h-1.8zM936.33 503.28h1.8v1.8h-1.8zM936.33 506.28h1.8v1.8h-1.8zM936.33 509.28h1.8v1.8h-1.8zM939.48 500.28h1.8v1.8h-1.8zM939.48 503.28h1.8v1.8h-1.8zM939.48 506.28h1.8v1.8h-1.8zM939.48 509.28h1.8v1.8h-1.8zM942.60 500.28h1.8v1.8h-1.8zM942.60 503.28h1.8v1.8h-1.8zM942.60 506.28h1.8v1.8h-1.8zM942.60 509.28h1.8v1.8h-1.8zM945.75 500.28h1.8v1.8h-1.8zM945.75 503.28h1.8v1.8h-1.8zM945.75 506.28h1.8v1.8h-1.8zM945.75 509.28h1.8v1.8h-1.8zM948.87 500.28h1.8v1.8h-1.8zM948.87 503.28h1.8v1.8h-1.8zM948.87 506.28h1.8v1.8h-1.8zM948.87 509.28h1.8v1.8h-1.8zM952.02 500.28h1.8v1.8h-1.8zM952.02 503.28h1.8v1.8h-1.8zM952.02 506.28h1.8v1.8h-1.8zM952.02 509.28h1.8v1.8h-1.8zM955.14 500.28h1.8v1.8h-1.8zM955.14 503.28h1.8v1.8h-1.8zM955.14 506.28h1.8v1.8h-1.8zM955.14 509.28h1.8v1.8h-1.8zM958.29 500.28h1.8v1.8h-1.8zM958.29 503.28h1.8v1.8h-1.8zM958.29 506.28h1.8v1.8h-1.8zM958.29 509.28h1.8v1.8h-1.8zM961.41 500.28h1.8v1.8h-1.8zM961.41 503.28h1.8v1.8h-1.8zM961.41 506.28h1.8v1.8h-1.8zM961.41 509.28h1.8v1.8h-1.8zM964.56 500.28h1.8v1.8h-1.8zM964.56 503.28h1.8v1.8h-1.8zM964.56 506.28h1.8v1.8h-1.8zM964.56 509.28h1.8v1.8h-1.8zM967.68 500.28h1.8v1.8h-1.8zM967.68 503.28h1.8v1.8h-1.8zM967.68 506.28h1.8v1.8h-1.8zM967.68 509.28h1.8v1.8h-1.8zM970.83 500.28h1.8v1.8h-1.8zM970.83 503.28h1.8v1.8h-1.8zM970.83 506.28h1.8v1.8h-1.8zM970.83 509.28h1.8v1.8h-1.8zM973.95 500.28h1.8v1.8h-1.8zM973.95 503.28h1.8v1.8h-1.8zM973.95 506.28h1.8v1.8h-1.8zM973.95 509.28h1.8v1.8h-1.8zM977.10 500.28h1.8v1.8h-1.8zM977.10 503.28h1.8v1.8h-1.8zM977.10 506.28h1.8v1.8h-1.8zM977.10 509.28h1.8v1.8h-1.8zM980.23 500.28h1.8v1.8h-1.8zM980.23 503.28h1.8v1.8h-1.8zM980.23 506.28h1.8v1.8h-1.8zM980.23 509.28h1.8v1.8h-1.8zM983.38 500.28h1.8v1.8h-1.8zM983.38 503.28h1.8v1.8h-1.8zM983.38 506.28h1.8v1.8h-1.8zM983.38 509.28h1.8v1.8h-1.8zM986.50 500.28h1.8v1.8h-1.8zM986.50 503.28h1.8v1.8h-1.8zM986.50 506.28h1.8v1.8h-1.8zM986.50 509.28h1.8v1.8h-1.8zM989.65 500.28h1.8v1.8h-1.8zM989.65 503.28h1.8v1.8h-1.8zM989.65 506.28h1.8v1.8h-1.8zM989.65 509.28h1.8v1.8h-1.8zM992.77 500.28h1.8v1.8h-1.8zM992.77 503.28h1.8v1.8h-1.8zM992.77 506.28h1.8v1.8h-1.8zM992.77 509.28h1.8v1.8h-1.8zM995.92 500.28h1.8v1.8h-1.8zM995.92 503.28h1.8v1.8h-1.8zM995.92 506.28h1.8v1.8h-1.8zM995.92 509.28h1.8v1.8h-1.8zM999.04 500.28h1.8v1.8h-1.8zM999.04 503.28h1.8v1.8h-1.8zM999.04 506.28h1.8v1.8h-1.8zM999.04 509.28h1.8v1.8h-1.8zM1002.19 500.28h1.8v1.8h-1.8zM1002.19 503.28h1.8v1.8h-1.8zM1002.19 506.28h1.8v1.8h-1.8zM1002.19 509.28h1.8v1.8h-1.8zM1005.31 500.28h1.8v1.8h-1.8zM1005.31 503.28h1.8v1.8h-1.8zM1005.31 506.28h1.8v1.8h-1.8zM1005.31 509.28h1.8v1.8h-1.8zM1008.46 500.28h1.8v1.8h-1.8zM1008.46 503.28h1.8v1.8h-1.8zM1008.46 506.28h1.8v1.8h-1.8zM1008.46 509.28h1.8v1.8h-1.8zM1011.58 500.28h1.8v1.8h-1.8zM1011.58 503.28h1.8v1.8h-1.8zM1011.58 506.28h1.8v1.8h-1.8zM1011.58 509.28h1.8v1.8h-1.8zM1014.73 500.28h1.8v1.8h-1.8zM1014.73 503.28h1.8v1.8h-1.8zM1014.73 506.28h1.8v1.8h-1.8zM1014.73 509.28h1.8v1.8h-1.8zM1017.85 500.28h1.8v1.8h-1.8zM1017.85 503.28h1.8v1.8h-1.8zM1017.85 506.28h1.8v1.8h-1.8zM1017.85 509.28h1.8v1.8h-1.8zM1021.00 500.28h1.8v1.8h-1.8zM1021.00 503.28h1.8v1.8h-1.8zM1021.00 506.28h1.8v1.8h-1.8zM1021.00 509.28h1.8v1.8h-1.8zM1024.12 500.28h1.8v1.8h-1.8zM1024.12 503.28h1.8v1.8h-1.8zM1024.12 506.28h1.8v1.8h-1.8zM1024.12 509.28h1.8v1.8h-1.8zM1027.27 500.28h1.8v1.8h-1.8zM1027.27 503.28h1.8v1.8h-1.8zM1027.27 506.28h1.8v1.8h-1.8zM1027.27 509.28h1.8v1.8h-1.8zM1030.39 500.28h1.8v1.8h-1.8zM1030.39 503.28h1.8v1.8h-1.8zM1030.39 506.28h1.8v1.8h-1.8zM1030.39 509.28h1.8v1.8h-1.8zM1033.54 500.28h1.8v1.8h-1.8zM1033.54 503.28h1.8v1.8h-1.8zM1033.54 506.28h1.8v1.8h-1.8zM1033.54 509.28h1.8v1.8h-1.8zM1036.66 500.28h1.8v1.8h-1.8zM1036.66 503.28h1.8v1.8h-1.8zM1036.66 506.28h1.8v1.8h-1.8zM1036.66 509.28h1.8v1.8h-1.8zM1039.81 500.28h1.8v1.8h-1.8zM1039.81 503.28h1.8v1.8h-1.8zM1039.81 506.28h1.8v1.8h-1.8zM1039.81 509.28h1.8v1.8h-1.8zM1042.93 500.28h1.8v1.8h-1.8zM1042.93 503.28h1.8v1.8h-1.8zM1042.93 506.28h1.8v1.8h-1.8zM1042.93 509.28h1.8v1.8h-1.8zM1046.09 500.28h1.8v1.8h-1.8zM1046.09 503.28h1.8v1.8h-1.8zM1046.09 506.28h1.8v1.8h-1.8zM1046.09 509.28h1.8v1.8h-1.8z" fill="#7f9242"/><path d="M1087.03 354.16h1.4v1.4h-1.4zM1090.18 354.16h1.4v1.4h-1.4zM1093.30 354.16h1.4v1.4h-1.4zM1096.45 354.16h1.4v1.4h-1.4zM1099.57 354.16h1.4v1.4h-1.4zM1102.72 354.16h1.4v1.4h-1.4zM1105.84 354.16h1.4v1.4h-1.4zM1108.99 354.16h1.4v1.4h-1.4zM1112.12 354.16h1.4v1.4h-1.4zM1115.27 354.16h1.4v1.4h-1.4zM1118.39 354.16h1.4v1.4h-1.4zM1121.54 354.16h1.4v1.4h-1.4zM1137.20 354.16h1.4v1.4h-1.4zM1140.35 354.16h1.4v1.4h-1.4zM1143.47 354.16h1.4v1.4h-1.4zM1146.62 354.16h1.4v1.4h-1.4zM1149.74 354.16h1.4v1.4h-1.4zM1152.89 354.16h1.4v1.4h-1.4zM1156.01 354.16h1.4v1.4h-1.4zM1159.16 354.16h1.4v1.4h-1.4zM1162.28 354.16h1.4v1.4h-1.4zM1165.43 354.16h1.4v1.4h-1.4zM1168.55 354.16h1.4v1.4h-1.4zM1171.70 354.16h1.4v1.4h-1.4zM1174.83 354.16h1.4v1.4h-1.4zM1177.98 354.16h1.4v1.4h-1.4zM1181.10 354.16h1.4v1.4h-1.4zM1184.25 354.16h1.4v1.4h-1.4zM1187.37 354.16h1.4v1.4h-1.4zM1190.52 354.16h1.4v1.4h-1.4zM1193.64 354.16h1.4v1.4h-1.4zM1196.79 354.16h1.4v1.4h-1.4zM1199.91 354.16h1.4v1.4h-1.4zM1203.06 354.16h1.4v1.4h-1.4z" fill="#4a4a4a"/><path d="M1124.66 354.16h1.4v1.4h-1.4zM1127.81 354.16h1.4v1.4h-1.4zM1130.93 354.16h1.4v1.4h-1.4zM1134.08 354.16h1.4v1.4h-1.4z" fill="#7a4a4a"/><path d="M892.43 650.48h1.8v1.8h-1.8zM895.58 650.48h1.8v1.8h-1.8zM898.70 650.48h1.8v1.8h-1.8zM901.85 650.48h1.8v1.8h-1.8zM904.97 650.48h1.8v1.8h-1.8zM908.12 650.48h1.8v1.8h-1.8zM911.24 650.48h1.8v1.8h-1.8zM914.39 650.48h1.8v1.8h-1.8zM917.51 650.48h1.8v1.8h-1.8zM920.66 650.48h1.8v1.8h-1.8zM923.79 650.48h1.8v1.8h-1.8zM926.94 650.48h1.8v1.8h-1.8zM930.06 650.48h1.8v1.8h-1.8zM933.21 650.48h1.8v1.8h-1.8zM936.33 650.48h1.8v1.8h-1.8zM939.48 650.48h1.8v1.8h-1.8zM942.60 650.48h1.8v1.8h-1.8zM945.75 650.48h1.8v1.8h-1.8zM948.87 650.48h1.8v1.8h-1.8zM952.02 650.48h1.8v1.8h-1.8zM955.14 650.48h1.8v1.8h-1.8zM958.29 650.48h1.8v1.8h-1.8zM961.41 650.48h1.8v1.8h-1.8zM964.56 650.48h1.8v1.8h-1.8zM967.68 650.48h1.8v1.8h-1.8zM970.83 650.48h1.8v1.8h-1.8zM973.95 650.48h1.8v1.8h-1.8zM977.10 650.48h1.8v1.8h-1.8zM980.23 650.48h1.8v1.8h-1.8zM983.38 650.48h1.8v1.8h-1.8zM986.50 650.48h1.8v1.8h-1.8zM989.65 650.48h1.8v1.8h-1.8zM992.77 650.48h1.8v1.8h-1.8zM995.92 650.48h1.8v1.8h-1.8zM999.04 650.48h1.8v1.8h-1.8zM1002.19 650.48h1.8v1.8h-1.8zM1005.31 650.48h1.8v1.8h-1.8zM1008.46 650.48h1.8v1.8h-1.8zM1011.58 650.48h1.8v1.8h-1.8zM1014.73 650.48h1.8v1.8h-1.8zM1017.85 650.48h1.8v1.8h-1.8zM1021.00 650.48h1.8v1.8h-1.8zM1024.12 650.48h1.8v1.8h-1.8zM1027.27 650.48h1.8v1.8h-1.8zM1030.39 650.48h1.8v1.8h-1.8zM1033.54 650.48h1.8v1.8h-1.8zM1036.66 650.48h1.8v1.8h-1.8zM1039.81 650.48h1.8v1.8h-1.8z" fill="#3f3590"/><path d="M892.43 655.60h1.8v1.8h-1.8zM895.58 655.60h1.8v1.8h-1.8zM898.70 655.60h1.8v1.8h-1.8zM901.85 655.60h1.8v1.8h-1.8zM904.97 655.60h1.8v1.8h-1.8zM908.12 655.60h1.8v1.8h-1.8zM911.24 655.60h1.8v1.8h-1.8zM914.39 655.60h1.8v1.8h-1.8zM917.51 655.60h1.8v1.8h-1.8zM920.66 655.60h1.8v1.8h-1.8zM923.79 655.60h1.8v1.8h-1.8zM926.94 655.60h1.8v1.8h-1.8zM930.06 655.60h1.8v1.8h-1.8zM933.21 655.60h1.8v1.8h-1.8zM936.33 655.60h1.8v1.8h-1.8zM939.48 655.60h1.8v1.8h-1.8zM942.60 655.60h1.8v1.8h-1.8zM945.75 655.60h1.8v1.8h-1.8zM948.87 655.60h1.8v1.8h-1.8zM952.02 655.60h1.8v1.8h-1.8zM955.14 655.60h1.8v1.8h-1.8zM958.29 655.60h1.8v1.8h-1.8zM961.41 655.60h1.8v1.8h-1.8zM964.56 655.60h1.8v1.8h-1.8zM967.68 655.60h1.8v1.8h-1.8zM970.83 655.60h1.8v1.8h-1.8zM973.95 655.60h1.8v1.8h-1.8zM977.10 655.60h1.8v1.8h-1.8zM980.23 655.60h1.8v1.8h-1.8zM983.38 655.60h1.8v1.8h-1.8zM986.50 655.60h1.8v1.8h-1.8zM989.65 655.60h1.8v1.8h-1.8zM992.77 655.60h1.8v1.8h-1.8zM995.92 655.60h1.8v1.8h-1.8zM999.04 655.60h1.8v1.8h-1.8zM1002.19 655.60h1.8v1.8h-1.8zM1005.31 655.60h1.8v1.8h-1.8zM1008.46 655.60h1.8v1.8h-1.8zM1011.58 655.60h1.8v1.8h-1.8zM1014.73 655.60h1.8v1.8h-1.8zM1017.85 655.60h1.8v1.8h-1.8zM1021.00 655.60h1.8v1.8h-1.8zM1024.12 655.60h1.8v1.8h-1.8zM1027.27 655.60h1.8v1.8h-1.8zM1030.39 655.60h1.8v1.8h-1.8zM1033.54 655.60h1.8v1.8h-1.8zM1036.66 655.60h1.8v1.8h-1.8zM1039.81 655.60h1.8v1.8h-1.8z" fill="#6a2a70"/><path d="M898.70 647.48h1.8v1.8h-1.8zM904.97 647.48h1.8v1.8h-1.8zM908.12 647.48h1.8v1.8h-1.8zM936.33 647.48h1.8v1.8h-1.8zM955.14 647.48h1.8v1.8h-1.8zM961.41 647.48h1.8v1.8h-1.8zM964.56 647.48h1.8v1.8h-1.8zM967.68 647.48h1.8v1.8h-1.8zM973.95 647.48h1.8v1.8h-1.8zM983.38 647.48h1.8v1.8h-1.8zM1011.58 647.48h1.8v1.8h-1.8zM1014.73 647.48h1.8v1.8h-1.8zM1024.12 647.48h1.8v1.8h-1.8zM1030.39 647.48h1.8v1.8h-1.8z" fill="#423893"/><path d="M898.70 644.48h1.8v1.8h-1.8zM904.97 644.48h1.8v1.8h-1.8zM936.33 644.48h1.8v1.8h-1.8zM961.41 644.48h1.8v1.8h-1.8zM964.56 644.48h1.8v1.8h-1.8zM967.68 644.48h1.8v1.8h-1.8zM973.95 644.48h1.8v1.8h-1.8zM1014.73 644.48h1.8v1.8h-1.8zM1024.12 644.48h1.8v1.8h-1.8zM1030.39 644.48h1.8v1.8h-1.8z" fill="#453b96"/><path d="M898.70 641.48h1.8v1.8h-1.8zM904.97 641.48h1.8v1.8h-1.8zM936.33 641.48h1.8v1.8h-1.8zM961.41 641.48h1.8v1.8h-1.8zM964.56 641.48h1.8v1.8h-1.8zM973.95 641.48h1.8v1.8h-1.8z" fill="#483e9a"/><path d="M898.70 636.36h1.8v1.8h-1.8zM904.97 636.36h1.8v1.8h-1.8zM936.33 636.36h1.8v1.8h-1.8zM961.41 636.36h1.8v1.8h-1.8zM964.56 636.36h1.8v1.8h-1.8z" fill="#4b419d"/><path d="M898.70 633.36h1.8v1.8h-1.8zM904.97 633.36h1.8v1.8h-1.8zM936.33 633.36h1.8v1.8h-1.8zM961.41 633.36h1.8v1.8h-1.8zM964.56 633.36h1.8v1.8h-1.8z" fill="#4e44a0"/><path d="M898.70 630.36h1.8v1.8h-1.8zM904.97 630.36h1.8v1.8h-1.8zM936.33 630.36h1.8v1.8h-1.8zM961.41 630.36h1.8v1.8h-1.8zM964.56 630.36h1.8v1.8h-1.8z" fill="#5248a3"/><path d="M898.70 627.36h1.8v1.8h-1.8zM904.97 627.36h1.8v1.8h-1.8zM936.33 627.36h1.8v1.8h-1.8zM961.41 627.36h1.8v1.8h-1.8zM964.56 627.36h1.8v1.8h-1.8z" fill="#554ba6"/><path d="M898.70 622.24h1.8v1.8h-1.8zM904.97 622.24h1.8v1.8h-1.8zM961.41 622.24h1.8v1.8h-1.8zM964.56 622.24h1.8v1.8h-1.8z" fill="#584eaa"/><path d="M898.70 619.24h1.8v1.8h-1.8zM904.97 619.24h1.8v1.8h-1.8zM964.56 619.24h1.8v1.8h-1.8z" fill="#5b51ad"/><path d="M898.70 616.24h1.8v1.8h-1.8zM904.97 616.24h1.8v1.8h-1.8zM964.56 616.24h1.8v1.8h-1.8z" fill="#5e54b0"/><path d="M898.70 613.24h1.8v1.8h-1.8zM904.97 613.24h1.8v1.8h-1.8zM964.56 613.24h1.8v1.8h-1.8z" fill="#675db5"/><path d="M898.70 608.12h1.8v1.8h-1.8zM904.97 608.12h1.8v1.8h-1.8zM964.56 608.12h1.8v1.8h-1.8z" fill="#7067ba"/><path d="M898.70 605.12h1.8v1.8h-1.8zM904.97 605.12h1.8v1.8h-1.8zM964.56 605.12h1.8v1.8h-1.8z" fill="#7970bf"/><path d="M898.70 602.12h1.8v1.8h-1.8zM904.97 602.12h1.8v1.8h-1.8zM964.56 602.12h1.8v1.8h-1.8z" fill="#827ac4"/><path d="M898.70 599.12h1.8v1.8h-1.8zM904.97 599.12h1.8v1.8h-1.8zM964.56 599.12h1.8v1.8h-1.8z" fill="#8b83c9"/><path d="M898.70 594.00h1.8v1.8h-1.8zM904.97 594.00h1.8v1.8h-1.8zM964.56 594.00h1.8v1.8h-1.8z" fill="#948cce"/><path d="M898.70 591.00h1.8v1.8h-1.8zM904.97 591.00h1.8v1.8h-1.8zM964.56 591.00h1.8v1.8h-1.8z" fill="#9d96d3"/><path d="M898.70 588.00h1.8v1.8h-1.8zM904.97 588.00h1.8v1.8h-1.8zM964.56 588.00h1.8v1.8h-1.8z" fill="#a69fd8"/><path d="M898.70 585.00h1.8v1.8h-1.8zM904.97 585.00h1.8v1.8h-1.8zM964.56 585.00h1.8v1.8h-1.8z" fill="#afa9dd"/><path d="M898.70 658.60h1.8v1.8h-1.8zM904.97 658.60h1.8v1.8h-1.8zM914.39 658.60h1.8v1.8h-1.8zM936.33 658.60h1.8v1.8h-1.8zM961.41 658.60h1.8v1.8h-1.8zM964.56 658.60h1.8v1.8h-1.8zM973.95 658.60h1.8v1.8h-1.8zM983.38 658.60h1.8v1.8h-1.8zM986.50 658.60h1.8v1.8h-1.8zM1014.73 658.60h1.8v1.8h-1.8zM1024.12 658.60h1.8v1.8h-1.8zM1030.39 658.60h1.8v1.8h-1.8z" fill="#6c2c72"/><path d="M898.70 661.60h1.8v1.8h-1.8zM904.97 661.60h1.8v1.8h-1.8zM914.39 661.60h1.8v1.8h-1.8zM936.33 661.60h1.8v1.8h-1.8zM961.41 661.60h1.8v1.8h-1.8zM964.56 661.60h1.8v1.8h-1.8zM973.95 661.60h1.8v1.8h-1.8zM983.38 661.60h1.8v1.8h-1.8zM986.50 661.60h1.8v1.8h-1.8zM1014.73 661.60h1.8v1.8h-1.8zM1024.12 661.60h1.8v1.8h-1.8zM1030.39 661.60h1.8v1.8h-1.8z" fill="#6f2f75"/><path d="M898.70 664.60h1.8v1.8h-1.8zM904.97 664.60h1.8v1.8h-1.8zM914.39 664.60h1.8v1.8h-1.8zM936.33 664.60h1.8v1.8h-1.8zM961.41 664.60h1.8v1.8h-1.8zM964.56 664.60h1.8v1.8h-1.8zM1014.73 664.60h1.8v1.8h-1.8zM1030.39 664.60h1.8v1.8h-1.8z" fill="#713177"/><path d="M898.70 669.72h1.8v1.8h-1.8zM904.97 669.72h1.8v1.8h-1.8zM914.39 669.72h1.8v1.8h-1.8zM936.33 669.72h1.8v1.8h-1.8zM961.41 669.72h1.8v1.8h-1.8zM964.56 669.72h1.8v1.8h-1.8zM1014.73 669.72h1.8v1.8h-1.8zM1030.39 669.72h1.8v1.8h-1.8z" fill="#743479"/><path d="M898.70 672.72h1.8v1.8h-1.8zM904.97 672.72h1.8v1.8h-1.8zM914.39 672.72h1.8v1.8h-1.8zM936.33 672.72h1.8v1.8h-1.8zM961.41 672.72h1.8v1.8h-1.8zM964.56 672.72h1.8v1.8h-1.8zM1014.73 672.72h1.8v1.8h-1.8zM1030.39 672.72h1.8v1.8h-1.8z" fill="#76367c"/><path d="M898.70 675.72h1.8v1.8h-1.8zM904.97 675.72h1.8v1.8h-1.8zM914.39 675.72h1.8v1.8h-1.8zM936.33 675.72h1.8v1.8h-1.8zM961.41 675.72h1.8v1.8h-1.8zM964.56 675.72h1.8v1.8h-1.8zM1030.39 675.72h1.8v1.8h-1.8z" fill="#79397e"/><path d="M898.70 678.72h1.8v1.8h-1.8zM904.97 678.72h1.8v1.8h-1.8zM914.39 678.72h1.8v1.8h-1.8zM936.33 678.72h1.8v1.8h-1.8zM961.41 678.72h1.8v1.8h-1.8zM964.56 678.72h1.8v1.8h-1.8zM1030.39 678.72h1.8v1.8h-1.8z" fill="#7b3b80"/><path d="M898.70 683.84h1.8v1.8h-1.8zM904.97 683.84h1.8v1.8h-1.8zM936.33 683.84h1.8v1.8h-1.8zM961.41 683.84h1.8v1.8h-1.8zM964.56 683.84h1.8v1.8h-1.8zM1030.39 683.84h1.8v1.8h-1.8z" fill="#7e3e82"/><path d="M898.70 686.84h1.8v1.8h-1.8zM904.97 686.84h1.8v1.8h-1.8zM936.33 686.84h1.8v1.8h-1.8zM961.41 686.84h1.8v1.8h-1.8zM964.56 686.84h1.8v1.8h-1.8zM1030.39 686.84h1.8v1.8h-1.8z" fill="#804085"/><path d="M898.70 689.84h1.8v1.8h-1.8zM904.97 689.84h1.8v1.8h-1.8zM936.33 689.84h1.8v1.8h-1.8zM964.56 689.84h1.8v1.8h-1.8zM1030.39 689.84h1.8v1.8h-1.8z" fill="#834387"/><path d="M898.70 692.84h1.8v1.8h-1.8zM904.97 692.84h1.8v1.8h-1.8zM936.33 692.84h1.8v1.8h-1.8zM964.56 692.84h1.8v1.8h-1.8zM1030.39 692.84h1.8v1.8h-1.8z" fill="#854589"/><path d="M898.70 697.96h1.8v1.8h-1.8zM904.97 697.96h1.8v1.8h-1.8zM936.33 697.96h1.8v1.8h-1.8zM964.56 697.96h1.8v1.8h-1.8zM1030.39 697.96h1.8v1.8h-1.8z" fill="#88488c"/><path d="M898.70 700.96h1.8v1.8h-1.8zM904.97 700.96h1.8v1.8h-1.8zM936.33 700.96h1.8v1.8h-1.8zM964.56 700.96h1.8v1.8h-1.8zM1030.39 700.96h1.8v1.8h-1.8z" fill="#8a4a8e"/><path d="M898.70 703.96h1.8v1.8h-1.8zM904.97 703.96h1.8v1.8h-1.8zM936.33 703.96h1.8v1.8h-1.8zM964.56 703.96h1.8v1.8h-1.8zM1030.39 703.96h1.8v1.8h-1.8z" fill="#905294"/><path d="M898.70 706.96h1.8v1.8h-1.8zM904.97 706.96h1.8v1.8h-1.8zM964.56 706.96h1.8v1.8h-1.8zM1030.39 706.96h1.8v1.8h-1.8z" fill="#975b9a"/><path d="M898.70 712.08h1.8v1.8h-1.8zM904.97 712.08h1.8v1.8h-1.8zM964.56 712.08h1.8v1.8h-1.8zM1030.39 712.08h1.8v1.8h-1.8z" fill="#9d63a0"/><path d="M898.70 715.08h1.8v1.8h-1.8zM904.97 715.08h1.8v1.8h-1.8zM964.56 715.08h1.8v1.8h-1.8zM1030.39 715.08h1.8v1.8h-1.8z" fill="#a36ca7"/><path d="M898.70 718.08h1.8v1.8h-1.8zM904.97 718.08h1.8v1.8h-1.8zM964.56 718.08h1.8v1.8h-1.8zM1030.39 718.08h1.8v1.8h-1.8z" fill="#aa74ad"/><path d="M898.70 721.08h1.8v1.8h-1.8zM904.97 721.08h1.8v1.8h-1.8zM964.56 721.08h1.8v1.8h-1.8zM1030.39 721.08h1.8v1.8h-1.8z" fill="#b07db3"/><path d="M898.70 726.20h1.8v1.8h-1.8zM904.97 726.20h1.8v1.8h-1.8zM964.56 726.20h1.8v1.8h-1.8zM1030.39 726.20h1.8v1.8h-1.8z" fill="#b685b9"/><path d="M898.70 729.20h1.8v1.8h-1.8zM904.97 729.20h1.8v1.8h-1.8zM964.56 729.20h1.8v1.8h-1.8zM1030.39 729.20h1.8v1.8h-1.8z" fill="#bc8ebf"/><path d="M898.70 732.20h1.8v1.8h-1.8zM904.97 732.20h1.8v1.8h-1.8zM964.56 732.20h1.8v1.8h-1.8zM1030.39 732.20h1.8v1.8h-1.8z" fill="#c396c5"/><path d="M898.70 735.20h1.8v1.8h-1.8zM904.97 735.20h1.8v1.8h-1.8zM964.56 735.20h1.8v1.8h-1.8zM1030.39 735.20h1.8v1.8h-1.8z" fill="#c99fcc"/><path d="M964.56 579.88h1.8v1.8h-1.8zM964.56 576.88h1.8v1.8h-1.8zM964.56 573.88h1.8v1.8h-1.8zM964.56 570.88h1.8v1.8h-1.8z" fill="#b8b2e2"/><path d="M964.56 740.32h1.8v1.8h-1.8zM1030.39 740.32h1.8v1.8h-1.8z" fill="#cfa7d2"/><path d="M964.56 743.32h1.8v1.8h-1.8zM1030.39 743.32h1.8v1.8h-1.8z" fill="#d6b0d8"/><path d="M964.56 746.32h1.8v1.8h-1.8zM1030.39 746.32h1.8v1.8h-1.8z" fill="#dcb8de"/><path d="M1544.86 354.21h1.3v1.3h-1.3zM1548.01 354.21h1.3v1.3h-1.3zM1551.14 354.21h1.3v1.3h-1.3zM1554.29 354.21h1.3v1.3h-1.3zM1557.41 354.21h1.3v1.3h-1.3zM1560.56 354.21h1.3v1.3h-1.3zM1563.68 354.21h1.3v1.3h-1.3zM1569.95 354.21h1.3v1.3h-1.3zM1573.10 354.21h1.3v1.3h-1.3z" fill="#5a5a5a"/><path d="M1548.01 368.33h1.3v1.3h-1.3zM1554.29 368.33h1.3v1.3h-1.3zM1557.41 368.33h1.3v1.3h-1.3zM1560.56 368.33h1.3v1.3h-1.3zM1563.68 368.33h1.3v1.3h-1.3zM1569.95 368.33h1.3v1.3h-1.3zM1573.10 368.33h1.3v1.3h-1.3z" fill="#585858"/><path d="M1544.86 382.45h1.3v1.3h-1.3zM1548.01 382.45h1.3v1.3h-1.3zM1551.14 382.45h1.3v1.3h-1.3zM1554.29 382.45h1.3v1.3h-1.3zM1557.41 382.45h1.3v1.3h-1.3zM1560.56 382.45h1.3v1.3h-1.3zM1566.83 382.45h1.3v1.3h-1.3zM1569.95 382.45h1.3v1.3h-1.3z" fill="#565656"/><path d="M1544.86 396.57h1.3v1.3h-1.3zM1551.14 396.57h1.3v1.3h-1.3zM1557.41 396.57h1.3v1.3h-1.3zM1566.83 396.57h1.3v1.3h-1.3zM1569.95 396.57h1.3v1.3h-1.3zM1573.10 396.57h1.3v1.3h-1.3z" fill="#545454"/><path d="M1548.01 410.69h1.3v1.3h-1.3zM1551.14 410.69h1.3v1.3h-1.3zM1554.29 410.69h1.3v1.3h-1.3zM1557.41 410.69h1.3v1.3h-1.3zM1560.56 410.69h1.3v1.3h-1.3zM1563.68 410.69h1.3v1.3h-1.3zM1566.83 410.69h1.3v1.3h-1.3zM1569.95 410.69h1.3v1.3h-1.3z" fill="#525252"/><path d="M1544.86 424.81h1.3v1.3h-1.3zM1557.41 424.81h1.3v1.3h-1.3zM1560.56 424.81h1.3v1.3h-1.3zM1573.10 424.81h1.3v1.3h-1.3z" fill="#505050"/><path d="M1544.86 438.93h1.3v1.3h-1.3zM1548.01 438.93h1.3v1.3h-1.3zM1554.29 438.93h1.3v1.3h-1.3zM1557.41 438.93h1.3v1.3h-1.3zM1560.56 438.93h1.3v1.3h-1.3zM1569.95 438.93h1.3v1.3h-1.3z" fill="#4e4e4e"/><path d="M1544.86 453.05h1.3v1.3h-1.3zM1548.01 453.05h1.3v1.3h-1.3zM1551.14 453.05h1.3v1.3h-1.3zM1554.29 453.05h1.3v1.3h-1.3zM1560.56 453.05h1.3v1.3h-1.3zM1563.68 453.05h1.3v1.3h-1.3zM1566.83 453.05h1.3v1.3h-1.3zM1569.95 453.05h1.3v1.3h-1.3zM1573.10 453.05h1.3v1.3h-1.3z" fill="#4c4c4c"/><path d="M1551.14 467.17h1.3v1.3h-1.3zM1557.41 467.17h1.3v1.3h-1.3zM1560.56 467.17h1.3v1.3h-1.3zM1563.68 467.17h1.3v1.3h-1.3zM1566.83 467.17h1.3v1.3h-1.3zM1569.95 467.17h1.3v1.3h-1.3zM1573.10 467.17h1.3v1.3h-1.3z" fill="#4a4a4a"/><path d="M1544.86 481.29h1.3v1.3h-1.3zM1548.01 481.29h1.3v1.3h-1.3zM1551.14 481.29h1.3v1.3h-1.3zM1557.41 481.29h1.3v1.3h-1.3zM1566.83 481.29h1.3v1.3h-1.3zM1569.95 481.29h1.3v1.3h-1.3zM1573.10 481.29h1.3v1.3h-1.3z" fill="#484848"/><path d="M1544.86 495.41h1.3v1.3h-1.3zM1548.01 495.41h1.3v1.3h-1.3zM1551.14 495.41h1.3v1.3h-1.3zM1554.29 495.41h1.3v1.3h-1.3zM1560.56 495.41h1.3v1.3h-1.3zM1563.68 495.41h1.3v1.3h-1.3zM1566.83 495.41h1.3v1.3h-1.3zM1569.95 495.41h1.3v1.3h-1.3zM1573.10 495.41h1.3v1.3h-1.3z" fill="#464646"/><path d="M1548.01 509.53h1.3v1.3h-1.3zM1551.14 509.53h1.3v1.3h-1.3zM1554.29 509.53h1.3v1.3h-1.3zM1557.41 509.53h1.3v1.3h-1.3zM1560.56 509.53h1.3v1.3h-1.3zM1563.68 509.53h1.3v1.3h-1.3zM1566.83 509.53h1.3v1.3h-1.3zM1569.95 509.53h1.3v1.3h-1.3zM1573.10 509.53h1.3v1.3h-1.3z" fill="#444444"/><path d="M1544.86 523.65h1.3v1.3h-1.3zM1548.01 523.65h1.3v1.3h-1.3zM1551.14 523.65h1.3v1.3h-1.3zM1554.29 523.65h1.3v1.3h-1.3zM1557.41 523.65h1.3v1.3h-1.3zM1560.56 523.65h1.3v1.3h-1.3zM1563.68 523.65h1.3v1.3h-1.3zM1566.83 523.65h1.3v1.3h-1.3zM1569.95 523.65h1.3v1.3h-1.3z" fill="#424242"/><path d="M1544.86 537.77h1.3v1.3h-1.3zM1548.01 537.77h1.3v1.3h-1.3zM1551.14 537.77h1.3v1.3h-1.3zM1554.29 537.77h1.3v1.3h-1.3zM1557.41 537.77h1.3v1.3h-1.3zM1560.56 537.77h1.3v1.3h-1.3zM1563.68 537.77h1.3v1.3h-1.3zM1566.83 537.77h1.3v1.3h-1.3zM1569.95 537.77h1.3v1.3h-1.3zM1573.10 537.77h1.3v1.3h-1.3z" fill="#404040"/><path d="M1544.86 551.89h1.3v1.3h-1.3zM1548.01 551.89h1.3v1.3h-1.3zM1551.14 551.89h1.3v1.3h-1.3zM1554.29 551.89h1.3v1.3h-1.3zM1557.41 551.89h1.3v1.3h-1.3zM1560.56 551.89h1.3v1.3h-1.3zM1566.83 551.89h1.3v1.3h-1.3zM1569.95 551.89h1.3v1.3h-1.3zM1573.10 551.89h1.3v1.3h-1.3z" fill="#3e3e3e"/><path d="M1544.86 566.01h1.3v1.3h-1.3zM1548.01 566.01h1.3v1.3h-1.3zM1551.14 566.01h1.3v1.3h-1.3zM1554.29 566.01h1.3v1.3h-1.3zM1560.56 566.01h1.3v1.3h-1.3zM1566.83 566.01h1.3v1.3h-1.3zM1569.95 566.01h1.3v1.3h-1.3zM1573.10 566.01h1.3v1.3h-1.3z" fill="#3c3c3c"/><path d="M1548.01 580.13h1.3v1.3h-1.3zM1551.14 580.13h1.3v1.3h-1.3zM1554.29 580.13h1.3v1.3h-1.3zM1557.41 580.13h1.3v1.3h-1.3zM1560.56 580.13h1.3v1.3h-1.3zM1569.95 580.13h1.3v1.3h-1.3zM1573.10 580.13h1.3v1.3h-1.3z" fill="#3a3a3a"/><path d="M1548.01 594.25h1.3v1.3h-1.3zM1554.29 594.25h1.3v1.3h-1.3zM1557.41 594.25h1.3v1.3h-1.3zM1560.56 594.25h1.3v1.3h-1.3zM1563.68 594.25h1.3v1.3h-1.3zM1566.83 594.25h1.3v1.3h-1.3zM1569.95 594.25h1.3v1.3h-1.3zM1573.10 594.25h1.3v1.3h-1.3z" fill="#383838"/><path d="M1544.86 608.37h1.3v1.3h-1.3zM1548.01 608.37h1.3v1.3h-1.3zM1554.29 608.37h1.3v1.3h-1.3zM1557.41 608.37h1.3v1.3h-1.3zM1569.95 608.37h1.3v1.3h-1.3z" fill="#363636"/><path d="M1548.01 622.49h1.3v1.3h-1.3zM1551.14 622.49h1.3v1.3h-1.3zM1557.41 622.49h1.3v1.3h-1.3zM1560.56 622.49h1.3v1.3h-1.3zM1563.68 622.49h1.3v1.3h-1.3zM1566.83 622.49h1.3v1.3h-1.3zM1569.95 622.49h1.3v1.3h-1.3zM1573.10 622.49h1.3v1.3h-1.3z" fill="#343434"/><path d="M1544.86 636.61h1.3v1.3h-1.3zM1548.01 636.61h1.3v1.3h-1.3zM1554.29 636.61h1.3v1.3h-1.3zM1560.56 636.61h1.3v1.3h-1.3zM1573.10 636.61h1.3v1.3h-1.3z" fill="#323232"/><path d="M1544.86 650.73h1.3v1.3h-1.3zM1548.01 650.73h1.3v1.3h-1.3zM1551.14 650.73h1.3v1.3h-1.3zM1554.29 650.73h1.3v1.3h-1.3zM1557.41 650.73h1.3v1.3h-1.3zM1560.56 650.73h1.3v1.3h-1.3zM1563.68 650.73h1.3v1.3h-1.3zM1569.95 650.73h1.3v1.3h-1.3zM1573.10 650.73h1.3v1.3h-1.3z" fill="#303030"/><path d="M1544.86 664.85h1.3v1.3h-1.3zM1551.14 664.85h1.3v1.3h-1.3zM1554.29 664.85h1.3v1.3h-1.3zM1557.41 664.85h1.3v1.3h-1.3zM1560.56 664.85h1.3v1.3h-1.3zM1563.68 664.85h1.3v1.3h-1.3zM1569.95 664.85h1.3v1.3h-1.3zM1573.10 664.85h1.3v1.3h-1.3z" fill="#2e2e2e"/><path d="M1554.29 678.97h1.3v1.3h-1.3zM1557.41 678.97h1.3v1.3h-1.3zM1563.68 678.97h1.3v1.3h-1.3zM1566.83 678.97h1.3v1.3h-1.3zM1569.95 678.97h1.3v1.3h-1.3zM1573.10 678.97h1.3v1.3h-1.3z" fill="#2c2c2c"/><path d="M1544.86 693.09h1.3v1.3h-1.3zM1548.01 693.09h1.3v1.3h-1.3zM1551.14 693.09h1.3v1.3h-1.3zM1554.29 693.09h1.3v1.3h-1.3zM1557.41 693.09h1.3v1.3h-1.3zM1560.56 693.09h1.3v1.3h-1.3zM1563.68 693.09h1.3v1.3h-1.3zM1566.83 693.09h1.3v1.3h-1.3z" fill="#2a2a2a"/><path d="M1544.86 707.21h1.3v1.3h-1.3zM1548.01 707.21h1.3v1.3h-1.3zM1551.14 707.21h1.3v1.3h-1.3zM1554.29 707.21h1.3v1.3h-1.3zM1557.41 707.21h1.3v1.3h-1.3zM1560.56 707.21h1.3v1.3h-1.3zM1563.68 707.21h1.3v1.3h-1.3zM1566.83 707.21h1.3v1.3h-1.3zM1569.95 707.21h1.3v1.3h-1.3zM1573.10 707.21h1.3v1.3h-1.3z" fill="#282828"/><path d="M1544.86 721.33h1.3v1.3h-1.3zM1548.01 721.33h1.3v1.3h-1.3zM1551.14 721.33h1.3v1.3h-1.3zM1554.29 721.33h1.3v1.3h-1.3zM1557.41 721.33h1.3v1.3h-1.3zM1560.56 721.33h1.3v1.3h-1.3zM1563.68 721.33h1.3v1.3h-1.3zM1566.83 721.33h1.3v1.3h-1.3zM1569.95 721.33h1.3v1.3h-1.3zM1573.10 721.33h1.3v1.3h-1.3z" fill="#262626"/><path d="M1548.01 735.45h1.3v1.3h-1.3zM1551.14 735.45h1.3v1.3h-1.3zM1554.29 735.45h1.3v1.3h-1.3zM1557.41 735.45h1.3v1.3h-1.3zM1560.56 735.45h1.3v1.3h-1.3zM1563.68 735.45h1.3v1.3h-1.3zM1566.83 735.45h1.3v1.3h-1.3zM1569.95 735.45h1.3v1.3h-1.3zM1573.10 735.45h1.3v1.3h-1.3z" fill="#242424"/><path d="M1544.86 749.57h1.3v1.3h-1.3zM1548.01 749.57h1.3v1.3h-1.3zM1551.14 749.57h1.3v1.3h-1.3zM1554.29 749.57h1.3v1.3h-1.3zM1557.41 749.57h1.3v1.3h-1.3zM1566.83 749.57h1.3v1.3h-1.3zM1573.10 749.57h1.3v1.3h-1.3z" fill="#222222"/><rect x="1419.79" y="92.80" width="4.20" height="4.60" fill="#eeeeee"/><rect x="1462.94" y="92.40" width="5.37" height="6.00" fill="#dc4c4c"/><rect x="1469.21" y="92.40" width="5.37" height="6.00" fill="#d86653"/><rect x="1475.48" y="92.40" width="5.37" height="6.00" fill="#d4805a"/><rect x="1481.75" y="92.40" width="5.37" height="6.00" fill="#d19961"/><rect x="1488.03" y="92.40" width="5.37" height="6.00" fill="#cdb368"/><rect x="1494.30" y="92.40" width="5.37" height="6.00" fill="#c2c171"/><rect x="1500.57" y="92.40" width="5.37" height="6.00" fill="#afc37c"/><rect x="1506.84" y="92.40" width="5.37" height="6.00" fill="#9cc686"/><rect x="1513.11" y="92.40" width="5.37" height="6.00" fill="#8ac891"/><rect x="1519.38" y="92.40" width="5.37" height="6.00" fill="#77ca9b"/><rect x="1518.93" y="162.80" width="6.32" height="6.40" fill="#555555"/><rect x="1525.20" y="162.80" width="6.32" height="6.40" fill="#555555"/><rect x="1531.47" y="162.80" width="6.32" height="6.40" fill="#555555"/><rect x="1537.74" y="162.80" width="6.32" height="6.40" fill="#555555"/><rect x="1544.01" y="162.80" width="6.32" height="6.40" fill="#555555"/><rect x="1550.29" y="162.80" width="6.32" height="6.40" fill="#555555"/><rect x="1556.56" y="162.80" width="6.32" height="6.40" fill="#555555"/><rect x="1562.83" y="162.80" width="6.32" height="6.40" fill="#555555"/><rect x="1569.10" y="162.80" width="6.32" height="6.40" fill="#555555"/><rect x="1575.37" y="162.80" width="6.32" height="6.40" fill="#555555"/><rect x="1124.21" y="361.08" width="5.57" height="6.00" fill="#c05868"/><rect x="1124.21" y="375.20" width="5.57" height="6.00" fill="#7cb060"/><rect x="1130.48" y="361.08" width="5.57" height="6.00" fill="#454545"/><rect x="1130.48" y="375.20" width="5.57" height="6.00" fill="#a8d880"/><rect x="1136.75" y="361.08" width="5.57" height="6.00" fill="#454545"/><rect x="1136.75" y="375.20" width="5.57" height="6.00" fill="#454545"/><rect x="1143.02" y="361.08" width="5.57" height="6.00" fill="#454545"/><rect x="1143.02" y="375.20" width="5.57" height="6.00" fill="#454545"/><rect x="1124.21" y="417.56" width="5.57" height="6.00" fill="#454545"/><rect x="1124.21" y="431.68" width="5.57" height="6.00" fill="#6a9a50"/><rect x="1130.48" y="417.56" width="5.57" height="6.00" fill="#454545"/><rect x="1130.48" y="431.68" width="5.57" height="6.00" fill="#8ec070"/><rect x="1136.75" y="417.56" width="5.57" height="6.00" fill="#454545"/><rect x="1136.75" y="431.68" width="5.57" height="6.00" fill="#a8d880"/><rect x="1143.02" y="417.56" width="5.57" height="6.00" fill="#454545"/><rect x="1143.02" y="431.68" width="5.57" height="6.00" fill="#c0e890"/><rect x="1613.80" y="342.96" width="4.67" height="12.92" fill="#d0d0d0"/><path d="M891.83 95.26H898.10M898.10 95.26H901.74M901.24 94.76V102.32M932.09 95.26H935.73M932.59 94.76V102.32M935.73 95.26H942.00M942.00 95.26H948.27M948.27 95.26H951.91M951.41 94.76V102.32M982.26 95.26H985.90M982.76 94.76V102.32M985.90 95.26H989.53M989.03 94.76V102.32M1044.97 95.26H1048.61M1045.47 94.76V102.32M1048.61 95.26H1054.88M1054.88 95.26H1061.15M1061.15 95.26H1067.42M1067.42 95.26H1073.69M1073.69 95.26H1079.96M1079.96 95.26H1086.23M1086.23 95.26H1092.50M1092.50 95.26H1098.77M1098.77 95.26H1105.04M1105.04 95.26H1111.32M1111.32 95.26H1117.59M1117.59 95.26H1123.86M1123.86 95.26H1130.13M1130.13 95.26H1136.40M1136.40 95.26H1142.67M1142.67 95.26H1148.94M1148.94 95.26H1155.21M1155.21 95.26H1161.48M1161.48 95.26H1167.75M1167.75 95.26H1174.03M1174.03 95.26H1180.30M1180.30 95.26H1186.57M1186.57 95.26H1192.84M1192.84 95.26H1199.11M1199.11 95.26H1205.38M1205.38 95.26H1211.65M1211.65 95.26H1217.92M1217.92 95.26H1224.19M1224.19 95.26H1230.46M1230.46 95.26H1234.10M1233.60 94.76V102.32M1289.54 95.26H1293.17M1290.04 94.76V102.32M1293.17 95.26H1299.45M1299.45 95.26H1305.72M1305.72 95.26H1311.99M1311.99 95.26H1318.26M1318.26 95.26H1324.53M1324.53 95.26H1330.80M1330.80 95.26H1337.07M1337.07 95.26H1343.34M1343.34 95.26H1349.61M1349.61 95.26H1355.88M1355.88 95.26H1362.16M1362.16 95.26H1368.43M1368.43 95.26H1374.70M1374.70 95.26H1380.97M1380.97 95.26H1387.24M1387.24 95.26H1393.51M1393.51 95.26H1397.15M1396.65 94.76V102.32M1534.11 95.26H1537.74M1534.61 94.76V102.32M1537.74 95.26H1541.38M1540.88 94.76V102.32M1609.36 95.26H1613.00M1609.86 94.76V102.32M1613.00 95.26H1619.27M891.83 307.06H898.10M898.10 307.06H904.37M904.37 307.06H910.64M910.64 307.06H916.91M916.91 307.06H923.19M923.19 307.06H929.46M929.46 307.06H935.73M935.73 307.06H942.00M942.00 307.06H948.27M948.27 307.06H954.54M954.54 307.06H960.81M960.81 307.06H967.08M967.08 307.06H973.35M973.35 307.06H979.62M979.62 307.06H985.90M985.90 307.06H992.17M992.17 307.06H998.44M998.44 307.06H1004.71M1004.71 307.06H1010.98M1010.98 307.06H1017.25M1017.25 307.06H1023.52M1023.52 307.06H1029.79M1029.79 307.06H1036.06M1036.06 307.06H1042.33M1042.34 307.06H1048.61M1048.61 307.06H1054.88M1054.88 307.06H1061.15M1061.15 307.06H1067.42M1067.42 307.06H1073.69M1073.69 307.06H1079.96M1079.96 307.06H1086.23M1086.23 307.06H1092.50M1092.50 307.06H1098.77M1098.77 307.06H1105.04M1105.04 307.06H1111.32M1111.32 307.06H1117.59M1117.59 307.06H1123.86M1123.86 307.06H1130.13M1130.13 307.06H1136.40M1136.40 307.06H1142.67M1142.67 307.06H1148.94M1148.94 307.06H1155.21M1155.21 307.06H1161.48M1161.48 307.06H1167.75M1167.75 307.06H1174.03M1174.03 307.06H1180.30M1180.30 307.06H1186.57M1186.57 307.06H1192.84M1192.84 307.06H1199.11M1199.11 307.06H1205.38M1205.38 307.06H1211.65M1211.65 307.06H1217.92M1217.92 307.06H1224.19M1224.19 307.06H1230.46M1230.46 307.06H1236.74M1236.74 307.06H1243.01M1243.01 307.06H1249.28M1249.28 307.06H1255.55M1255.55 307.06H1261.82M1261.82 307.06H1268.09M1268.09 307.06H1274.36M1274.36 307.06H1280.63M1280.63 307.06H1286.90M1286.90 307.06H1293.17M1293.17 307.06H1299.45M1299.45 307.06H1305.72M1305.72 307.06H1311.99M1311.99 307.06H1318.26M1318.26 307.06H1324.53M1324.53 307.06H1330.80M1330.80 307.06H1337.07M1337.07 307.06H1343.34M1343.34 307.06H1349.61M1349.61 307.06H1355.88M1355.88 307.06H1362.16M1362.16 307.06H1368.43M1368.43 307.06H1374.70M1374.70 307.06H1380.97M1380.97 307.06H1387.24M1387.24 307.06H1393.51M1393.51 307.06H1399.78M1399.78 307.06H1406.05M1406.05 307.06H1412.32M1412.32 307.06H1418.60M1418.59 307.06H1424.87M1424.87 307.06H1431.14M1431.14 307.06H1437.41M1437.41 307.06H1443.68M1443.68 307.06H1449.95M1449.95 307.06H1456.22M1456.22 307.06H1462.49M1462.49 307.06H1468.76M1468.76 307.06H1475.03M1475.03 307.06H1481.31M1481.30 307.06H1487.58M1487.58 307.06H1493.85M1493.85 307.06H1500.12M1500.12 307.06H1506.39M1506.39 307.06H1512.66M1512.66 307.06H1518.93M1518.93 307.06H1525.20M1525.20 307.06H1531.47M1531.47 307.06H1537.74M1537.74 307.06H1544.01M1544.01 307.06H1550.29M1550.29 307.06H1556.56M1556.56 307.06H1562.83M1562.83 307.06H1569.10M1569.10 307.06H1575.37M1575.37 307.06H1581.64M1581.64 307.06H1587.91M1587.91 307.06H1594.18M1594.18 307.06H1600.45M1600.45 307.06H1606.72M1606.72 307.06H1613.00M1613.00 307.06H1619.27M888.70 102.32V116.44M888.70 116.44V130.56M888.70 130.56V144.68M888.70 144.68V158.80M888.70 158.80V172.92M888.70 172.92V187.04M888.70 187.04V201.16M888.70 201.16V215.28M888.70 215.28V229.40M888.70 229.40V243.52M888.70 243.52V257.64M888.70 257.64V271.76M888.70 271.76V285.88M888.70 285.88V300.00M1622.40 102.32V116.44M1622.40 116.44V130.56M1622.40 130.56V144.68M1622.40 144.68V158.80M1622.40 158.80V172.92M1622.40 172.92V187.04M1622.40 187.04V201.16M1622.40 201.16V215.28M1622.40 215.28V229.40M1622.40 229.40V243.52M1622.40 243.52V257.64M1622.40 257.64V271.76M1622.40 271.76V285.88M1622.40 285.88V300.00M888.20 95.26H891.83M888.70 94.76V102.32M1619.27 95.26H1622.90M1622.40 94.76V102.32M888.20 307.06H891.83M888.70 300.00V307.56M1619.27 307.06H1622.90M1622.40 300.00V307.56" stroke="#4a5e4d" stroke-width="1" fill="none"/><path d="M1493.85 151.74H1500.12M1500.12 151.74H1503.75M1503.25 151.24V158.80M1552.92 151.74H1556.56M1553.42 151.24V158.80M1556.56 151.74H1560.19M1559.69 151.24V158.80M1609.36 151.74H1613.00M1609.86 151.24V158.80M1493.85 250.58H1500.12M1500.12 250.58H1506.39M1506.39 250.58H1512.66M1512.66 250.58H1518.93M1518.93 250.58H1525.20M1525.20 250.58H1531.47M1531.47 250.58H1537.74M1537.74 250.58H1544.01M1544.01 250.58H1550.29M1550.29 250.58H1556.56M1556.56 250.58H1562.83M1562.83 250.58H1569.10M1569.10 250.58H1575.37M1575.37 250.58H1581.64M1581.64 250.58H1587.91M1587.91 250.58H1594.18M1594.18 250.58H1600.45M1600.45 250.58H1606.72M1606.72 250.58H1613.00M1490.71 158.80V172.92M1490.71 172.92V187.04M1490.71 187.04V201.16M1490.71 201.16V215.28M1490.71 215.28V229.40M1490.71 229.40V243.52M1616.13 158.80V172.92M1616.13 172.92V187.04M1616.13 187.04V201.16M1616.13 201.16V215.28M1616.13 215.28V229.40M1616.13 229.40V243.52M1490.21 151.74H1493.85M1490.71 151.24V158.80M1613.00 151.74H1616.63M1616.13 151.24V158.80M1490.21 250.58H1493.85M1490.71 243.52V251.08M1613.00 250.58H1616.63M1616.13 243.52V251.08M891.83 349.42H898.10M929.46 349.42H935.73M935.73 349.42H942.00M942.00 349.42H948.27M948.27 349.42H954.54M954.54 349.42H960.81M960.81 349.42H967.08M967.08 349.42H973.35M973.35 349.42H979.62M979.62 349.42H985.90M985.90 349.42H992.17M1042.34 349.42H1048.61M891.83 391.78H898.10M960.81 391.78H967.08M967.08 391.78H973.35M973.35 391.78H979.62M979.62 391.78H985.90M985.90 391.78H992.17M1042.34 391.78H1048.61M891.83 434.14H898.10M942.00 434.14H948.27M948.27 434.14H954.54M954.54 434.14H960.81M960.81 434.14H967.08M967.08 434.14H973.35M973.35 434.14H979.62M979.62 434.14H985.90M985.90 434.14H992.17M992.17 434.14H998.44M1042.34 434.14H1048.61M891.83 476.50H898.10M1042.34 476.50H1048.61M1054.88 335.30H1061.15M1086.23 335.30H1092.50M1092.50 335.30H1098.77M1098.77 335.30H1105.04M1105.04 335.30H1111.32M1111.32 335.30H1117.59M1142.67 335.30H1148.94M1148.94 335.30H1155.21M1205.38 335.30H1211.65M1054.88 405.90H1061.15M1086.23 405.90H1092.50M1092.50 405.90H1098.77M1098.77 405.90H1105.04M1105.04 405.90H1111.32M1111.32 405.90H1117.59M1117.59 405.90H1123.86M1123.86 405.90H1130.13M1130.13 405.90H1136.40M1136.40 405.90H1142.67M1142.67 405.90H1148.94M1148.94 405.90H1155.21M1205.38 405.90H1211.65" stroke="#3a3a3a" stroke-width="1" fill="none"/><path d="M891.83 321.18H898.10M898.10 321.18H901.74M901.24 320.68V328.24M932.09 321.18H935.73M932.59 320.68V328.24M935.73 321.18H942.00M942.00 321.18H948.27M948.27 321.18H954.54M954.54 321.18H960.81M960.81 321.18H967.08M967.08 321.18H973.35M973.35 321.18H979.62M979.62 321.18H985.90M985.90 321.18H992.17M992.17 321.18H998.44M998.44 321.18H1004.71M1004.71 321.18H1010.98M1010.98 321.18H1017.25M1017.25 321.18H1023.52M1023.52 321.18H1029.79M1029.79 321.18H1036.06M1036.06 321.18H1042.33M1042.34 321.18H1048.61M1048.61 321.18H1054.88M1051.74 320.68V328.24M1054.88 321.18H1061.15M1061.15 321.18H1064.78M1064.28 320.68V328.24M1101.41 321.18H1105.04M1101.91 320.68V328.24M1105.04 321.18H1111.32M1111.32 321.18H1117.59M1117.59 321.18H1123.86M1123.86 321.18H1130.13M1130.13 321.18H1136.40M1136.40 321.18H1142.67M1142.67 321.18H1148.94M1148.94 321.18H1155.21M1155.21 321.18H1161.48M1161.48 321.18H1167.75M1167.75 321.18H1174.03M1174.03 321.18H1180.30M1180.30 321.18H1183.93M1183.43 320.68V328.24M1201.75 321.18H1205.38M1202.25 320.68V328.24M1205.38 321.18H1211.65M891.83 547.10H898.10M898.10 547.10H904.37M904.37 547.10H910.64M910.64 547.10H916.91M916.91 547.10H923.19M923.19 547.10H929.46M929.46 547.10H935.73M935.73 547.10H942.00M942.00 547.10H948.27M948.27 547.10H954.54M954.54 547.10H960.81M960.81 547.10H967.08M967.08 547.10H973.35M973.35 547.10H979.62M979.62 547.10H985.90M985.90 547.10H992.17M992.17 547.10H998.44M998.44 547.10H1004.71M1004.71 547.10H1010.98M1010.98 547.10H1017.25M1017.25 547.10H1023.52M1023.52 547.10H1029.79M1029.79 547.10H1036.06M1036.06 547.10H1042.33M1042.34 547.10H1048.61M1048.61 547.10H1054.88M1051.74 540.04V547.60M1054.88 547.10H1061.15M1061.15 547.10H1067.42M1067.42 547.10H1073.69M1073.69 547.10H1079.96M1079.96 547.10H1086.23M1086.23 547.10H1092.50M1092.50 547.10H1098.77M1098.77 547.10H1105.04M1105.04 547.10H1111.32M1111.32 547.10H1117.59M1117.59 547.10H1123.86M1123.86 547.10H1130.13M1130.13 547.10H1136.40M1136.40 547.10H1142.67M1142.67 547.10H1148.94M1148.94 547.10H1155.21M1155.21 547.10H1161.48M1161.48 547.10H1167.75M1167.75 547.10H1174.03M1174.03 547.10H1180.30M1180.30 547.10H1186.57M1186.57 547.10H1192.84M1192.84 547.10H1199.11M1199.11 547.10H1205.38M1205.38 547.10H1211.65M888.70 328.24V342.36M888.70 342.36V356.48M888.70 356.48V370.60M888.70 370.60V384.72M888.70 384.72V398.84M888.70 398.84V412.96M888.70 412.96V427.08M888.70 427.08V441.20M888.70 441.20V455.32M888.70 455.32V469.44M888.70 469.44V483.56M888.70 483.56V497.68M888.70 497.68V511.80M888.20 518.86H891.83M888.70 511.80V525.92M888.70 525.92V540.04M1214.79 328.24V342.36M1214.79 342.36V356.48M1214.79 356.48V370.60M1214.79 370.60V384.72M1214.79 384.72V398.84M1214.79 398.84V412.96M1214.79 412.96V427.08M1214.79 427.08V441.20M1214.79 441.20V455.32M1211.65 462.38H1215.29M1214.79 455.32V469.44M1214.79 469.44V483.56M1214.79 483.56V497.68M1214.79 497.68V511.80M1214.79 511.80V525.92M1214.79 525.92V540.04M888.20 321.18H891.83M888.70 320.68V328.24M1211.65 321.18H1215.29M1214.79 320.68V328.24M888.20 547.10H891.83M888.70 540.04V547.60M1211.65 547.10H1215.29M1214.79 540.04V547.60M1051.74 328.24V342.36M1051.74 342.36V356.48M1051.74 356.48V370.60M1051.74 370.60V384.72M1051.74 384.72V398.84M1051.74 398.84V412.96M1051.74 412.96V427.08M1051.74 427.08V441.20M1051.74 441.20V455.32M1051.24 462.38H1054.88M1051.74 455.32V469.44M1051.74 469.44V483.56M1051.74 483.56V497.68M1051.74 497.68V511.80M1048.61 518.86H1052.24M1051.74 511.80V525.92M1051.74 525.92V540.04M891.83 518.86H898.10M898.10 518.86H904.37M904.37 518.86H910.64M910.64 518.86H916.91M916.91 518.86H923.19M923.19 518.86H929.46M929.46 518.86H935.73M935.73 518.86H942.00M942.00 518.86H948.27M948.27 518.86H954.54M954.54 518.86H960.81M960.81 518.86H967.08M967.08 518.86H973.35M973.35 518.86H979.62M979.62 518.86H985.90M985.90 518.86H992.17M992.17 518.86H998.44M998.44 518.86H1004.71M1004.71 518.86H1010.98M1010.98 518.86H1017.25M1017.25 518.86H1023.52M1023.52 518.86H1029.79M1029.79 518.86H1036.06M1036.06 518.86H1042.33M1042.34 518.86H1048.61M1054.88 462.38H1061.15M1061.15 462.38H1067.42M1067.42 462.38H1073.69M1073.69 462.38H1079.96M1079.96 462.38H1086.23M1086.23 462.38H1092.50M1092.50 462.38H1098.77M1098.77 462.38H1105.04M1105.04 462.38H1111.32M1111.32 462.38H1117.59M1117.59 462.38H1123.86M1123.86 462.38H1130.13M1130.13 462.38H1136.40M1136.40 462.38H1142.67M1142.67 462.38H1148.94M1148.94 462.38H1155.21M1155.21 462.38H1161.48M1161.48 462.38H1167.75M1167.75 462.38H1174.03M1174.03 462.38H1180.30M1180.30 462.38H1186.57M1186.57 462.38H1192.84M1192.84 462.38H1199.11M1199.11 462.38H1205.38M1205.38 462.38H1211.65" stroke="#5e5e42" stroke-width="1" fill="none"/><path d="M929.46 476.50H935.73M935.73 476.50H942.00M942.00 476.50H948.27M948.27 476.50H954.54M954.54 476.50H960.81M960.81 476.50H967.08M967.08 476.50H973.35M973.35 476.50H979.62M979.62 476.50H985.90M985.90 476.50H992.17" stroke="#5a3030" stroke-width="1" fill="none"/><path d="M891.83 561.22H898.10M898.10 561.22H901.74M901.24 560.72V568.28M932.09 561.22H935.73M932.59 560.72V568.28M935.73 561.22H939.36M938.86 560.72V568.28M1001.07 561.22H1004.71M1001.57 560.72V568.28M1004.71 561.22H1010.98M1010.98 561.22H1017.25M1017.25 561.22H1023.52M1023.52 561.22H1027.16M1026.66 560.72V568.28M1057.51 561.22H1061.15M1058.01 560.72V568.28M1061.15 561.22H1064.78M1064.28 560.72V568.28M1095.14 561.22H1098.77M1095.64 560.72V568.28M1098.77 561.22H1102.41M1101.91 560.72V568.28M1132.76 561.22H1136.40M1133.26 560.72V568.28M1136.40 561.22H1140.04M1139.54 560.72V568.28M1208.02 561.22H1211.65M1208.52 560.72V568.28M891.83 758.90H898.10M898.10 758.90H904.37M904.37 758.90H910.64M910.64 758.90H916.91M916.91 758.90H923.19M923.19 758.90H929.46M929.46 758.90H935.73M935.73 758.90H942.00M942.00 758.90H948.27M948.27 758.90H954.54M954.54 758.90H960.81M960.81 758.90H967.08M967.08 758.90H973.35M973.35 758.90H979.62M979.62 758.90H985.90M985.90 758.90H992.17M992.17 758.90H998.44M998.44 758.90H1004.71M1004.71 758.90H1010.98M1010.98 758.90H1017.25M1017.25 758.90H1023.52M1023.52 758.90H1029.79M1029.79 758.90H1036.06M1036.06 758.90H1042.33M1042.34 758.90H1048.61M1048.61 758.90H1054.88M1054.88 758.90H1061.15M1061.15 758.90H1067.42M1067.42 758.90H1073.69M1073.69 758.90H1079.96M1079.96 758.90H1086.23M1086.23 758.90H1092.50M1092.50 758.90H1098.77M1098.77 758.90H1105.04M1105.04 758.90H1111.32M1111.32 758.90H1117.59M1117.59 758.90H1123.86M1123.86 758.90H1130.13M1130.13 758.90H1136.40M1136.40 758.90H1142.67M1142.67 758.90H1148.94M1148.94 758.90H1155.21M1155.21 758.90H1161.48M1161.48 758.90H1167.75M1167.75 758.90H1174.03M1174.03 758.90H1180.30M1180.30 758.90H1186.57M1186.57 758.90H1192.84M1192.84 758.90H1199.11M1199.11 758.90H1205.38M1205.38 758.90H1211.65M888.70 568.28V582.40M888.70 582.40V596.52M888.70 596.52V610.64M888.70 610.64V624.76M888.70 624.76V638.88M888.70 638.88V653.00M888.70 653.00V667.12M888.70 667.12V681.24M888.70 681.24V695.36M888.70 695.36V709.48M888.70 709.48V723.60M888.70 723.60V737.72M888.70 737.72V751.84M1214.79 568.28V582.40M1214.79 582.40V596.52M1214.79 596.52V610.64M1214.79 610.64V624.76M1214.79 624.76V638.88M1214.79 638.88V653.00M1214.79 653.00V667.12M1214.79 667.12V681.24M1214.79 681.24V695.36M1214.79 695.36V709.48M1214.79 709.48V723.60M1214.79 723.60V737.72M1214.79 737.72V751.84M888.20 561.22H891.83M888.70 560.72V568.28M1211.65 561.22H1215.29M1214.79 560.72V568.28M888.20 758.90H891.83M888.70 751.84V759.40M1211.65 758.90H1215.29M1214.79 751.84V759.40" stroke="#504c7c" stroke-width="1" fill="none"/><path d="M1048.61 603.58H1054.88M1054.88 603.58H1058.51M1058.01 603.08V610.64M1113.95 603.58H1117.59M1114.45 603.08V610.64M1117.59 603.58H1123.86M1123.86 603.58H1130.13M1130.13 603.58H1136.40M1136.40 603.58H1142.67M1142.67 603.58H1148.94M1148.94 603.58H1155.21M1155.21 603.58H1161.48M1161.48 603.58H1167.75M1167.75 603.58H1174.03M1174.03 603.58H1180.30M1180.30 603.58H1186.57M1186.57 603.58H1192.84M1192.84 603.58H1199.11M1199.11 603.58H1205.38M1048.61 716.54H1054.88M1054.88 716.54H1058.51M1058.01 709.48V717.04M1101.41 716.54H1105.04M1101.91 709.48V717.04M1105.04 716.54H1111.32M1111.32 716.54H1117.59M1117.59 716.54H1123.86M1123.86 716.54H1130.13M1130.13 716.54H1136.40M1136.40 716.54H1142.67M1142.67 716.54H1148.94M1148.94 716.54H1155.21M1155.21 716.54H1161.48M1161.48 716.54H1167.75M1167.75 716.54H1174.03M1174.03 716.54H1180.30M1180.30 716.54H1186.57M1186.57 716.54H1192.84M1192.84 716.54H1199.11M1199.11 716.54H1205.38M1045.47 610.64V624.76M1045.47 624.76V638.88M1045.47 638.88V653.00M1045.47 653.00V667.12M1045.47 667.12V681.24M1045.47 681.24V695.36M1045.47 695.36V709.48M1208.52 610.64V624.76M1208.52 624.76V638.88M1208.52 638.88V653.00M1208.52 653.00V667.12M1208.52 667.12V681.24M1208.52 681.24V695.36M1208.52 695.36V709.48M1044.97 603.58H1048.61M1045.47 603.08V610.64M1205.38 603.58H1209.02M1208.52 603.08V610.64M1044.97 716.54H1048.61M1045.47 709.48V717.04M1205.38 716.54H1209.02M1208.52 709.48V717.04" stroke="#2e2e2e" stroke-width="1" fill="none"/><path d="M1224.19 321.18H1230.46M1230.46 321.18H1234.10M1233.60 320.68V328.24M1270.73 321.18H1274.36M1271.23 320.68V328.24M1274.36 321.18H1278.00M1277.50 320.68V328.24M1320.89 321.18H1324.53M1321.39 320.68V328.24M1324.53 321.18H1330.80M1330.80 321.18H1337.07M1337.07 321.18H1343.34M1343.34 321.18H1349.61M1349.61 321.18H1355.88M1355.88 321.18H1362.16M1362.16 321.18H1368.43M1368.43 321.18H1372.06M1371.56 320.68V328.24M1427.50 321.18H1431.14M1428.00 320.68V328.24M1431.14 321.18H1434.77M1434.27 320.68V328.24M1483.94 321.18H1487.58M1484.44 320.68V328.24M1487.58 321.18H1491.21M1490.71 320.68V328.24M1521.57 321.18H1525.20M1522.07 320.68V328.24M1525.20 321.18H1528.84M1528.34 320.68V328.24M1609.36 321.18H1613.00M1609.86 320.68V328.24M1613.00 321.18H1619.27M1224.19 758.90H1227.83M1227.33 751.84V759.40M1295.81 758.90H1299.45M1296.31 751.84V759.40M1299.45 758.90H1303.08M1302.58 751.84V759.40M1345.98 758.90H1349.61M1346.48 751.84V759.40M1349.61 758.90H1353.25M1352.75 751.84V759.40M1414.96 758.90H1418.60M1415.46 751.84V759.40M1418.59 758.90H1422.23M1421.73 751.84V759.40M1452.59 758.90H1456.22M1453.09 751.84V759.40M1456.22 758.90H1459.86M1459.36 751.84V759.40M1509.02 758.90H1512.66M1509.52 751.84V759.40M1512.66 758.90H1518.93M1518.93 758.90H1525.20M1525.20 758.90H1531.47M1531.47 758.90H1537.74M1537.74 758.90H1544.01M1544.01 758.90H1550.29M1550.29 758.90H1556.56M1556.56 758.90H1562.83M1562.83 758.90H1569.10M1569.10 758.90H1575.37M1575.37 758.90H1579.01M1578.51 751.84V759.40M1615.63 758.90H1619.27M1616.13 751.84V759.40M1221.06 328.24V342.36M1221.06 342.36V356.48M1221.06 356.48V370.60M1221.06 370.60V384.72M1221.06 384.72V398.84M1221.06 398.84V412.96M1221.06 412.96V427.08M1221.06 427.08V441.20M1221.06 441.20V455.32M1221.06 455.32V469.44M1221.06 469.44V483.56M1221.06 483.56V497.68M1221.06 497.68V511.80M1221.06 511.80V525.92M1221.06 525.92V540.04M1221.06 540.04V554.16M1221.06 554.16V568.28M1221.06 568.28V582.40M1221.06 582.40V596.52M1221.06 596.52V610.64M1221.06 610.64V624.76M1221.06 624.76V638.88M1221.06 638.88V653.00M1221.06 653.00V667.12M1221.06 667.12V681.24M1221.06 681.24V695.36M1221.06 695.36V709.48M1221.06 709.48V723.60M1221.06 723.60V737.72M1221.06 737.72V751.84M1622.40 328.24V342.36M1622.40 342.36V356.48M1622.40 356.48V370.60M1622.40 370.60V384.72M1622.40 384.72V398.84M1622.40 398.84V412.96M1622.40 412.96V427.08M1622.40 427.08V441.20M1622.40 441.20V455.32M1622.40 455.32V469.44M1622.40 469.44V483.56M1622.40 483.56V497.68M1622.40 497.68V511.80M1622.40 511.80V525.92M1622.40 525.92V540.04M1622.40 540.04V554.16M1622.40 554.16V568.28M1622.40 568.28V582.40M1622.40 582.40V596.52M1622.40 596.52V610.64M1622.40 610.64V624.76M1622.40 624.76V638.88M1622.40 638.88V653.00M1622.40 653.00V667.12M1622.40 667.12V681.24M1622.40 681.24V695.36M1622.40 695.36V709.48M1622.40 709.48V723.60M1622.40 723.60V737.72M1622.40 737.72V751.84M1220.56 321.18H1224.19M1221.06 320.68V328.24M1619.27 321.18H1622.90M1622.40 320.68V328.24M1220.56 758.90H1224.19M1221.06 751.84V759.40M1619.27 758.90H1622.90M1622.40 751.84V759.40" stroke="#643e3e" stroke-width="1" fill="none"/><path d="M1243.01 349.42H1249.28" stroke="#9a9a9a" stroke-width="1" fill="none"/><path d="M1233.60 356.48V370.60M1251.91 363.54H1255.55M1252.41 356.48V370.60M1255.55 363.54H1261.82" stroke="#979797" stroke-width="1" fill="none"/><path d="M1233.60 370.60V384.72M1251.91 377.66H1255.55M1252.41 370.60V384.72M1255.55 377.66H1261.82" stroke="#939393" stroke-width="1" fill="none"/><path d="M1233.60 384.72V398.84M1251.91 391.78H1255.55M1252.41 384.72V398.84M1255.55 391.78H1261.82" stroke="#909090" stroke-width="1" fill="none"/><path d="M1233.60 398.84V412.96M1251.91 405.90H1255.55M1252.41 398.84V412.96M1255.55 405.90H1261.82" stroke="#8c8c8c" stroke-width="1" fill="none"/><path d="M1233.60 412.96V427.08M1261.82 420.02H1268.09" stroke="#898989" stroke-width="1" fill="none"/><path d="M1233.60 427.08V441.20M1252.41 427.08V441.20M1280.63 434.14H1286.90" stroke="#868686" stroke-width="1" fill="none"/><path d="M1233.60 441.20V455.32M1252.41 441.20V455.32M1271.23 441.20V455.32M1299.45 448.26H1305.72" stroke="#828282" stroke-width="1" fill="none"/><path d="M1233.60 455.32V469.44M1252.41 455.32V469.44M1271.23 455.32V469.44M1290.04 455.32V469.44M1308.35 462.38H1311.99M1308.85 455.32V469.44M1311.99 462.38H1318.26" stroke="#7f7f7f" stroke-width="1" fill="none"/><path d="M1233.60 469.44V483.56M1252.41 469.44V483.56M1271.23 469.44V483.56M1290.04 469.44V483.56M1308.35 476.50H1311.99M1308.85 469.44V483.56M1311.99 476.50H1318.26" stroke="#7b7b7b" stroke-width="1" fill="none"/><path d="M1233.60 483.56V497.68M1252.41 483.56V497.68M1271.23 483.56V497.68M1290.04 483.56V497.68M1318.26 490.62H1324.53" stroke="#787878" stroke-width="1" fill="none"/><path d="M1233.60 497.68V511.80M1252.41 497.68V511.80M1271.23 497.68V511.80M1290.04 497.68V511.80M1308.85 497.68V511.80M1337.07 504.74H1343.34" stroke="#747474" stroke-width="1" fill="none"/><path d="M1233.60 511.80V525.92M1252.41 511.80V525.92M1271.23 511.80V525.92M1290.04 511.80V525.92M1308.85 511.80V525.92M1327.67 511.80V525.92M1345.98 518.86H1349.61M1346.48 511.80V525.92M1349.61 518.86H1355.88" stroke="#717171" stroke-width="1" fill="none"/><path d="M1233.60 525.92V540.04M1252.41 525.92V540.04M1271.23 525.92V540.04M1290.04 525.92V540.04M1308.85 525.92V540.04M1327.67 525.92V540.04M1345.98 532.98H1349.61M1346.48 525.92V540.04M1349.61 532.98H1355.88" stroke="#6e6e6e" stroke-width="1" fill="none"/><path d="M1233.60 540.04V554.16M1252.41 540.04V554.16M1271.23 540.04V554.16M1290.04 540.04V554.16M1308.85 540.04V554.16M1327.67 540.04V554.16M1345.98 547.10H1349.61M1346.48 540.04V554.16M1349.61 547.10H1355.88" stroke="#6a6a6a" stroke-width="1" fill="none"/><path d="M1233.60 554.16V568.28M1252.41 554.16V568.28M1271.23 554.16V568.28M1290.04 554.16V568.28M1308.85 554.16V568.28M1327.67 554.16V568.28M1345.98 561.22H1349.61M1346.48 554.16V561.72M1349.61 561.22H1355.88" stroke="#676767" stroke-width="1" fill="none"/><path d="M1233.60 568.28V582.40M1252.41 568.28V582.40M1271.23 568.28V582.40M1290.04 568.28V582.40M1308.85 568.28V582.40M1327.17 575.34H1330.80M1327.67 568.28V575.84M1330.80 575.34H1337.07" stroke="#636363" stroke-width="1" fill="none"/><path d="M1233.60 582.40V596.52M1252.41 582.40V596.52M1271.23 582.40V596.52M1290.04 582.40V596.52M1318.26 589.46H1324.53" stroke="#606060" stroke-width="1" fill="none"/><path d="M1233.60 596.52V610.64M1252.41 596.52V610.64M1271.23 596.52V610.64M1290.04 596.52V610.64M1308.85 596.52V610.64M1327.17 603.58H1330.80M1327.67 596.52V604.08M1330.80 603.58H1337.07" stroke="#5d5d5d" stroke-width="1" fill="none"/><path d="M1233.60 610.64V624.76M1252.41 610.64V624.76M1271.23 610.64V624.76M1290.04 610.64V624.76M1308.35 617.70H1311.99M1308.85 610.64V624.76M1311.99 617.70H1318.26" stroke="#595959" stroke-width="1" fill="none"/><path d="M1233.60 624.76V638.88M1252.41 624.76V638.88M1271.23 624.76V638.88M1290.04 624.76V638.88M1308.35 631.82H1311.99M1308.85 624.76V632.32M1311.99 631.82H1318.26" stroke="#565656" stroke-width="1" fill="none"/><path d="M1233.60 638.88V653.00M1252.41 638.88V653.00M1271.23 638.88V653.00M1289.54 645.94H1293.17M1290.04 638.88V653.00M1293.17 645.94H1299.45" stroke="#525252" stroke-width="1" fill="none"/><path d="M1233.60 653.00V667.12M1252.41 653.00V667.12M1271.23 653.00V667.12M1289.54 660.06H1293.17M1290.04 653.00V660.56M1293.17 660.06H1299.45" stroke="#4f4f4f" stroke-width="1" fill="none"/><path d="M1233.60 667.12V681.24M1252.41 667.12V681.24M1280.63 674.18H1286.90" stroke="#4c4c4c" stroke-width="1" fill="none"/><path d="M1233.60 681.24V695.36M1252.41 681.24V695.36M1271.23 681.24V695.36M1299.45 688.30H1305.72" stroke="#484848" stroke-width="1" fill="none"/><path d="M1233.60 695.36V709.48M1252.41 695.36V709.48M1271.23 695.36V709.48M1290.04 695.36V709.48M1308.35 702.42H1311.99M1308.85 695.36V702.92M1311.99 702.42H1318.26" stroke="#454545" stroke-width="1" fill="none"/><path d="M1233.60 709.48V723.60M1252.41 709.48V723.60M1280.63 716.54H1286.90" stroke="#414141" stroke-width="1" fill="none"/><path d="M1233.60 723.60V737.72M1252.41 723.60V737.72M1271.23 723.60V737.72M1289.54 730.66H1293.17M1290.04 723.60V737.72M1293.17 730.66H1299.45" stroke="#3e3e3e" stroke-width="1" fill="none"/><path d="M1233.60 737.72V751.84M1252.41 737.72V751.84M1271.23 737.72V751.84M1289.54 744.78H1293.17M1290.04 737.72V751.84M1293.17 744.78H1299.45" stroke="#3b3b3b" stroke-width="1" fill="none"/><path d="M1616.13 331.84V340.04M1613.33 334.84L1616.13 331.84L1618.93 334.84" stroke="#eeeeee" stroke-width="1.5" fill="none"/><path d="M1616.13 741.12V749.12M1613.33 746.12L1616.13 749.12L1618.93 746.12" stroke="#eeeeee" stroke-width="1.5" fill="none"/><path d="M1233.60 755.44V763.64M1230.80 758.44L1233.60 755.44L1236.40 758.44" stroke="#505050" stroke-width="1.5" fill="none"/><path d="M1290.04 755.24V763.24M1287.24 760.24L1290.04 763.24L1292.84 760.24" stroke="#b54040" stroke-width="1.5" fill="none"/><path d="M1342.71 756.84V761.34H1337.71M1339.21 759.84L1337.61 761.34L1339.21 762.84" stroke="#505050" stroke-width="1.2" fill="none"/></svg>
<div style="position:absolute;left:885.56px;top:88.2px;width:778.92px;height:677.76px;transform:scaleX(0.95001);transform-origin:0 0;font-size:11.0px;line-height:14.12px;"><div class="t" style="left:19.80px;top:-0.25px;color:#913333;">¹</div><div class="t" style="left:26.40px;top:-0.25px;color:#eeeeee;font-weight:bold;">cpu</div><div class="t" style="left:72.61px;top:-0.25px;color:#b54040;font-weight:bold;">m</div><div class="t" style="left:79.21px;top:-0.25px;color:#eeeeee;font-weight:bold;">enu</div><div class="t" style="left:112.22px;top:-0.25px;color:#b54040;font-weight:bold;">p</div><div class="t" style="left:118.82px;top:-0.25px;color:#eeeeee;font-weight:bold;">reset</div><div class="t" style="left:158.42px;top:-0.25px;color:#eeeeee;font-weight:bold;">*</div><div class="t" style="left:369.66px;top:-0.25px;color:#eeeeee;font-weight:bold;">05:28:12</div><div class="t" style="left:541.28px;top:-0.25px;color:#eeeeee;font-weight:bold;">BAT</div><div class="t" style="left:574.29px;top:-0.25px;color:#eeeeee;font-weight:bold;">100%</div><div class="t" style="left:693.10px;top:-0.25px;color:#b54040;font-weight:bold;">-</div><div class="t" style="left:706.31px;top:-0.25px;color:#eeeeee;font-weight:bold;">2000ms</div><div class="t" style="left:752.51px;top:-0.25px;color:#b54040;font-weight:bold;">+</div><div class="t" style="left:653.50px;top:56.23px;color:#eeeeee;font-weight:bold;">Ultra 7</div><div class="t" style="left:712.91px;top:56.23px;color:#eeeeee;font-weight:bold;">3.1 GHz</div><div class="t" style="left:640.30px;top:70.35px;color:#cccccc;font-weight:bold;">CPU</div><div class="t" style="left:752.51px;top:70.35px;color:#6fb98e;">4%</div><div class="t" style="left:640.30px;top:84.47px;color:#cccccc;">C0</div><div class="t" style="left:752.51px;top:84.47px;color:#6fb98e;">7%</div><div class="t" style="left:640.30px;top:98.59px;color:#cccccc;">C1</div><div class="t" style="left:752.51px;top:98.59px;color:#6fb98e;">5%</div><div class="t" style="left:640.30px;top:112.71px;color:#cccccc;">C2</div><div class="t" style="left:752.51px;top:112.71px;color:#6fb98e;">2%</div><div class="t" style="left:640.30px;top:126.83px;color:#cccccc;">C3</div><div class="t" style="left:752.51px;top:126.83px;color:#6fb98e;">3%</div><div class="t" style="left:640.30px;top:140.95px;color:#cccccc;">LAV: 0.70 0.64 0.36</div><div class="t" style="left:13.20px;top:197.43px;color:#606060;">up 00:20:27</div><div class="t" style="left:19.80px;top:225.67px;color:#913333;">¹</div><div class="t" style="left:26.40px;top:225.67px;color:#eeeeee;font-weight:bold;">mem</div><div class="t" style="left:191.43px;top:225.67px;color:#b54040;font-weight:bold;">d</div><div class="t" style="left:198.03px;top:225.67px;color:#eeeeee;font-weight:bold;">isks</div><div class="t" style="left:316.85px;top:225.67px;color:#b54040;font-weight:bold;">i</div><div class="t" style="left:323.45px;top:225.67px;color:#eeeeee;font-weight:bold;">o</div><div class="t" style="left:13.20px;top:239.79px;color:#eeeeee;font-weight:bold;">Total:</div><div class="t" style="left:112.22px;top:239.79px;color:#eeeeee;font-weight:bold;">7.76 GiB</div><div class="t" style="left:13.20px;top:253.91px;color:#cccccc;">Used:</div><div class="t" style="left:112.22px;top:253.91px;color:#cccccc;">1.58 GiB</div><div class="t" style="left:19.80px;top:268.03px;color:#cccccc;">20%</div><div class="t" style="left:13.20px;top:296.27px;color:#cccccc;">Available:</div><div class="t" style="left:112.22px;top:296.27px;color:#cccccc;">6.18 GiB</div><div class="t" style="left:19.80px;top:310.39px;color:#cccccc;">80%</div><div class="t" style="left:13.20px;top:338.63px;color:#cccccc;">Cached:</div><div class="t" style="left:118.82px;top:338.63px;color:#cccccc;">881 MiB</div><div class="t" style="left:19.80px;top:352.75px;color:#cccccc;">11%</div><div class="t" style="left:13.20px;top:380.99px;color:#cccccc;">Free:</div><div class="t" style="left:112.22px;top:380.99px;color:#cccccc;">5.52 GiB</div><div class="t" style="left:19.80px;top:395.11px;color:#cccccc;">71%</div><div class="t" style="left:184.83px;top:239.79px;color:#eeeeee;font-weight:bold;">root</div><div class="t" style="left:244.24px;top:239.79px;color:#cccccc;">▼32K</div><div class="t" style="left:283.84px;top:239.79px;color:#eeeeee;font-weight:bold;">78.2 GiB</div><div class="t" style="left:184.83px;top:253.91px;color:#cccccc;">IO%</div><div class="t" style="left:184.83px;top:268.03px;color:#cccccc;">Used: 37%</div><div class="t" style="left:283.84px;top:268.03px;color:#cccccc;">29.3 GiB</div><div class="t" style="left:184.83px;top:282.15px;color:#cccccc;">Free: 63%</div><div class="t" style="left:283.84px;top:282.15px;color:#cccccc;">48.9 GiB</div><div class="t" style="left:184.83px;top:310.39px;color:#eeeeee;font-weight:bold;">swap</div><div class="t" style="left:283.84px;top:310.39px;color:#eeeeee;font-weight:bold;">1023 MiB</div><div class="t" style="left:184.83px;top:324.51px;color:#cccccc;">Used:  0%</div><div class="t" style="left:297.04px;top:324.51px;color:#cccccc;">0 Byte</div><div class="t" style="left:184.83px;top:338.63px;color:#cccccc;">Free:100%</div><div class="t" style="left:283.84px;top:338.63px;color:#cccccc;">1023 MiB</div><div class="t" style="left:19.80px;top:465.71px;color:#913333;">¹</div><div class="t" style="left:26.40px;top:465.71px;color:#eeeeee;font-weight:bold;">net</div><div class="t" style="left:59.41px;top:465.71px;color:#eeeeee;font-weight:bold;">10.0.2.15</div><div class="t" style="left:151.82px;top:465.71px;color:#eeeeee;font-weight:bold;">s</div><div class="t" style="left:158.42px;top:465.71px;color:#b54040;font-weight:bold;">y</div><div class="t" style="left:165.02px;top:465.71px;color:#eeeeee;font-weight:bold;">nc</div><div class="t" style="left:191.43px;top:465.71px;color:#b54040;font-weight:bold;">a</div><div class="t" style="left:198.03px;top:465.71px;color:#eeeeee;font-weight:bold;">uto</div><div class="t" style="left:231.03px;top:465.71px;color:#b54040;font-weight:bold;">z</div><div class="t" style="left:237.64px;top:465.71px;color:#eeeeee;font-weight:bold;">ero</div><div class="t" style="left:270.64px;top:465.71px;color:#b54040;font-weight:bold;">&lt;b</div><div class="t" style="left:290.44px;top:465.71px;color:#eeeeee;font-weight:bold;">eth0</div><div class="t" style="left:323.45px;top:465.71px;color:#b54040;font-weight:bold;">n&gt;</div><div class="t" style="left:6.60px;top:479.83px;color:#606060;">10K</div><div class="t" style="left:6.60px;top:649.27px;color:#606060;">10K</div><div class="t" style="left:184.83px;top:508.07px;color:#eeeeee;font-weight:bold;">download</div><div class="t" style="left:184.83px;top:621.03px;color:#eeeeee;font-weight:bold;">upload</div><div class="t" style="left:171.63px;top:522.19px;color:#cccccc;">▼</div><div class="t" style="left:184.83px;top:522.19px;color:#cccccc;">0 Byte/s</div><div class="t" style="left:277.24px;top:522.19px;color:#cccccc;">(0 bitps)</div><div class="t" style="left:171.63px;top:536.31px;color:#cccccc;">▼</div><div class="t" style="left:184.83px;top:536.31px;color:#cccccc;">Top:</div><div class="t" style="left:257.44px;top:536.31px;color:#cccccc;">(7.42 Mibps)</div><div class="t" style="left:171.63px;top:550.43px;color:#cccccc;">▼</div><div class="t" style="left:184.83px;top:550.43px;color:#cccccc;">Total:</div><div class="t" style="left:283.84px;top:550.43px;color:#cccccc;">33.5 MiB</div><div class="t" style="left:171.63px;top:578.67px;color:#cccccc;">▲</div><div class="t" style="left:184.83px;top:578.67px;color:#cccccc;">0 Byte/s</div><div class="t" style="left:277.24px;top:578.67px;color:#cccccc;">(0 bitps)</div><div class="t" style="left:171.63px;top:592.79px;color:#cccccc;">▲</div><div class="t" style="left:184.83px;top:592.79px;color:#cccccc;">Top:</div><div class="t" style="left:264.04px;top:592.79px;color:#cccccc;">(391 Kibps)</div><div class="t" style="left:171.63px;top:606.91px;color:#cccccc;">▲</div><div class="t" style="left:184.83px;top:606.91px;color:#cccccc;">Total:</div><div class="t" style="left:283.84px;top:606.91px;color:#cccccc;">5.80 MiB</div><div class="t" style="left:369.66px;top:225.67px;color:#913333;">¹</div><div class="t" style="left:376.26px;top:225.67px;color:#eeeeee;font-weight:bold;">proc</div><div class="t" style="left:415.86px;top:225.67px;color:#b54040;font-weight:bold;">f</div><div class="t" style="left:422.46px;top:225.67px;color:#eeeeee;font-weight:bold;">ilter</div><div class="t" style="left:514.88px;top:225.67px;color:#eeeeee;font-weight:bold;">per-</div><div class="t" style="left:541.28px;top:225.67px;color:#b54040;font-weight:bold;">c</div><div class="t" style="left:547.88px;top:225.67px;color:#eeeeee;font-weight:bold;">ore</div><div class="t" style="left:580.89px;top:225.67px;color:#b54040;font-weight:bold;">r</div><div class="t" style="left:587.49px;top:225.67px;color:#eeeeee;font-weight:bold;">everse</div><div class="t" style="left:640.30px;top:225.67px;color:#eeeeee;font-weight:bold;">tre</div><div class="t" style="left:660.10px;top:225.67px;color:#b54040;font-weight:bold;">e</div><div class="t" style="left:679.90px;top:225.67px;color:#b54040;font-weight:bold;">&lt;</div><div class="t" style="left:693.10px;top:225.67px;color:#eeeeee;font-weight:bold;">cpu lazy</div><div class="t" style="left:752.51px;top:225.67px;color:#b54040;font-weight:bold;">&gt;</div><div class="t" style="left:356.45px;top:239.79px;color:#eeeeee;font-weight:bold;">Tree:</div><div class="t" style="left:613.89px;top:239.79px;color:#eeeeee;font-weight:bold;">User:</div><div class="t" style="left:660.10px;top:239.79px;color:#eeeeee;font-weight:bold;">MemB</div><div class="t" style="left:732.71px;top:239.79px;color:#eeeeee;font-weight:bold;">Cpu%</div><div class="t" style="left:356.45px;top:253.91px;color:#9a9a9a;">[-]</div><div class="t" style="left:382.86px;top:253.91px;color:#c4c4c4;">1</div><div class="t" style="left:396.06px;top:253.91px;color:#72bd8a;">systemd</div><div class="t" style="left:442.27px;top:253.91px;color:#c4c4c4;"> (init)</div><div class="t" style="left:613.89px;top:253.91px;color:#c4c4c4;">root</div><div class="t" style="left:666.70px;top:253.91px;color:#7cc49a;">13M</div><div class="t" style="left:739.31px;top:253.91px;color:#70b68c;">0.0</div><div class="t" style="left:402.66px;top:268.03px;color:#c0c0c0;">529</div><div class="t" style="left:429.06px;top:268.03px;color:#70b887;">dbus-daemon</div><div class="t" style="left:613.89px;top:268.03px;color:#c0c0c0;">mess+</div><div class="t" style="left:660.10px;top:268.03px;color:#79c097;">5.8M</div><div class="t" style="left:739.31px;top:268.03px;color:#6eb289;">0.0</div><div class="t" style="left:402.66px;top:282.15px;color:#bbbbbb;">531</div><div class="t" style="left:429.06px;top:282.15px;color:#6eb284;">polkitd</div><div class="t" style="left:613.89px;top:282.15px;color:#bbbbbb;">polk+</div><div class="t" style="left:660.10px;top:282.15px;color:#77bb93;">9.8M</div><div class="t" style="left:739.31px;top:282.15px;color:#6bae86;">0.0</div><div class="t" style="left:402.66px;top:296.27px;color:#b7b7b7;">616</div><div class="t" style="left:429.06px;top:296.27px;color:#6cad81;">VBoxService</div><div class="t" style="left:613.89px;top:296.27px;color:#b7b7b7;">root</div><div class="t" style="left:660.10px;top:296.27px;color:#74b790;">2.8M</div><div class="t" style="left:739.31px;top:296.27px;color:#69aa83;">0.0</div><div class="t" style="left:402.66px;top:310.39px;color:#b3b3b3;">340</div><div class="t" style="left:429.06px;top:310.39px;color:#6aa87e;">systemd-journal</div><div class="t" style="left:528.08px;top:310.39px;color:#b3b3b3;"> (systemd-j)</div><div class="t" style="left:613.89px;top:310.39px;color:#b3b3b3;">root</div><div class="t" style="left:666.70px;top:310.39px;color:#71b38c;">17M</div><div class="t" style="left:739.31px;top:310.39px;color:#66a680;">0.0</div><div class="t" style="left:376.26px;top:324.51px;color:#898989;">[-]</div><div class="t" style="left:402.66px;top:324.51px;color:#aeaeae;">1177</div><div class="t" style="left:435.67px;top:324.51px;color:#68a37b;">systemd</div><div class="t" style="left:613.89px;top:324.51px;color:#aeaeae;">kali</div><div class="t" style="left:666.70px;top:324.51px;color:#6eae89;">13M</div><div class="t" style="left:739.31px;top:324.51px;color:#64a27c;">0.0</div><div class="t" style="left:396.06px;top:338.63px;color:#868686;">[-]</div><div class="t" style="left:422.46px;top:338.63px;color:#aaaaaa;">1500</div><div class="t" style="left:455.47px;top:338.63px;color:#669d78;">gnome-shell</div><div class="t" style="left:613.89px;top:338.63px;color:#aaaaaa;">kali</div><div class="t" style="left:660.10px;top:338.63px;color:#6caa86;">508M</div><div class="t" style="left:739.31px;top:338.63px;color:#619e79;">1.4</div><div class="t" style="left:415.86px;top:352.75px;color:#828282;">[-]</div><div class="t" style="left:442.27px;top:352.75px;color:#a6a6a6;">2395</div><div class="t" style="left:475.27px;top:352.75px;color:#649875;">chrome</div><div class="t" style="left:613.89px;top:352.75px;color:#a6a6a6;">kali</div><div class="t" style="left:660.10px;top:352.75px;color:#69a682;">270M</div><div class="t" style="left:739.31px;top:352.75px;color:#5f9a76;">0.3</div><div class="t" style="left:462.07px;top:366.87px;color:#a1a1a1;">2444</div><div class="t" style="left:495.07px;top:366.87px;color:#629372;">chrome</div><div class="t" style="left:613.89px;top:366.87px;color:#a1a1a1;">kali</div><div class="t" style="left:660.10px;top:366.87px;color:#66a17f;">112M</div><div class="t" style="left:739.31px;top:366.87px;color:#5c9673;">0.1</div><div class="t" style="left:462.07px;top:380.99px;color:#9d9d9d;">2722</div><div class="t" style="left:495.07px;top:380.99px;color:#5f8f6e;">chrome</div><div class="t" style="left:613.89px;top:380.99px;color:#9d9d9d;">kali</div><div class="t" style="left:666.70px;top:380.99px;color:#639d7b;">77M</div><div class="t" style="left:739.31px;top:380.99px;color:#5a9270;">0.0</div><div class="t" style="left:435.67px;top:395.11px;color:#787878;">[-]</div><div class="t" style="left:462.07px;top:395.11px;color:#999999;">2413</div><div class="t" style="left:495.07px;top:395.11px;color:#5d896b;">chrome</div><div class="t" style="left:613.89px;top:395.11px;color:#999999;">kali</div><div class="t" style="left:666.70px;top:395.11px;color:#619978;">58M</div><div class="t" style="left:739.31px;top:395.11px;color:#578e6d;">0.0</div><div class="t" style="left:455.47px;top:409.23px;color:#747474;">[-]</div><div class="t" style="left:481.87px;top:409.23px;color:#949494;">2417</div><div class="t" style="left:514.88px;top:409.23px;color:#5c8468;">chrome</div><div class="t" style="left:613.89px;top:409.23px;color:#949494;">kali</div><div class="t" style="left:666.70px;top:409.23px;color:#5e9474;">16M</div><div class="t" style="left:739.31px;top:409.23px;color:#558a6a;">0.0</div><div class="t" style="left:501.68px;top:423.35px;color:#909090;">3019</div><div class="t" style="left:534.68px;top:423.35px;color:#598065;">chrome</div><div class="t" style="left:613.89px;top:423.35px;color:#909090;">kali</div><div class="t" style="left:660.10px;top:423.35px;color:#5b9071;">302M</div><div class="t" style="left:739.31px;top:423.35px;color:#528667;">0.5</div><div class="t" style="left:501.68px;top:437.47px;color:#8c8c8c;">3478</div><div class="t" style="left:534.68px;top:437.47px;color:#577a62;">chrome</div><div class="t" style="left:613.89px;top:437.47px;color:#8c8c8c;">kali</div><div class="t" style="left:666.70px;top:437.47px;color:#588c6e;">66M</div><div class="t" style="left:739.31px;top:437.47px;color:#508264;">0.0</div><div class="t" style="left:501.68px;top:451.59px;color:#878787;">2810</div><div class="t" style="left:534.68px;top:451.59px;color:#54765f;">chrome</div><div class="t" style="left:613.89px;top:451.59px;color:#878787;">kali</div><div class="t" style="left:660.10px;top:451.59px;color:#56876a;">107M</div><div class="t" style="left:739.31px;top:451.59px;color:#4d7e61;">0.0</div><div class="t" style="left:501.68px;top:465.71px;color:#838383;">2453</div><div class="t" style="left:534.68px;top:465.71px;color:#52725c;">chrome</div><div class="t" style="left:613.89px;top:465.71px;color:#838383;">kali</div><div class="t" style="left:666.70px;top:465.71px;color:#538367;">53M</div><div class="t" style="left:739.31px;top:465.71px;color:#4b7a5e;">0.0</div><div class="t" style="left:481.87px;top:479.83px;color:#7f7f7f;">2414</div><div class="t" style="left:514.88px;top:479.83px;color:#506d59;">nacl_helper</div><div class="t" style="left:613.89px;top:479.83px;color:#7f7f7f;">kali</div><div class="t" style="left:660.10px;top:479.83px;color:#507f63;">4.0M</div><div class="t" style="left:739.31px;top:479.83px;color:#48765a;">0.0</div><div class="t" style="left:435.67px;top:493.95px;color:#606060;">[-]</div><div class="t" style="left:462.07px;top:493.95px;color:#7a7a7a;">2412</div><div class="t" style="left:495.07px;top:493.95px;color:#4d6856;">chrome</div><div class="t" style="left:613.89px;top:493.95px;color:#7a7a7a;">kali</div><div class="t" style="left:666.70px;top:493.95px;color:#4d7a60;">58M</div><div class="t" style="left:739.31px;top:493.95px;color:#467157;">0.0</div><div class="t" style="left:481.87px;top:508.07px;color:#767676;">2439</div><div class="t" style="left:514.88px;top:508.07px;color:#4b6453;">chrome</div><div class="t" style="left:613.89px;top:508.07px;color:#767676;">kali</div><div class="t" style="left:660.10px;top:508.07px;color:#4b765d;">142M</div><div class="t" style="left:739.31px;top:508.07px;color:#436d54;">0.2</div><div class="t" style="left:462.07px;top:522.19px;color:#727272;">2401</div><div class="t" style="left:495.07px;top:522.19px;color:#486050;">cat</div><div class="t" style="left:613.89px;top:522.19px;color:#727272;">kali</div><div class="t" style="left:660.10px;top:522.19px;color:#487259;">1.8M</div><div class="t" style="left:739.31px;top:522.19px;color:#416951;">0.0</div><div class="t" style="left:462.07px;top:536.31px;color:#6d6d6d;">2402</div><div class="t" style="left:495.07px;top:536.31px;color:#465b4d;">cat</div><div class="t" style="left:613.89px;top:536.31px;color:#6d6d6d;">kali</div><div class="t" style="left:660.10px;top:536.31px;color:#456d56;">1.5M</div><div class="t" style="left:739.31px;top:536.31px;color:#3e654e;">0.0</div><div class="t" style="left:442.27px;top:550.43px;color:#696969;">2923</div><div class="t" style="left:475.27px;top:550.43px;color:#44574a;">gjs</div><div class="t" style="left:613.89px;top:550.43px;color:#696969;">kali</div><div class="t" style="left:666.70px;top:550.43px;color:#426952;">50M</div><div class="t" style="left:739.31px;top:550.43px;color:#3c614b;">0.0</div><div class="t" style="left:442.27px;top:564.55px;color:#656565;">1562</div><div class="t" style="left:475.27px;top:564.55px;color:#415347;">mutter-x11-fram</div><div class="t" style="left:613.89px;top:564.55px;color:#656565;">kali</div><div class="t" style="left:660.10px;top:564.55px;color:#40654f;">110M</div><div class="t" style="left:739.31px;top:564.55px;color:#395d48;">0.0</div><div class="t" style="left:396.06px;top:578.67px;color:#4c4c4c;">[-]</div><div class="t" style="left:422.46px;top:578.67px;color:#606060;">2282</div><div class="t" style="left:455.47px;top:578.67px;color:#3f4f44;">gnome-terminal-</div><div class="t" style="left:554.48px;top:578.67px;color:#606060;"> (gnome)</div><div class="t" style="left:613.89px;top:578.67px;color:#606060;">kali</div><div class="t" style="left:666.70px;top:578.67px;color:#3d604c;">52M</div><div class="t" style="left:739.31px;top:578.67px;color:#375945;">0.1</div><div class="t" style="left:415.86px;top:592.79px;color:#484848;">[-]</div><div class="t" style="left:442.27px;top:592.79px;color:#5c5c5c;">2292</div><div class="t" style="left:475.27px;top:592.79px;color:#3c4a41;">zsh</div><div class="t" style="left:613.89px;top:592.79px;color:#5c5c5c;">kali</div><div class="t" style="left:660.10px;top:592.79px;color:#3a5c48;">6.2M</div><div class="t" style="left:739.31px;top:592.79px;color:#345542;">0.0</div><div class="t" style="left:462.07px;top:606.91px;color:#585858;">3104</div><div class="t" style="left:495.07px;top:606.91px;color:#3a463e;">btop</div><div class="t" style="left:613.89px;top:606.91px;color:#585858;">kali</div><div class="t" style="left:660.10px;top:606.91px;color:#375845;">6.1M</div><div class="t" style="left:739.31px;top:606.91px;color:#32513e;">0.0</div><div class="t" style="left:396.06px;top:621.03px;color:#414141;">[-]</div><div class="t" style="left:422.46px;top:621.03px;color:#535353;">1639</div><div class="t" style="left:455.47px;top:621.03px;color:#37423b;">ibus-daemon</div><div class="t" style="left:613.89px;top:621.03px;color:#535353;">kali</div><div class="t" style="left:666.70px;top:621.03px;color:#355341;">12M</div><div class="t" style="left:739.31px;top:621.03px;color:#304d3b;">0.0</div><div class="t" style="left:442.27px;top:635.15px;color:#4f4f4f;">1795</div><div class="t" style="left:475.27px;top:635.15px;color:#343e37;">ibus-extension-</div><div class="t" style="left:613.89px;top:635.15px;color:#4f4f4f;">kali</div><div class="t" style="left:666.70px;top:635.15px;color:#324f3e;">31M</div><div class="t" style="left:739.31px;top:635.15px;color:#2d4938;">0.0</div><div class="t" style="left:442.27px;top:649.27px;color:#4a4a4a;">1962</div><div class="t" style="left:475.27px;top:649.27px;color:#323a34;">ibus-engine-sim</div><div class="t" style="left:613.89px;top:649.27px;color:#4a4a4a;">kali</div><div class="t" style="left:660.10px;top:649.27px;color:#2f4a3b;">7.0M</div><div class="t" style="left:739.31px;top:649.27px;color:#2b4535;">0.0</div><div class="t" style="left:376.26px;top:663.39px;color:#eeeeee;font-weight:bold;">select</div><div class="t" style="left:442.27px;top:663.39px;color:#555555;">info</div><div class="t" style="left:495.07px;top:663.39px;color:#555555;">terminate</div><div class="t" style="left:567.69px;top:663.39px;color:#555555;">kill</div><div class="t" style="left:607.29px;top:663.39px;color:#555555;">signals</div><div class="t" style="left:732.71px;top:663.39px;color:#eeeeee;font-weight:bold;">0/226</div></div>
<svg style="position:absolute;left:0;top:0" width="1712" height="896" viewBox="0 0 1712 896"><path fill="none" stroke="#17233f" stroke-width="3.1" stroke-linejoin="miter" stroke-miterlimit="10" d="M1473.99 825.41A13.4 13.4 0 0 1 1496.93 839.19"/><path fill="none" stroke="#17233f" stroke-width="3.1" stroke-linejoin="miter" stroke-miterlimit="10" d="M1495.06 841.87A13.4 13.4 0 0 1 1472.68 827.88"/><path fill="none" stroke="#17233f" stroke-width="3.1" stroke-linejoin="miter" stroke-miterlimit="10" d="M1511.3 847.6V819.9h8.2a7.4 7.4 0 0 1 0 14.8h-8.2"/><path fill="none" stroke="#17233f" stroke-width="3.1" stroke-linejoin="miter" stroke-miterlimit="10" d="M1555.2 823.4a9.5 7.5 0 0 0-8.6-3.6c-4.6 0-7.6 2.7-7.6 6.1 0 3.5 2.8 5.1 7.3 6.2"/><path fill="none" stroke="#17233f" stroke-width="3.1" stroke-linejoin="miter" stroke-miterlimit="10" d="M1548.6 833.3c4.6 1.2 7.4 3 7.4 6.8 0 4.2-3.5 6.9-8.2 6.9-3.7 0-7-1.7-9-4.3"/><path fill="none" stroke="#17233f" stroke-width="3.1" stroke-linejoin="miter" stroke-miterlimit="10" d="M1571.6 818.6L1581.3 844.8L1590.2 823.5"/><path fill="none" stroke="#17233f" stroke-width="3.1" stroke-linejoin="miter" stroke-miterlimit="10" d="M1588.8 818.6L1596.4 844.8L1605.8 818.6"/><path fill="none" stroke="#17233f" stroke-width="3.1" stroke-linejoin="miter" stroke-miterlimit="10" d="M1609.8 848.2L1622.4 821.3L1635 848.2"/><path fill="none" stroke="#17233f" stroke-width="3.1" stroke-linejoin="miter" stroke-miterlimit="10" d="M1616.8 839.4H1628.2"/><path fill="none" stroke="#17233f" stroke-width="3.1" stroke-linejoin="miter" stroke-miterlimit="10" d="M1637.8 820.1H1662.4M1650.1 820.1V848.2"/><circle cx="1662" cy="845.4" r="2.1" fill="#17233f"/></svg>
</body></html>
